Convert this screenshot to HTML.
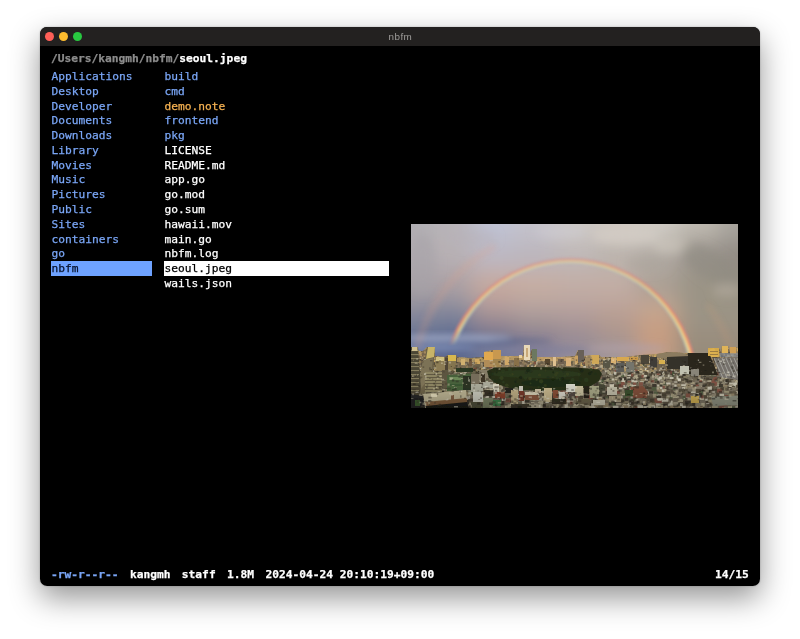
<!DOCTYPE html>
<html>
<head>
<meta charset="utf-8">
<title>nbfm</title>
<style>
html,body{margin:0;padding:0;background:#fff;}
body{width:800px;height:639px;position:relative;overflow:hidden;font-family:"DejaVu Sans Mono","Liberation Mono",monospace;font-size:11.23px;line-height:14.79px;color:#fff;}
.win{position:absolute;left:40px;top:27px;width:720px;height:559.4px;background:#000;border-radius:7px;overflow:hidden;
}
.shadow{position:absolute;left:40px;top:27px;width:720px;height:559px;border-radius:7px;box-shadow:0 12px 30px rgba(0,0,0,.42),0 0 2px rgba(0,0,0,.28);}
.tb{position:absolute;left:0;top:0;width:720px;height:19px;background:#232120;}
.tl{position:absolute;top:5.2px;width:9.2px;height:9.2px;border-radius:50%;}
.title{position:absolute;left:0;width:720px;top:3.6px;text-align:center;font-family:"Liberation Sans","DejaVu Sans",sans-serif;font-size:9.9px;letter-spacing:0.42px;padding-left:0.4px;line-height:12px;color:#a09e9c;}
.path{position:absolute;left:10.5px;top:24.5px;font-weight:bold;white-space:pre;color:#8c8c8c;}
.path b{color:#fff;}
.col{position:absolute;top:42.2px;}
.col div{height:14.79px;line-height:16.6px;white-space:pre;padding-left:0.5px;box-sizing:border-box;}
.d{color:#7aa6f6;}
.n{color:#f6b252;}
.c1{left:11.1px;width:100.9px;}
.c2{left:123.9px;width:225.1px;}
.sel1{background:#6ea2ff;color:#06102a;}
.sel2{background:#fff;color:#000;}
.st{position:absolute;left:11px;top:541.4px;font-weight:bold;white-space:pre;}
.st span{margin-right:11.4px;}
.cnt{position:absolute;right:11px;top:541.4px;font-weight:bold;}
.img{position:absolute;left:371px;top:197px;width:327px;height:184px;background:#b0a8a6;overflow:hidden;}
.path,.col,.st,.cnt,.title{will-change:transform;}
.col,.path,.st,.cnt{-webkit-text-stroke:0.25px;}
</style>
</head>
<body>
<div class="shadow"></div>
<div class="win">
<div class="tb">
<div class="tl" style="left:4.5px;background:#fe5f57;"></div>
<div class="tl" style="left:18.5px;background:#febc2e;"></div>
<div class="tl" style="left:32.7px;background:#28c840;"></div>
<div class="title">nbfm</div>
</div>
<div class="path">/Users/kangmh/nbfm/<b>seoul.jpeg</b></div>
<div class="col c1 d">
<div>Applications</div>
<div>Desktop</div>
<div>Developer</div>
<div>Documents</div>
<div>Downloads</div>
<div>Library</div>
<div>Movies</div>
<div>Music</div>
<div>Pictures</div>
<div>Public</div>
<div>Sites</div>
<div>containers</div>
<div>go</div>
<div class="sel1">nbfm</div>
</div>
<div class="col c2">
<div class="d">build</div>
<div class="d">cmd</div>
<div class="n">demo.note</div>
<div class="d">frontend</div>
<div class="d">pkg</div>
<div>LICENSE</div>
<div>README.md</div>
<div>app.go</div>
<div>go.mod</div>
<div>go.sum</div>
<div>hawaii.mov</div>
<div>main.go</div>
<div>nbfm.log</div>
<div class="sel2">seoul.jpeg</div>
<div>wails.json</div>
</div>
<div class="img" id="photo">
<svg width="327" height="184" viewBox="0 0 327 184" style="position:absolute;left:0;top:0;display:block">
<defs>
<filter id="b12" x="-20%" y="-20%" width="140%" height="140%"><feGaussianBlur stdDeviation="11"/></filter>
<filter id="b6" x="-30%" y="-30%" width="160%" height="160%"><feGaussianBlur stdDeviation="5"/></filter>
<filter id="b3" x="-20%" y="-20%" width="140%" height="140%"><feGaussianBlur stdDeviation="3"/></filter>
<filter id="b1" x="-5%" y="-5%" width="110%" height="110%"><feGaussianBlur stdDeviation="0.85"/></filter>
<filter id="b05" x="-5%" y="-5%" width="110%" height="110%"><feGaussianBlur stdDeviation="0.7"/></filter>
<linearGradient id="rbm" x1="0" y1="30" x2="0" y2="125" gradientUnits="userSpaceOnUse"><stop offset="0" stop-color="#fff" stop-opacity="0.42"/><stop offset="0.5" stop-color="#fff" stop-opacity="0.7"/><stop offset="1" stop-color="#fff" stop-opacity="1"/></linearGradient>
<linearGradient id="lf" x1="0" y1="106" x2="0" y2="122" gradientUnits="userSpaceOnUse"><stop offset="0" stop-color="#000" stop-opacity="0"/><stop offset="1" stop-color="#000" stop-opacity="1"/></linearGradient>
<mask id="rbmask"><rect x="0" y="0" width="327" height="184" fill="url(#rbm)"/><rect x="0" y="106" width="100" height="16" fill="url(#lf)"/><rect x="0" y="122" width="100" height="30" fill="#000"/></mask>
<clipPath id="skyclip"><rect x="0" y="0" width="327" height="130"/></clipPath>
</defs>
<rect x="0" y="0" width="327" height="184" fill="#b0a8a8"/>
<g filter="url(#b12)">
<rect x="-60.0" y="-60.0" width="81.0" height="76.0" fill="#b0aeb2"/>
<rect x="20.5" y="-60.0" width="41.5" height="76.0" fill="#b8b4b8"/>
<rect x="61.5" y="-60.0" width="41.5" height="76.0" fill="#bfc2d4"/>
<rect x="102.5" y="-60.0" width="41.5" height="76.0" fill="#c4c2cb"/>
<rect x="143.5" y="-60.0" width="41.5" height="76.0" fill="#ccc8c4"/>
<rect x="184.5" y="-60.0" width="41.5" height="76.0" fill="#cfc8c1"/>
<rect x="225.5" y="-60.0" width="41.5" height="76.0" fill="#d0ccc5"/>
<rect x="266.5" y="-60.0" width="41.0" height="76.0" fill="#bfbab1"/>
<rect x="307.0" y="-60.0" width="80.5" height="76.0" fill="#a8a49d"/>
<rect x="-60.0" y="15.5" width="81.0" height="31.5" fill="#b3acb0"/>
<rect x="20.5" y="15.5" width="41.5" height="31.5" fill="#b7b0b4"/>
<rect x="61.5" y="15.5" width="41.5" height="31.5" fill="#bcb8c3"/>
<rect x="102.5" y="15.5" width="41.5" height="31.5" fill="#bcb6bd"/>
<rect x="143.5" y="15.5" width="41.5" height="31.5" fill="#bfb8b8"/>
<rect x="184.5" y="15.5" width="41.5" height="31.5" fill="#bbb4ad"/>
<rect x="225.5" y="15.5" width="41.5" height="31.5" fill="#b3aca5"/>
<rect x="266.5" y="15.5" width="41.0" height="31.5" fill="#9b948d"/>
<rect x="307.0" y="15.5" width="80.5" height="31.5" fill="#938c85"/>
<rect x="-60.0" y="46.5" width="81.0" height="29.0" fill="#a7a0a4"/>
<rect x="20.5" y="46.5" width="41.5" height="29.0" fill="#aba0a4"/>
<rect x="61.5" y="46.5" width="41.5" height="29.0" fill="#c6a99e"/>
<rect x="102.5" y="46.5" width="41.5" height="29.0" fill="#c6ada2"/>
<rect x="143.5" y="46.5" width="41.5" height="29.0" fill="#c2ada5"/>
<rect x="184.5" y="46.5" width="41.5" height="29.0" fill="#c2ada5"/>
<rect x="225.5" y="46.5" width="41.5" height="29.0" fill="#aba095"/>
<rect x="266.5" y="46.5" width="41.0" height="29.0" fill="#9b9486"/>
<rect x="307.0" y="46.5" width="80.5" height="29.0" fill="#979082"/>
<rect x="-60.0" y="75.0" width="81.0" height="22.5" fill="#8c8c9b"/>
<rect x="20.5" y="75.0" width="41.5" height="22.5" fill="#85889a"/>
<rect x="61.5" y="75.0" width="41.5" height="22.5" fill="#ae9999"/>
<rect x="102.5" y="75.0" width="41.5" height="22.5" fill="#b3a19d"/>
<rect x="143.5" y="75.0" width="41.5" height="22.5" fill="#b6a19d"/>
<rect x="184.5" y="75.0" width="41.5" height="22.5" fill="#baa196"/>
<rect x="225.5" y="75.0" width="41.5" height="22.5" fill="#c5a58f"/>
<rect x="266.5" y="75.0" width="41.0" height="22.5" fill="#9b9486"/>
<rect x="307.0" y="75.0" width="80.5" height="22.5" fill="#9b9486"/>
<rect x="-60.0" y="97.0" width="81.0" height="17.5" fill="#6d7895"/>
<rect x="20.5" y="97.0" width="41.5" height="17.5" fill="#657294"/>
<rect x="61.5" y="97.0" width="41.5" height="17.5" fill="#80788a"/>
<rect x="102.5" y="97.0" width="41.5" height="17.5" fill="#93878e"/>
<rect x="143.5" y="97.0" width="41.5" height="17.5" fill="#9f8d92"/>
<rect x="184.5" y="97.0" width="41.5" height="17.5" fill="#ae958a"/>
<rect x="225.5" y="97.0" width="41.5" height="17.5" fill="#c89d80"/>
<rect x="266.5" y="97.0" width="41.0" height="17.5" fill="#9b9082"/>
<rect x="307.0" y="97.0" width="80.5" height="17.5" fill="#9b9082"/>
<rect x="-60.0" y="114.0" width="81.0" height="36.5" fill="#5e6c94"/>
<rect x="20.5" y="114.0" width="41.5" height="36.5" fill="#56648c"/>
<rect x="61.5" y="114.0" width="41.5" height="36.5" fill="#697498"/>
<rect x="102.5" y="114.0" width="41.5" height="36.5" fill="#807c96"/>
<rect x="143.5" y="114.0" width="41.5" height="36.5" fill="#948c99"/>
<rect x="184.5" y="114.0" width="41.5" height="36.5" fill="#a39596"/>
<rect x="225.5" y="114.0" width="41.5" height="36.5" fill="#c59d84"/>
<rect x="266.5" y="114.0" width="41.0" height="36.5" fill="#978c7a"/>
<rect x="307.0" y="114.0" width="80.5" height="36.5" fill="#978c7a"/>
</g>
<g filter="url(#b6)">
<ellipse cx="215" cy="12" rx="34" ry="9" fill="#d8d2ca" opacity="0.55"/>
<ellipse cx="150" cy="8" rx="26" ry="7" fill="#cfcdd6" opacity="0.5"/>
<ellipse cx="262" cy="22" rx="20" ry="8" fill="#d2ccc2" opacity="0.5"/>
<ellipse cx="300" cy="42" rx="34" ry="14" fill="#8e8a82" opacity="0.55" transform="rotate(35 300 42)"/>
<ellipse cx="316" cy="66" rx="14" ry="7" fill="#b4ac9e" opacity="0.6"/>
<ellipse cx="236" cy="40" rx="22" ry="8" fill="#a8a29a" opacity="0.4"/>
<ellipse cx="12" cy="40" rx="14" ry="30" fill="#a6a2a8" opacity="0.5"/>
<ellipse cx="60" cy="14" rx="26" ry="9" fill="#b6b2b8" opacity="0.4"/>
</g>
<g filter="url(#b3)">
<ellipse cx="40" cy="114" rx="60" ry="3.5" fill="#a4acc8" opacity="0.8"/>
<ellipse cx="60" cy="119" rx="50" ry="2.5" fill="#5c6c94" opacity="0.8"/>
<ellipse cx="25" cy="124" rx="40" ry="3" fill="#8494bc" opacity="0.8"/>
<ellipse cx="120" cy="126" rx="60" ry="4" fill="#80809c" opacity="0.6"/>
<ellipse cx="110" cy="117" rx="32" ry="2.2" fill="#5c6488" opacity="0.7"/>
<ellipse cx="215" cy="124" rx="40" ry="4" fill="#b0a0a8" opacity="0.6"/>
</g>
<g clip-path="url(#skyclip)">
<g filter="url(#b3)" opacity="0.3" fill="none"><path d="M 6 125 A 158 158 0 0 1 84 22" stroke="#e0a088" stroke-width="5"/><path d="M 296 80 A 160 160 0 0 1 320 125" stroke="#d8a078" stroke-width="5" opacity="0.7"/></g>
<g mask="url(#rbmask)"><g filter="url(#b1)" fill="none">
<circle cx="159.1" cy="161.5" r="127.3" stroke="#d08088" stroke-width="1.3" opacity="0.6"/>
<circle cx="159.1" cy="161.5" r="126.2" stroke="#ec8870" stroke-width="1.4" opacity="0.95"/>
<circle cx="159.1" cy="161.5" r="125.0" stroke="#f8b070" stroke-width="1.4" opacity="1"/>
<circle cx="159.1" cy="161.5" r="123.8" stroke="#f8d890" stroke-width="1.4" opacity="1"/>
<circle cx="159.1" cy="161.5" r="122.6" stroke="#d4dca8" stroke-width="1.4" opacity="0.8"/>
<circle cx="159.1" cy="161.5" r="121.4" stroke="#b0bcc8" stroke-width="1.3" opacity="0.4"/>
</g></g></g>
<defs><linearGradient id="cg" x1="0" y1="121" x2="0" y2="184" gradientUnits="userSpaceOnUse"><stop offset="0" stop-color="#a88c5c"/><stop offset="0.3" stop-color="#80705a"/><stop offset="0.65" stop-color="#6c6450"/><stop offset="1" stop-color="#585044"/></linearGradient>
<linearGradient id="dk" x1="0" y1="160" x2="0" y2="184" gradientUnits="userSpaceOnUse"><stop offset="0" stop-color="#000" stop-opacity="0"/><stop offset="1" stop-color="#000" stop-opacity="0.22"/></linearGradient>
<clipPath id="cityclip"><polygon points="0,123 7,123 7,127 12,127 16,123 24,123 24,132 34,133 37,131 45,131 46,133 60,134 73,133 73,128 82,126 90,127 90,132 112,132 113,121 119,121 119,130 121,125 126,125 126,133 150,133 164,132 167,126 173,126 173,132 181,131 188,131 190,133 215,133 230,131 246,130 258,128 272,129 277,129 297,129 297,124 308,124 309,128 311,122 317,122 318,126 319,123 325,123 327,124 327,184 0,184"/></clipPath></defs>
<g filter="url(#b05)">
<polygon points="0,123 7,123 7,127 12,127 16,123 24,123 24,132 34,133 37,131 45,131 46,133 60,134 73,133 73,128 82,126 90,127 90,132 112,132 113,121 119,121 119,130 121,125 126,125 126,133 150,133 164,132 167,126 173,126 173,132 181,131 188,131 190,133 215,133 230,131 246,130 258,128 272,129 277,129 297,129 297,124 308,124 309,128 311,122 317,122 318,126 319,123 325,123 327,124 327,184 0,184" fill="url(#cg)"/>
<g clip-path="url(#cityclip)">
<g filter="url(#b3)">
<rect x="-5" y="136" width="85" height="36" fill="#504c38"/>
<rect x="185" y="140" width="150" height="24" fill="#746c5c"/>
<rect x="60" y="163" width="270" height="24" fill="#706858"/>
<rect x="250" y="130" width="60" height="22" fill="#3c3830"/>
</g>
<g opacity="0.75">
<path fill="#c0a070" d="M-1.8 122.4h1.9v2h-1.9zM47.9 122.1h1.7v1.4h-1.7zM63.6 121.4h1.7v1.6h-1.7zM75.9 122h2.4v1.9h-2.4zM89.2 122.3h1.4v1.8h-1.4zM90.6 122h1.4v1.4h-1.4zM109.6 122.4h2.3v1.6h-2.3zM126.3 122.1h1.8v1.5h-1.8zM175.2 121.9h1.4v2h-1.4zM201.6 122.1h1.4v1.1h-1.4zM238.2 121.5h2.4v1.3h-2.4zM247.6 122.4h2.5v1.7h-2.5zM251.9 122.2h1.6v1.1h-1.6zM264.6 122h2.4v2h-2.4zM267.1 122.3h2.4v2h-2.4zM276.5 122h1.2v1.8h-1.2zM305.7 121.6h2.2v1.4h-2.2zM38.3 123.3h2v1.8h-2zM76.5 123.3h1.1v2h-1.1zM86.7 122.8h2.2v1h-2.2zM155.3 123.8h2.1v1.2h-2.1zM168.8 123.5h2.4v1.3h-2.4zM192.1 123.7h2.3v1.5h-2.3zM201 123.3h2.3v1.4h-2.3zM207.8 123h2.1v1.3h-2.1zM220.7 123h2.2v1.2h-2.2zM224.3 123.6h1.8v1.4h-1.8zM247.4 122.9h2.5v1.9h-2.5zM249.9 123.6h1.3v1h-1.3zM40.7 124.8h1.3v1.7h-1.3zM54.9 124.8h1.3v1.4h-1.3zM62.5 123.9h1.9v1.4h-1.9zM74.5 123.9h1.3v1.8h-1.3zM99.7 124.1h1.4v1.1h-1.4zM137.6 124.5h2.4v1.6h-2.4zM146.2 123.9h1.2v1.7h-1.2zM152 124.3h1.1v1.1h-1.1zM164.3 124.6h2.1v1h-2.1zM184.6 124.1h2.1v1h-2.1zM189.1 124.3h1.5v1.9h-1.5zM192.2 124.9h1.7v1.7h-1.7zM216 124.3h2.2v1.5h-2.2zM241.5 124.6h1.7v1h-1.7zM9.8 125.1h1.6v1.1h-1.6zM61.1 125.5h2.2v1.3h-2.2zM80.7 125.3h1.7v2h-1.7zM86.1 125.1h2.5v1.2h-2.5zM147.3 125.4h2.5v1.8h-2.5zM171.9 125.3h1.4v1.3h-1.4zM201 125.5h1.8v1.2h-1.8zM203 125.2h1.9v2h-1.9zM212.5 125.7h1.6v2h-1.6zM265.9 126.2h1.7v1.9h-1.7zM273.9 125h1.1v1.8h-1.1zM290.2 125h1.2v1h-1.2zM298.9 125.3h2v1.7h-2zM302.1 125.3h2.2v1h-2.2zM27.7 127.2h1.7v1.9h-1.7zM57.5 127.3h1.5v1.7h-1.5zM74.8 126.7h1.6v1.6h-1.6zM88 126.6h1.2v1.3h-1.2zM98.8 126.4h2.2v1.1h-2.2zM108.8 126.7h2.4v1h-2.4zM144.6 127.2h1.8v1.7h-1.8zM152.9 126.9h2.5v1.5h-2.5zM178.7 126.5h1.9v1.8h-1.9zM193 126.8h1.3v2.1h-1.3zM300.4 126.5h1.3v1.7h-1.3zM9.1 128.2h1.2v1.7h-1.2zM20.5 127.4h1.1v1.2h-1.1zM37.4 127.6h2.3v1.4h-2.3zM72.4 127.8h2.5v1.7h-2.5zM75.4 127.4h1.7v2h-1.7zM103 127.8h2v1.1h-2zM128.6 127.9h2.3v1.3h-2.3zM131.5 127.4h1.9v1.2h-1.9zM175.6 127.9h1.4v1.5h-1.4zM221.5 127.7h2.1v1.4h-2.1zM226.8 127.6h2.4v2h-2.4zM278.8 128.4h2.1v1.3h-2.1zM296.3 128.4h2.3v1.3h-2.3zM312.3 128h2.4v1.4h-2.4zM14.8 129.4h2.2v1.7h-2.2zM17.5 129.5h1.4v1.8h-1.4zM61.2 129.4h2.5v1.8h-2.5zM85.1 129.5h1.9v1.3h-1.9zM149.5 128.9h1.7v1.8h-1.7zM202 128.7h1.1v1.8h-1.1zM229.6 129.1h2v1.7h-2zM242.6 128.7h1.3v1.6h-1.3zM246.3 128.8h1.4v1.2h-1.4zM247.8 128.6h1.7v1h-1.7zM287.8 128.8h1.9v1.4h-1.9zM289.8 129.4h1.5v1.7h-1.5zM291.4 128.9h1v1.1h-1zM306.2 128.6h1.1v1.6h-1.1zM324.6 128.8h2v1.6h-2zM38.2 130.6h2.5v1.9h-2.5zM54.3 130.4h2v1.7h-2zM96.7 130.8h2.3v1.6h-2.3zM121.4 130.5h1.2v1.9h-1.2zM149.9 129.9h2.2v1.8h-2.2zM163.7 130.7h1.2v1.1h-1.2zM176.1 129.8h2.4v1.3h-2.4zM216.6 130.1h1.9v1.9h-1.9zM218.7 130.6h2.5v1.3h-2.5zM234.4 130.9h1.5v1.4h-1.5zM258.8 129.9h2.3v1.8h-2.3zM283.8 130.8h2.5v1.8h-2.5zM307.7 130.6h2.4v1h-2.4zM322.7 130.5h2.2v1.7h-2.2zM3.5 131.9h2.6v1.8h-2.6zM46.6 131.3h2.6v2.2h-2.6zM136.7 131.5h2.5v1.3h-2.5zM139.4 131.9h1.7v1.2h-1.7zM141.2 131.8h2.3v1.8h-2.3zM145.4 131.5h2.3v1.7h-2.3zM150.2 131.1h1.6v1.2h-1.6zM170.8 131.1h1.4v2.1h-1.4zM188.1 131.6h2.6v1.3h-2.6zM211 131.1h1.6v1.1h-1.6zM25.4 132.2h1.9v2.1h-1.9zM32.1 132.2h1.9v2h-1.9zM47.6 133h1.2v1.8h-1.2zM73.5 133.3h1.5v1.6h-1.5zM80.9 132.7h1.8v2h-1.8zM84.4 132.8h1.4v1.1h-1.4zM92.3 132.7h2.2v2.1h-2.2zM154.9 132.3h1.4v1.1h-1.4zM192.8 133.1h1.3v1.6h-1.3zM200.3 132.9h2.4v2.1h-2.4zM219 132.3h2.2v1.9h-2.2zM225.1 132.6h2.2v1.7h-2.2zM234.6 133h2.4v2h-2.4zM263.2 133.2h1.2v1.9h-1.2zM280.3 133.3h2.4v2.1h-2.4zM293 132.4h1.3v1.9h-1.3zM3.5 133.8h1.9v2.1h-1.9zM75.4 133.5h2.3v1.2h-2.3zM117.6 134h1.5v1.8h-1.5zM119.3 134.2h2.7v1.4h-2.7zM133.3 133.9h1.2v1.4h-1.2zM153.3 133.5h1.2v2.2h-1.2zM206 133.9h1.2v1.8h-1.2zM240.8 133.9h2.5v1.9h-2.5zM276.4 134.1h1.3v1.2h-1.3zM300.6 134h1.6v2h-1.6zM4.7 135.8h2.7v1.1h-2.7zM112 135.6h1.6v1.3h-1.6zM154.6 135.6h2.7v1.7h-2.7zM214.1 134.8h1.6v1.2h-1.6zM225.4 135.7h2.6v1.9h-2.6zM287.4 134.9h2.2v1.9h-2.2zM321.1 135h1.4v2.1h-1.4zM11 136.4h3v2.1h-3zM24.1 136.7h2.7v2.2h-2.7zM40.2 137.3h2.7v2.1h-2.7zM53 136.2h2.6v1.5h-2.6zM71.5 136.5h1.7v1.7h-1.7zM89.1 136.8h1.5v2.2h-1.5zM124.8 136.3h2.8v2.3h-2.8zM139.1 137h2.5v2.1h-2.5zM144.2 136.7h2.8v2h-2.8zM205.5 136.5h1.5v1.5h-1.5zM238.5 136.5h1.8v1.6h-1.8zM242.3 136.8h1.2v2.3h-1.2zM253.1 136.5h2.1v1.9h-2.1zM69.3 138.2h2.1v2.2h-2.1zM91.7 137.6h2.9v2.4h-2.9zM114 138h2.4v1.4h-2.4zM119.3 138.4h3.1v2.3h-3.1zM175.3 138h1.3v2.1h-1.3zM178.4 138.6h2.2v1.3h-2.2zM220.1 138h2.2v2.1h-2.2zM281.9 137.6h1.3v2.5h-1.3zM28.4 139.4h1.9v1.6h-1.9zM33.2 140.1h1.4v2.6h-1.4zM44 138.9h1.7v2.5h-1.7zM74.4 139.8h1.3v1.7h-1.3zM85.5 140.1h1.5v2.4h-1.5zM129.1 139.9h2.2v2h-2.2zM146.6 139.5h1.9v2h-1.9zM223.7 139.4h2.4v1.8h-2.4zM295.5 139h1.9v2.2h-1.9zM299.5 140h2v2.1h-2zM20.5 140.4h2v2.4h-2zM51.9 140.7h3.3v1.7h-3.3zM103.2 140.4h2.7v1.7h-2.7zM156.1 141.6h3.2v2.1h-3.2zM188.6 141.3h1.9v1.4h-1.9zM257.4 140.9h2.8v1.6h-2.8zM0.3 142.7h1.8v1.7h-1.8zM39.1 142h2.7v1.6h-2.7zM316.8 142.9h2v2.6h-2zM11.5 143.5h3.1v2h-3.1zM15.2 144.1h3v1.5h-3zM31.4 143.7h2.5v2h-2.5zM150.3 143.6h2v1.3h-2zM159.9 144.6h2.3v1.5h-2.3zM166.8 144.1h3.1v1.6h-3.1zM190.3 144h2.4v1.8h-2.4zM214.6 144.5h3v2.2h-3zM271.4 143.5h2.8v2.7h-2.8zM293.3 144.2h2.9v2.5h-2.9zM309.4 143.6h2.1v2.3h-2.1zM182.6 146.2h2.4v2.5h-2.4z"/>
<path fill="#d0b070" d="M0.1 121.5h2.2v1.5h-2.2zM27.1 121.7h2.3v1.7h-2.3zM34.2 122.2h1.8v1.6h-1.8zM36 122.3h1.4v1.7h-1.4zM40.2 122.5h2.3v1.6h-2.3zM46.8 121.5h1.1v1.3h-1.1zM67.6 122.2h1.8v2h-1.8zM74.8 121.5h1.1v1.1h-1.1zM154.8 121.5h2.2v1.4h-2.2zM160.4 122.5h2.2v1.2h-2.2zM179.3 121.9h2.2v1h-2.2zM199.7 122.5h1.7v1.9h-1.7zM214.3 121.8h1.7v1.8h-1.7zM236.3 121.6h1.6v1.2h-1.6zM262.4 122.5h2.1v1.6h-2.1zM269.4 122.4h2.3v1.4h-2.3zM277.7 122.4h2.2v1h-2.2zM303.6 122.6h1.9v1.1h-1.9zM-0.9 122.8h2v1.7h-2zM1.2 123h1.2v1.4h-1.2zM26.5 122.7h1.2v1.1h-1.2zM30.3 123h1.7v1.5h-1.7zM54.5 122.9h1.8v1.5h-1.8zM56.7 123.5h1.4v1.3h-1.4zM64.8 122.7h2.5v1.2h-2.5zM71.4 123h2.5v1h-2.5zM85.4 122.8h1.2v1.8h-1.2zM96.9 123.1h2.4v2h-2.4zM120 123.1h2.3v1.6h-2.3zM151.7 123.4h1.7v2.1h-1.7zM161.5 123.7h2.3v1.2h-2.3zM178.6 123.8h1.6v1.7h-1.6zM182.6 122.6h2v1.4h-2zM222.9 123.1h1.6v1.2h-1.6zM244.9 123.6h2.2v2h-2.2zM315.3 123.5h2.5v1.4h-2.5zM2 124.4h1.3v1.8h-1.3zM67.4 123.9h1.3v1.4h-1.3zM76.1 125h1.4v1.2h-1.4zM85.1 124.6h2.5v1.4h-2.5zM115.7 124.9h1.6v1.8h-1.6zM130 124.3h1.6v1h-1.6zM161.9 123.9h2.2v1.8h-2.2zM231.8 125h1.4v1.7h-1.4zM270.2 124.6h2v1.6h-2zM3.1 126h2v1.1h-2zM42.9 125.7h2.4v1.7h-2.4zM82.7 125.6h1.8v1.6h-1.8zM96.3 126h1.9v1.3h-1.9zM122.8 125.9h2.3v1.8h-2.3zM125.6 125.5h2.5v1.9h-2.5zM137.9 125.8h1.3v1.9h-1.3zM141.2 126.1h2.4v2h-2.4zM150.9 125h1.5v1.4h-1.5zM313.9 125.4h2.3v1.1h-2.3zM321.2 125.3h1.7v1.5h-1.7zM-2.5 126.3h2.3v1.7h-2.3zM43.3 126.6h1.7v1.8h-1.7zM45 126.6h1.8v1.6h-1.8zM55.1 126.8h2.4v1.2h-2.4zM59.3 127.2h1.7v1.7h-1.7zM67.9 126.4h1.7v1.7h-1.7zM77.7 127.3h2.3v1.3h-2.3zM107 126.7h1.6v1.9h-1.6zM115.6 127.1h2v1.1h-2zM164.6 126.5h2.1v1.2h-2.1zM166.7 126.6h1.4v1.3h-1.4zM187.7 127h1.2v1h-1.2zM189.2 126.5h1.8v1.6h-1.8zM219.8 126.7h2v1.9h-2zM246.5 126.5h2v1.9h-2zM1.5 128.2h1.9v1.9h-1.9zM6.4 128.3h2.2v1.3h-2.2zM18.3 128h1.8v1.9h-1.8zM28.5 128.5h2.2v1.9h-2.2zM54 128.2h1.7v1.2h-1.7zM57.7 128.5h1.6v1.1h-1.6zM94.3 127.8h1.1v1.8h-1.1zM117.5 127.8h2v1.1h-2zM157.5 128.5h2.3v1.8h-2.3zM246.1 127.8h1.6v1.2h-1.6zM262 127.8h1.1v1.8h-1.1zM276.2 127.5h2.2v1.4h-2.2zM327.9 128h1.8v1.2h-1.8zM29.9 129.6h1.2v1.6h-1.2zM35.9 128.7h2.1v2h-2.1zM65.7 129.4h1.9v1.6h-1.9zM72.7 129.5h1.7v1.4h-1.7zM74.4 129.2h1.4v1.6h-1.4zM80.7 128.7h1.4v2.1h-1.4zM101.6 128.6h1.4v1.1h-1.4zM104.5 129.4h1.9v1.6h-1.9zM134.2 128.6h1.3v1.5h-1.3zM176.6 129.4h1.8v1.8h-1.8zM192.3 128.9h1.9v1.7h-1.9zM197.8 128.7h1.9v1.5h-1.9zM203.1 129.1h2.4v1.5h-2.4zM249.3 129.3h1.8v1.2h-1.8zM304.5 129.3h1.5v1.2h-1.5zM307.6 128.9h2v1.9h-2zM41.1 130.9h2.2v1.1h-2.2zM102.9 129.7h2.4v1.9h-2.4zM138 130.8h1.5v1.8h-1.5zM170.1 130.2h1.6v1.3h-1.6zM179.5 130h2v2h-2zM191.2 130h2v1.3h-2zM193.7 130.5h1.7v1.5h-1.7zM200.7 130.7h2.5v1.4h-2.5zM203.5 129.8h1.3v2.1h-1.3zM240.1 130.9h2.1v2h-2.1zM252.6 130.6h2.2v1.4h-2.2zM56.7 131.1h1.6v2h-1.6zM64.7 131.8h2.3v2.1h-2.3zM74 131.4h2.4v1.2h-2.4zM80 131.4h2.1v1.7h-2.1zM97.9 131.8h2.1v1.8h-2.1zM257.1 132h2.6v1.8h-2.6zM267.8 131.6h1.6v1h-1.6zM271.3 130.9h1.2v1.7h-1.2zM303.1 131.9h1.4v1.3h-1.4zM306.7 131.7h1.1v2.1h-1.1zM308 131.3h1.8v1.5h-1.8zM314.3 132h2.7v1.5h-2.7zM316.8 131.9h2.6v1.9h-2.6zM328.1 131.5h2v1.4h-2zM1.6 132.7h2.4v1.9h-2.4zM5.9 132.8h1.8v1.5h-1.8zM22.2 133.3h1.6v2h-1.6zM39.2 132.9h1.9v1.4h-1.9zM75.1 132.8h1.4v1.1h-1.4zM87.3 132.5h1.4v1.5h-1.4zM110.6 132.9h1.4v1.5h-1.4zM190.8 132.5h1.8v1.2h-1.8zM210.1 132.8h2.4v1.6h-2.4zM284.1 133.1h1.5v1.5h-1.5zM313.4 132.4h1.1v1.2h-1.1zM326.2 132.2h2.2v1.2h-2.2zM23.3 133.9h1.4v1.6h-1.4zM30.8 134.3h2.7v1.7h-2.7zM39.2 134.2h1.8v1.8h-1.8zM130.8 133.5h2.5v1.2h-2.5zM150.3 134.5h2.4v1.8h-2.4zM181.1 133.6h2.4v1.5h-2.4zM248.9 133.6h1.2v1.8h-1.2zM254.9 134.2h2.7v1.8h-2.7zM306.5 134.2h2.6v2.1h-2.6zM326.2 134.1h1.8v1.8h-1.8zM14.8 135.9h2.3v1.8h-2.3zM53.7 135.5h2.5v1.6h-2.5zM83.1 135h2.9v1.4h-2.9zM87.5 135.4h2.7v1.8h-2.7zM219.7 134.8h2.4v1.2h-2.4zM275.9 135.4h2.2v1.2h-2.2zM280.2 135.3h1.6v1.9h-1.6zM315.7 135.4h2.1v1.8h-2.1zM0.9 136.3h2.9v1.5h-2.9zM20.6 137.2h2.9v1.6h-2.9zM27.5 136.2h1.9v2.1h-1.9zM121.3 136.8h1.9v1.4h-1.9zM181.4 136.9h2.7v1.5h-2.7zM269 136.1h1.6v2.3h-1.6zM286.3 136.3h1.3v2.3h-1.3zM293.3 136.1h1.9v2h-1.9zM305.1 136.5h1.9v1.8h-1.9zM12.6 138.4h2.9v1.5h-2.9zM16.2 138.2h1.3v2.4h-1.3zM17.8 138.2h2.3v1.2h-2.3zM110.8 137.5h2.6v2h-2.6zM137.9 138.3h2.6v1.7h-2.6zM161.7 137.8h2.6v2.3h-2.6zM202.4 138.2h3v1.9h-3zM312.4 137.5h2v2.5h-2zM322 138.4h1.9v1.4h-1.9zM13 139.9h1.7v1.3h-1.7zM94.8 139.2h2.5v1.4h-2.5zM97.9 139.4h1.4v2.2h-1.4zM117.3 139h2.9v1.6h-2.9zM131.7 139.1h2v1.5h-2zM159.7 139.2h1.5v1.9h-1.5zM256 139.4h2.5v1.4h-2.5zM297.5 139h1.9v1.5h-1.9zM320.7 139.9h3.2v1.7h-3.2zM325.9 139.6h2.8v2.5h-2.8zM-1 141.1h2v2.2h-2zM145.8 141.1h1.9v1.7h-1.9zM152.3 141.2h2.1v1.4h-2.1zM175.3 140.6h2.3v1.6h-2.3zM190.6 141.2h3v2.5h-3zM226.4 141.5h1.4v1.7h-1.4zM289.3 140.7h2.5v1.5h-2.5zM326.9 140.8h1.7v1.5h-1.7zM91 142.9h3.1v2h-3.1zM106.1 142h1.8v2.5h-1.8zM114 142.5h2.2v1.6h-2.2zM179.3 142.6h2.1v2h-2.1zM202.2 143h1.5v2.2h-1.5zM212.9 142.5h1.7v2.1h-1.7zM214.6 142.1h2v2.4h-2zM232.7 142.6h2.1v2.7h-2.1zM257.8 142.6h2.2v2.4h-2.2zM266 142.8h2.3v2.6h-2.3zM310.5 143.1h2v1.3h-2zM69.8 143.6h2.9v2.3h-2.9zM90.1 143.9h2.4v1.5h-2.4zM106.3 144.5h1.8v2.1h-1.8zM111.9 143.5h2.3v1.8h-2.3zM264.4 143.6h2.7v2.7h-2.7zM302.3 143.6h3.1v1.6h-3.1zM314.2 143.6h2.3v2.7h-2.3zM226.8 145.8h1.5v2h-1.5zM231.2 145.8h3.1v2.2h-3.1zM234.8 145.7h2.8v2.9h-2.8z"/>
<path fill="#c8a868" d="M2.4 122.1h1.2v1.9h-1.2zM5.6 122.3h1.1v1.2h-1.1zM12.4 121.7h1.6v2.1h-1.6zM18 121.5h2.4v1.1h-2.4zM24.4 121.7h2.5v1.6h-2.5zM83.2 122.3h1v1.1h-1zM102.5 121.7h1.5v1.5h-1.5zM116.4 122h1v1.4h-1zM144.2 122.3h1.3v1.1h-1.3zM148.6 121.6h2.5v2h-2.5zM186.4 121.4h2.4v1.7h-2.4zM195.9 121.8h2v1.5h-2zM271.9 122.2h1.8v1.6h-1.8zM281.2 122.3h2.2v1.6h-2.2zM2.4 123.5h1.4v2h-1.4zM11.1 123h1.8v1.6h-1.8zM52.6 122.6h1.7v1.6h-1.7zM89 123.4h1.5v1.5h-1.5zM95.4 123.5h1.4v1.2h-1.4zM110.5 123.8h2.2v1.8h-2.2zM115 122.8h1.1v1.4h-1.1zM171.4 123h1.3v2h-1.3zM194.5 122.9h1.8v1.1h-1.8zM205.2 123.7h2.3v1.8h-2.3zM210 123.5h1v1.2h-1zM257.2 123.6h1.5v1.4h-1.5zM304.5 122.7h2.3v2h-2.3zM319.9 123.1h1.5v2.1h-1.5zM11.5 124.5h1.9v2h-1.9zM77.9 124.5h2.4v1.9h-2.4zM87.9 124.2h1.9v1.8h-1.9zM107.3 124.2h2.5v2h-2.5zM134.3 124.2h1.1v1.4h-1.1zM153.1 124.1h2.2v1.2h-2.2zM198.6 124.3h1.4v1.9h-1.4zM200.2 124.4h1.2v1.5h-1.2zM214.6 124.3h1.3v1.5h-1.3zM233.2 124.1h2.2v1.3h-2.2zM254.4 124.3h2.4v1.9h-2.4zM265.9 124.5h1.9v1.6h-1.9zM296.6 124.5h2.4v1.6h-2.4zM329.2 123.9h1.3v1.8h-1.3zM0.7 126h2.3v1.1h-2.3zM30.7 125.3h1.3v1.5h-1.3zM46.6 125.1h1.6v1.7h-1.6zM110.6 125.6h1.7v1.7h-1.7zM156.5 125.5h1.7v1.1h-1.7zM164.4 125.3h2.4v1.9h-2.4zM187.2 126.1h2.4v1.7h-2.4zM262.9 126.1h1.6v1.3h-1.6zM286.9 125.2h1.4v1.2h-1.4zM296.3 125.2h2.4v2h-2.4zM329.6 126.1h1.2v1.4h-1.2zM7.6 126.7h2.4v1.2h-2.4zM89.1 126.6h1v2h-1zM92.6 126.4h2.3v1.1h-2.3zM119.4 127.1h1.9v1.5h-1.9zM139.4 127.1h1.9v1.6h-1.9zM173.7 126.7h2.5v1.5h-2.5zM191.3 127h1.8v1.6h-1.8zM237.8 127h1.8v1.9h-1.8zM244 126.7h2.3v1.5h-2.3zM310.6 126.7h1.2v2.1h-1.2zM325.9 126.5h1.5v1.8h-1.5zM3.7 127.7h2.4v2h-2.4zM23.5 128.1h2.4v1.6h-2.4zM47 127.5h2.2v1.2h-2.2zM59.6 128.4h1.4v2.1h-1.4zM68.4 128.2h1.5v1h-1.5zM84.5 127.5h1.9v1.8h-1.9zM122.1 127.4h1.4v1.4h-1.4zM133.8 127.8h2.3v1.9h-2.3zM137.9 128.2h1.2v1.2h-1.2zM146.9 127.9h1.4v1.8h-1.4zM169.6 127.9h1.4v1.9h-1.4zM199.2 128.4h2.1v1.4h-2.1zM204 127.8h2.4v1.5h-2.4zM244.6 128.4h1.4v1.9h-1.4zM253.3 128.1h2v1.6h-2zM263.2 128.4h1.8v1.1h-1.8zM274.7 127.6h1.2v1.4h-1.2zM285.7 128.2h2.1v2h-2.1zM8.3 129.3h2.3v1.5h-2.3zM27.6 129.5h2.1v1.5h-2.1zM33.5 129.4h2v1.8h-2zM69.4 129h1.5v1.3h-1.5zM109.9 128.8h1.3v1.9h-1.3zM111.5 129.6h1.9v1.1h-1.9zM143.8 129.1h1.9v2.1h-1.9zM160.2 129.5h1.2v1.7h-1.2zM173.3 129.5h1.2v1h-1.2zM254.3 128.8h2.2v1.6h-2.2zM268.8 129h1.4v2.1h-1.4zM326.6 128.6h2.5v1.6h-2.5zM28.9 130.6h1.3v1.1h-1.3zM63.2 130.2h1.7v2.1h-1.7zM85.6 130h1.7v1.9h-1.7zM92.3 129.9h1.8v1.8h-1.8zM139.6 130.9h2.4v2h-2.4zM172 130.1h1.6v2h-1.6zM178.5 130.3h1.1v1.6h-1.1zM205.1 129.8h1.8v1.5h-1.8zM213.6 129.9h1.6v1.6h-1.6zM230.7 130.1h1.9v1.8h-1.9zM242.8 130.3h2.6v1.9h-2.6zM267 129.7h1.3v1.4h-1.3zM277 130.8h1.7v1.9h-1.7zM312.8 129.7h1.2v1.7h-1.2zM318.1 130.6h1.8v1.6h-1.8zM26.1 131.8h1.6v1.2h-1.6zM41.9 131.1h2.2v1.4h-2.2zM52.8 131.5h1.2v1.6h-1.2zM118.8 131.7h1.8v1.8h-1.8zM155.5 131.8h2.6v1.4h-2.6zM158 131.9h1.3v2.2h-1.3zM185 131.6h2.6v2h-2.6zM190.7 131.3h2.2v1.6h-2.2zM204.6 131.9h1.2v1.1h-1.2zM208.5 131h2.6v1.3h-2.6zM259.6 131.2h2.6v1.7h-2.6zM295 131.1h2.6v1.2h-2.6zM20.7 132.2h1.3v1.3h-1.3zM27.5 132.7h1.8v1.9h-1.8zM37.2 133.2h2.1v1.9h-2.1zM50.3 132.3h1.8v1.8h-1.8zM68.6 132.9h2.2v2h-2.2zM168.7 132.7h1.6v1.5h-1.6zM179.3 132.6h1.9v1.2h-1.9zM183.6 133.2h2.3v1.3h-2.3zM202.7 133.2h2.6v2.1h-2.6zM217.1 132.3h1.9v1.4h-1.9zM237.1 132.6h2.7v1.5h-2.7zM271.7 133.1h2.7v2.1h-2.7zM296.6 132.8h1.2v1.6h-1.2zM309 132.7h1.5v2h-1.5zM321.3 132.3h2.6v1.8h-2.6zM27.7 133.5h1.1v1.6h-1.1zM41.3 133.8h1.7v1.1h-1.7zM71.6 134.2h1.3v1.9h-1.3zM128.9 133.5h1.8v1.3h-1.8zM159.5 134h2.8v1.4h-2.8zM194.3 134.6h2.4v2.1h-2.4zM218.4 134.5h2.3v2.1h-2.3zM227.5 134.2h1.9v1.2h-1.9zM237.5 134.3h1.2v1.6h-1.2zM245.7 134.3h2.8v1.8h-2.8zM320.3 134h2.6v1.8h-2.6zM71.5 135h1.7v2.2h-1.7zM90.4 135.5h2.8v1.7h-2.8zM124.8 135.4h1.9v2.3h-1.9zM177.1 135.2h2.3v2.1h-2.3zM206.2 135.9h2.6v1.6h-2.6zM210.7 135.8h2.9v1.9h-2.9zM217.4 135.3h1.9v1.9h-1.9zM228 135.7h1.5v1.9h-1.5zM243.8 135.5h1.6v1.6h-1.6zM278.2 135.7h1.7v2.1h-1.7zM290 135.1h2.7v1.5h-2.7zM48.7 137.1h1.7v1.4h-1.7zM60.6 137h1.9v2.2h-1.9zM131.6 137h1.5v1.3h-1.5zM162.5 136.9h2.2v2.1h-2.2zM164.7 137.3h2.3v1.4h-2.3zM172.3 136.9h1.5v1.7h-1.5zM280.2 136.8h2.8v2.1h-2.8zM0.7 138h1.4v2h-1.4zM48.5 138.6h1.4v1.4h-1.4zM88.5 138.7h2.9v2.5h-2.9zM106.1 137.8h1.9v1.9h-1.9zM190.1 138.5h1.9v2.3h-1.9zM207.4 137.7h1.5v2.2h-1.5zM215.9 138.6h1.6v2.2h-1.6zM232.5 138.2h1.9v1.4h-1.9zM262.5 138.5h3.1v1.5h-3.1zM306.6 138h2.8v1.2h-2.8zM3.2 139.1h2.2v1.7h-2.2zM69.4 139.2h1.5v1.4h-1.5zM93.2 139.4h1.4v2.1h-1.4zM154.7 139.7h1.7v1.6h-1.7zM197.8 140h2.5v1.9h-2.5zM240.1 139.3h2.8v2.2h-2.8zM328.6 138.9h2.7v1.9h-2.7zM1.3 140.6h3.3v2h-3.3zM35.2 141h2.3v2h-2.3zM170 140.8h2v2.1h-2zM217 140.5h2.6v1.4h-2.6zM304.6 140.7h3v2.1h-3zM11.8 142.3h2.3v2h-2.3zM26.3 142.4h1.4v1.8h-1.4zM35.6 142.4h3.3v1.5h-3.3zM54.7 142.5h2v1.9h-2zM69.2 142.6h1.8v2h-1.8zM87.5 143h3v1.8h-3zM116.2 143h2.7v2.6h-2.7zM210.3 142.4h2.3v2.7h-2.3zM243.4 142.6h1.9v2.3h-1.9zM278.8 142h1.9v2.1h-1.9zM286.9 142.4h3.3v2.1h-3.3zM3 143.8h2v1.6h-2zM173.2 144.4h1.9v2.5h-1.9zM181.1 144.3h3.4v1.9h-3.4zM198.7 143.8h1.8v2.6h-1.8zM212.7 144.1h1.5v1.4h-1.5zM239.3 144.3h1.6v1.5h-1.6zM262.4 143.9h1.8v2.6h-1.8zM319.2 143.9h3.3v2.6h-3.3zM11.1 145.7h1.5v1.5h-1.5zM41.3 146.3h1.7v2.4h-1.7zM73.4 145.7h1.8v2.6h-1.8zM85.2 145.4h1.8v1.5h-1.8zM213.4 145.3h3v2h-3z"/>
<path fill="#e0b868" d="M3.7 121.4h1.7v1.8h-1.7zM31.7 121.9h2v1h-2zM37.7 121.5h1.3v2h-1.3zM43 122.1h1.2v1.5h-1.2zM57.1 121.4h1.7v1.9h-1.7zM112.2 121.6h1.5v1.4h-1.5zM171.3 121.5h2.2v2.1h-2.2zM197.9 121.7h1.6v1.1h-1.6zM203.1 121.6h1.4v1.7h-1.4zM211.6 122.4h2.3v1.1h-2.3zM226.5 122.5h2.4v1.3h-2.4zM291.3 121.5h1.6v1.8h-1.6zM293.2 121.6h2.3v1.9h-2.3zM322.9 122.1h1.7v1.8h-1.7zM12.9 123h2.1v2h-2.1zM58.1 123.1h2.4v1.7h-2.4zM139.9 122.9h2.4v1.3h-2.4zM153.5 122.8h1.8v1.5h-1.8zM164.2 122.9h1.3v1.7h-1.3zM175.2 123.6h1.5v1.4h-1.5zM215.3 122.8h1.4v2h-1.4zM219.1 122.7h1.5v1.1h-1.5zM226.4 122.7h1.1v1.2h-1.1zM272 123.1h1.1v1.3h-1.1zM276.5 122.9h2.4v1.4h-2.4zM313.8 123.3h1.2v1.6h-1.2zM317.8 122.6h2.1v1.4h-2.1zM322.9 123.8h2v2h-2zM325.4 122.9h1.2v1.7h-1.2zM-2.1 124.9h1.8v1.8h-1.8zM-0.3 124.6h1.9v2.1h-1.9zM34.6 123.8h1.4v1.3h-1.4zM91.7 124.2h1v1.8h-1zM96.4 124.8h2v1.6h-2zM105.1 124.9h2.2v1.4h-2.2zM140 124.8h2.5v1.5h-2.5zM170.4 124.6h2.1v1.8h-2.1zM203.3 124.3h1.4v1.9h-1.4zM220.6 124.6h1.4v1.2h-1.4zM239.7 123.8h1.7v1.6h-1.7zM250 123.8h1.3v1h-1.3zM288.2 125h1.2v1.5h-1.2zM301 123.8h2.3v2.1h-2.3zM326.1 124.6h1.6v1.3h-1.6zM20.4 125.8h2.2v1.9h-2.2zM25.5 125.1h2.5v1.1h-2.5zM49.7 125.2h2v1.5h-2zM58.3 126.1h1v1.5h-1zM79.6 125.2h1.1v2h-1.1zM107.8 125.9h1.5v1.5h-1.5zM163.2 125.8h1.2v1.3h-1.2zM182.1 126h2.1v1.5h-2.1zM184.3 125.6h2.5v2h-2.5zM220.1 126.2h1.1v1.8h-1.1zM242.2 125.2h2.3v1.7h-2.3zM256 125.1h2.5v1.8h-2.5zM260.5 125.5h2.2v1.2h-2.2zM281.6 125.6h2.5v1.8h-2.5zM325.7 125.1h2.5v2h-2.5zM-0.3 126.2h1.7v1.1h-1.7zM1.5 126.9h2.1v1.9h-2.1zM21.3 127.3h2v1.8h-2zM23.6 126.5h1.9v1.3h-1.9zM29.7 126.4h1.1v1.2h-1.1zM32.6 126.3h2.4v1.5h-2.4zM46.7 126.4h1v1.6h-1zM53 126.6h2.1v1.8h-2.1zM62.5 127h1.9v1.5h-1.9zM121.6 126.4h1.4v1.5h-1.4zM123.1 126.8h1.4v1.8h-1.4zM148.1 126.9h1.4v1h-1.4zM149.7 127.2h1.8v1.4h-1.8zM159.8 126.6h2.1v1.4h-2.1zM217.5 127.1h1.1v1.7h-1.1zM249 126.7h2.4v1.4h-2.4zM264.1 126.7h1.2v1.1h-1.2zM265.3 126.7h1.9v1.7h-1.9zM277.1 126.2h1.4v1.4h-1.4zM291.7 126.7h1.7v1.4h-1.7zM301.9 126.2h1.9v1h-1.9zM321.3 127.1h2.2v1.8h-2.2zM330 127.2h2.5v1.1h-2.5zM10.3 128.1h1.2v1.2h-1.2zM26.5 128.2h2v2h-2zM52.1 128.4h1.9v1.4h-1.9zM89.6 128.5h1.6v1.3h-1.6zM96.7 128.3h1.3v1h-1.3zM107.5 128.2h2.5v2.1h-2.5zM141.1 128.3h1.5v1h-1.5zM142.8 127.4h1.7v1.6h-1.7zM164.4 127.4h1.4v1.9h-1.4zM183.8 128.3h2.3v1.2h-2.3zM192.8 127.4h1.8v1.4h-1.8zM229.2 128.3h2v1.4h-2zM272.6 127.5h2v1h-2zM281.2 127.7h2.1v1.6h-2.1zM24.3 129.4h1.3v1.5h-1.3zM63.6 128.9h1.9v1.4h-1.9zM102.9 128.9h1.5v2h-1.5zM122.8 129.1h2.5v1.8h-2.5zM211.9 129h1.1v1.7h-1.1zM244 129.1h1.8v1.4h-1.8zM274 128.7h2.3v1h-2.3zM329 129.6h1.8v1.5h-1.8zM24.2 130.7h1.1v1.8h-1.1zM25.3 130h1.4v1.7h-1.4zM45.7 130.9h1.8v1.7h-1.8zM74.5 130.8h1.3v1.5h-1.3zM105.6 130.3h2.6v1.9h-2.6zM108.1 130.8h2.1v1.8h-2.1zM207 130h1.3v1.9h-1.3zM237.8 130.8h2.2v1.4h-2.2zM270.8 130h2.1v2h-2.1zM290.2 130.4h2.4v1.8h-2.4zM329.7 130.4h1.6v1.1h-1.6zM17.4 131.6h2v2.1h-2zM30.6 131.1h2.2v1.3h-2.2zM49.7 132h2.5v1.7h-2.5zM71.4 131.5h2.4v1.2h-2.4zM108.4 131.4h1.2v1.3h-1.2zM116.1 131.7h2.3v2h-2.3zM179.6 131.2h2.4v1.5h-2.4zM200.6 131.8h2.2v2.2h-2.2zM212.7 131.9h2.3v1.6h-2.3zM221.1 130.9h2.5v2.2h-2.5zM235 132h2.6v1.1h-2.6zM242.8 131.9h2.3v1.9h-2.3zM245.1 131.1h1.7v1.7h-1.7zM280.8 132h2v1.4h-2zM300.7 131.4h2.2v2h-2.2zM102.5 132.8h1.3v1.9h-1.3zM214.6 133.2h2.2v2h-2.2zM265.7 132.2h1.6v1.4h-1.6zM275 132.4h1.2v1.2h-1.2zM298.9 133h2.2v1.2h-2.2zM34.1 133.6h1.9v1.8h-1.9zM64.1 134.1h2.7v1.2h-2.7zM69 133.8h1.2v1.5h-1.2zM84 133.6h1.7v2h-1.7zM86 134.1h1.9v1.3h-1.9zM154.7 134.5h2.8v1.7h-2.8zM178.5 134h2.6v2.1h-2.6zM186.5 134h2.2v1.8h-2.2zM204 133.5h2.1v1.3h-2.1zM222.1 134.2h2.6v2.1h-2.6zM261.5 133.6h2.7v1.3h-2.7zM287.2 134.2h2.2v1.9h-2.2zM309.1 133.9h2.5v1.8h-2.5zM17.6 135.1h2.7v2.3h-2.7zM21.8 135.9h2.5v2h-2.5zM30.5 135.7h1.6v1.2h-1.6zM56.3 135h1.6v1.2h-1.6zM57.9 134.9h2.8v1.2h-2.8zM65.3 135h2.7v1.9h-2.7zM148.4 135.5h2.8v2.3h-2.8zM159.5 135.2h2.4v2.3h-2.4zM204.6 134.9h1.4v1.2h-1.4zM274.7 134.8h1.2v1.3h-1.2zM282 135.5h2.6v1.7h-2.6zM299.3 135.4h1.3v1.3h-1.3zM309.1 135.2h2.6v1.3h-2.6zM-1.5 136.5h2v2h-2zM4.5 136.2h2.7v1.6h-2.7zM80.4 136.5h2.6v1.5h-2.6zM141.7 136.3h2v1.2h-2zM158.6 136.1h1.5v2.1h-1.5zM177.9 136.3h3v1.3h-3zM233.9 136.2h2.3v1.7h-2.3zM250.1 136.6h2.5v1.5h-2.5zM260 137h2.9v1.6h-2.9zM265.5 136.2h1.7v1.8h-1.7zM267.5 136.3h1.4v2.1h-1.4zM277.3 137.2h2.3v2h-2.3zM295.2 137.1h2.7v1.3h-2.7zM300.5 136.9h2.4v1.4h-2.4zM50.1 138.4h1.6v1.7h-1.6zM51.8 137.7h2.6v2h-2.6zM74.2 138.2h1.9v2h-1.9zM83.6 137.6h2.2v2.1h-2.2zM169.7 138.5h2.7v1.7h-2.7zM182.7 137.5h2.9v2.1h-2.9zM213.9 137.8h2.1v2h-2.1zM234.6 138.5h3.1v2.4h-3.1zM17.8 139.9h1.4v1.5h-1.4zM40.3 139.5h3.1v1.8h-3.1zM138 139.5h2.6v1.5h-2.6zM168.9 139.7h2.1v2.3h-2.1zM209.3 139.2h1.5v1.7h-1.5zM236.5 139.4h3v2.1h-3zM287.8 139.7h3.2v1.9h-3.2zM291.4 139.5h2.1v1.6h-2.1zM5.3 141h1.8v2.4h-1.8zM55.5 141.6h1.6v2.2h-1.6zM95.5 141.4h3.2v1.9h-3.2zM115.8 141h2.2v1.4h-2.2zM135.2 141.4h2.3v2.6h-2.3zM208.8 140.7h2.1v2.1h-2.1zM251.5 141h1.6v1.8h-1.6zM6.4 142.1h2.6v2.5h-2.6zM9.6 143.1h1.7v1.8h-1.7zM94.8 143.1h2v2.1h-2zM100.7 142.3h1.7v1.5h-1.7zM234.8 142h3v1.5h-3zM22.9 143.5h2.9v2.4h-2.9zM118.2 144h2.5v1.9h-2.5zM184.5 144h1.8v2.8h-1.8zM243.1 143.8h2.3v2.8h-2.3zM33.5 146.1h1.8v2h-1.8zM45.9 145.8h2.5v1.4h-2.5zM75.4 145.1h2.5v1.9h-2.5zM97.2 146.1h2.3v1.6h-2.3zM277.4 145.4h2.5v1.9h-2.5zM314.9 145.3h3.5v2.1h-3.5zM329.6 146.2h1.6v2.1h-1.6z"/>
<path fill="#786850" d="M6.7 122h1.9v1.2h-1.9zM44.3 121.9h2.4v1.2h-2.4zM50.6 121.8h1.9v1.1h-1.9zM99.4 122h1.4v1.4h-1.4zM159.1 121.7h1.3v1.6h-1.3zM167.8 121.8h1.1v1.3h-1.1zM184.5 122h1.8v1.6h-1.8zM220.8 122.4h1.9v1.5h-1.9zM229.5 121.9h2.4v1.5h-2.4zM257.2 122.3h1.5v2.1h-1.5zM275 122.5h1.3v1.2h-1.3zM298.3 122.5h1.3v1.4h-1.3zM27.9 122.6h2.5v1h-2.5zM32.3 123h1.1v1h-1.1zM45 122.7h1.7v1.1h-1.7zM47 123.5h1.4v1.8h-1.4zM106 123h1.8v1.4h-1.8zM113.1 123.5h1.7v1.9h-1.7zM149.6 122.7h2v1.4h-2zM176.9 123.6h1.7v1.8h-1.7zM180.3 123.4h2.1v1.9h-2.1zM198 123.4h1.4v1h-1.4zM211.1 123.6h1.4v2h-1.4zM251.4 123.7h1.8v1.9h-1.8zM268.1 122.8h1.4v1.4h-1.4zM269.9 123.5h2.1v1.8h-2.1zM3.5 124.5h2.2v1h-2.2zM53.4 124.7h1.2v1.5h-1.2zM117.3 124.2h1.3v1.4h-1.3zM143 124.7h1.3v1.5h-1.3zM181.9 124.9h1.1v1.6h-1.1zM226 125h1.2v1.4h-1.2zM246 124.5h1.8v1.4h-1.8zM280.3 124.3h1.4v1.9h-1.4zM303.3 124.2h2v1.2h-2zM305.8 124h1.9v1.1h-1.9zM5.3 125.2h2.4v1h-2.4zM13 126.1h2.2v1.9h-2.2zM18.8 125.1h1.3v1.4h-1.3zM56.1 125.7h2.1v2.1h-2.1zM106 126.1h1.6v1.5h-1.6zM116.2 126h2v1.3h-2zM278 126h1.9v1.4h-1.9zM288.4 126h1.7v1.6h-1.7zM294.8 125.8h1.6v2h-1.6zM312.7 125.7h1v1.3h-1zM323 125.3h2.3v2.1h-2.3zM12.3 127h2v2h-2zM30.8 126.2h1.7v2h-1.7zM38.6 127h1.8v1.6h-1.8zM131.5 127.2h1.9v1.5h-1.9zM143.4 126.6h1v2h-1zM202.3 126.8h2.1v1.4h-2.1zM229.9 126.4h2.1v1h-2.1zM294.8 126.6h1.8v1.2h-1.8zM317 127h2.3v1.9h-2.3zM-2.5 128.3h1.4v1.8h-1.4zM41.9 128.3h2v1.2h-2zM70 128.4h2.2v1.1h-2.2zM99.6 128h1.5v1.4h-1.5zM105.3 128.3h2v1.4h-2zM126.4 128.4h1.8v1.7h-1.8zM187.8 127.5h2.4v1.2h-2.4zM236 128h2.1v1.2h-2.1zM240.3 128h1.7v1.9h-1.7zM257.4 127.8h2.3v2h-2.3zM265.1 128.5h2.2v1h-2.2zM288.3 128h1.4v1.3h-1.4zM300.5 127.8h2.4v2h-2.4zM307.2 128.3h1.1v2h-1.1zM1 129.7h1.2v1.6h-1.2zM19.3 129.6h2.1v1.9h-2.1zM52.6 129.7h1.1v1.3h-1.1zM56.6 129h2.5v1.8h-2.5zM125.8 129.1h1.3v1.4h-1.3zM130.2 129.5h2.3v1h-2.3zM216.1 129.2h1.4v1.1h-1.4zM220.5 129.5h2.4v2h-2.4zM236.2 129.7h1.5v1.3h-1.5zM261.7 129h1.5v1.6h-1.5zM276.7 128.8h2.5v1.9h-2.5zM296 128.8h2.5v1.1h-2.5zM309.5 129.3h1.8v1.9h-1.8zM316.2 128.8h1.1v1.7h-1.1zM317.5 129.2h1v1.6h-1zM318.6 128.6h2.4v1.2h-2.4zM70.8 130.8h1.3v1.1h-1.3zM79.9 130.8h2v1.3h-2zM94.2 130.5h2v2.1h-2zM101.1 129.9h1.5v1.7h-1.5zM135.4 130h2.4v2.1h-2.4zM146.6 130.5h1.9v1.5h-1.9zM154.5 129.9h2.2v1.9h-2.2zM164.9 130.7h1.7v1.8h-1.7zM245.4 130.5h1.3v2h-1.3zM314.1 130.6h2v2h-2zM1.9 131.6h1.4v1.4h-1.4zM44.1 131.6h2.1v1.8h-2.1zM127.1 131.1h1.5v1.7h-1.5zM168.6 131.5h2v1.1h-2zM182.2 132.1h2.5v1.3h-2.5zM246.9 131.3h2.1v1.2h-2.1zM265 131.2h2.4v1.2h-2.4zM325 131h2.5v1.4h-2.5zM7.7 132.8h1.9v2.2h-1.9zM42.9 133.1h1.1v1.9h-1.1zM44.2 132.4h1.8v2.2h-1.8zM90.6 132.9h1.8v1.3h-1.8zM107.6 132.8h2.7v1.3h-2.7zM116.7 132.3h1.6v2h-1.6zM161.3 133h1.5v1.3h-1.5zM175.4 132.7h1.4v1.5h-1.4zM205.7 132.7h1.6v1.3h-1.6zM222.8 132.6h1.9v1.6h-1.9zM229.3 132.7h1.8v2.2h-1.8zM255 132.7h2.6v1.9h-2.6zM270.5 132.6h1.2v1.6h-1.2zM297.8 132.9h1.2v1.1h-1.2zM306 133.1h2.5v1.8h-2.5zM316.9 133h2.2v1.2h-2.2zM319.6 133.3h1.4v1.6h-1.4zM12.6 133.7h1.6v1.5h-1.6zM14.4 134.5h2.6v2.1h-2.6zM55.5 134.6h1.9v1.7h-1.9zM59.2 134.6h1.5v1.3h-1.5zM112.9 134.3h2v1.8h-2zM173.4 134.3h1.4v2.1h-1.4zM277.7 133.9h2.7v1.2h-2.7zM289.4 134.1h1.7v1.3h-1.7zM292.6 133.7h1.3v1.6h-1.3zM318 133.9h2.1v1.1h-2.1zM323.3 133.6h1.2v2.3h-1.2zM68.7 135.3h2.4v1.3h-2.4zM151.8 135.2h1.2v1.8h-1.2zM229.6 135.7h2.1v2h-2.1zM236 134.9h1.6v2.3h-1.6zM240.1 134.8h1.4v1.3h-1.4zM245.6 135.3h1.4v1.9h-1.4zM300.6 135.9h2v2h-2zM17.5 136.3h2.5v1.4h-2.5zM69.5 136.4h1.7v1.3h-1.7zM107.8 136.5h2.8v1.8h-2.8zM148.8 136.7h2.9v1.3h-2.9zM246.3 136.5h2v2.3h-2zM315.8 136.2h2.6v2.2h-2.6zM-3.2 137.6h1.4v2.5h-1.4zM32.2 137.6h2.7v2.1h-2.7zM98.7 138.5h2.7v2.2h-2.7zM164.2 138.1h2.7v2.3h-2.7zM192.4 138.4h1.8v2.4h-1.8zM230.4 138.2h2v2h-2zM294.9 138.1h1.3v1.2h-1.3zM51.5 139.1h2.2v2.2h-2.2zM64.1 139.3h1.6v2.3h-1.6zM71 139h3.2v2.2h-3.2zM107.8 140.1h2.7v1.3h-2.7zM124.1 139.8h2.8v2.2h-2.8zM141.2 139.4h3.2v1.5h-3.2zM156.8 139.5h2.3v2h-2.3zM184.7 139.1h2.4v1.4h-2.4zM219.3 139h1.9v2.5h-1.9zM254.6 139.4h1.4v2.4h-1.4zM259.1 139.4h2.9v1.7h-2.9zM310 139.9h3.1v2.4h-3.1zM318.3 139h2.1v2.3h-2.1zM7.1 140.9h3.2v2.2h-3.2zM29.1 141.4h1.8v1.9h-1.8zM31.3 140.8h3.2v1.8h-3.2zM47.8 141.5h2v1.9h-2zM198.4 141.6h1.3v1.7h-1.3zM317.3 140.8h2.3v1.5h-2.3zM319.8 141.2h1.5v1.7h-1.5zM-3.1 143h1.5v2.7h-1.5zM74.5 142.3h1.6v2.1h-1.6zM156.7 142.2h2v2.3h-2zM217.1 142.4h2.2v2h-2.2zM268.9 142.7h2.3v2.7h-2.3zM294.8 142.5h2.1v1.8h-2.1zM306.7 142.3h3.1v1.4h-3.1zM319.1 142.3h3.2v1.5h-3.2zM324.6 142.4h2.8v1.7h-2.8zM56.4 143.7h1.7v1.9h-1.7zM73.4 144.5h2.7v2.4h-2.7zM103.7 143.9h2.8v1.3h-2.8zM210.9 144.4h1.8v1.8h-1.8zM236.2 143.6h2.6v2.1h-2.6zM274.7 143.7h2.6v2.5h-2.6zM296.9 144.5h3v1.9h-3zM2.3 145.3h2.1v2.2h-2.1zM83.2 145.4h1.9v1.7h-1.9zM116.5 145.3h3.5v2.8h-3.5zM129.3 145.9h3.1v1.8h-3.1zM136.4 146h3.1v2.4h-3.1zM305.6 146.1h2.3v2.4h-2.3z"/>
<path fill="#b89860" d="M8.9 122.2h1.7v1.3h-1.7zM10.7 121.9h1.4v1.3h-1.4zM29.5 121.5h2.2v1.3h-2.2zM59 122.2h1.6v1h-1.6zM78.5 122.4h2.3v2.1h-2.3zM84.3 121.9h2.2v1.9h-2.2zM145.7 121.6h2.4v1.5h-2.4zM231.9 121.8h2.5v1.8h-2.5zM289.4 122.2h2v1.7h-2zM299.7 121.5h2.1v1.4h-2.1zM312.8 122.1h1.3v1.4h-1.3zM318.8 121.6h1.9v1h-1.9zM8.2 123.3h2.4v1.8h-2.4zM80.1 123.4h1.8v1.3h-1.8zM90.7 123.3h2.5v1.7h-2.5zM157.3 123.3h1.9v1.9h-1.9zM167.2 123.8h1.3v1.6h-1.3zM196.5 123.2h1.4v1.4h-1.4zM254.5 123.5h1.1v2h-1.1zM275.2 123.4h1.2v1.1h-1.2zM283.3 123.6h2.3v1.4h-2.3zM290.1 123h2.4v1.7h-2.4zM298.9 123.5h1.8v1.9h-1.8zM307 123h1.9v2.1h-1.9zM309.1 123.2h1.2v1.6h-1.2zM312 123.6h1.7v1.6h-1.7zM6 124.1h2.5v1.7h-2.5zM15.2 124.3h2.5v2h-2.5zM18.1 124.3h1.6v1.5h-1.6zM23.9 124h1.3v1.4h-1.3zM46.8 124h1.3v1.6h-1.3zM64.9 124.9h2v1.1h-2zM83.3 124.1h1.8v2.1h-1.8zM120.3 124.9h2.5v1.1h-2.5zM149.8 124.2h1.9v1.7h-1.9zM155.8 124.4h1.8v1.5h-1.8zM186.8 124.2h1.9v1.3h-1.9zM190.7 124.3h1.4v1.5h-1.4zM208.3 124.2h1.9v1.3h-1.9zM222.2 124.4h1.7v1.7h-1.7zM248.2 124.5h2v1.2h-2zM268 124.3h1.8v1.6h-1.8zM292.2 124.4h1.5v1.9h-1.5zM293.7 124.3h2.3v1.9h-2.3zM318 124.1h1.4v2h-1.4zM319.7 125h1.6v2h-1.6zM323.7 123.8h1.9v1.1h-1.9zM8 125.2h1.7v1.1h-1.7zM17 125.8h1.4v1.3h-1.4zM66.1 126.1h2.5v1h-2.5zM72.5 126h1.3v1.1h-1.3zM90.8 125.8h1.4v1.7h-1.4zM98.3 126.1h2v1.3h-2zM113.9 125.6h2.3v1.1h-2.3zM129.7 125.4h1.9v1.1h-1.9zM133.9 125.6h1.7v1.3h-1.7zM155 125.2h1.4v1.8h-1.4zM158.3 126.1h1.7v1.9h-1.7zM169.7 125.9h2.1v1.4h-2.1zM209.2 126h2v1.1h-2zM226 125.2h1.7v1.7h-1.7zM232.3 125.4h2v1.4h-2zM253.7 125.5h1.8v1.3h-1.8zM258.5 126h1.6v1.4h-1.6zM267.9 125.7h2.4v1.3h-2.4zM300.8 125.3h1.2v1.8h-1.2zM304.5 125.5h1.2v1.5h-1.2zM17.6 126.3h2.2v1.6h-2.2zM35.1 126.4h1.4v1.2h-1.4zM76.5 126.2h1.3v1.2h-1.3zM90.4 127.1h1.7v1.6h-1.7zM102.9 126.6h2.2v1.5h-2.2zM111.5 126.8h1.7v1.9h-1.7zM113.4 127h2.2v1.5h-2.2zM133.4 126.7h1.2v1.5h-1.2zM141.5 127.1h1.8v1.9h-1.8zM215.9 126.8h1.4v1.6h-1.4zM225.5 126.9h2v2h-2zM227.8 126.5h2.2v1.8h-2.2zM262 126.7h1.9v1.7h-1.9zM278.8 126.5h1.6v1.8h-1.6zM280.4 127h1.5v2h-1.5zM285.8 126.3h2v1.4h-2zM319.3 127h1.8v1.9h-1.8zM12.8 127.4h2.5v1.4h-2.5zM21.6 127.4h1.9v1.8h-1.9zM32.7 127.7h2v1.4h-2zM34.9 128.5h1.1v1.8h-1.1zM44 127.7h1.4v1.8h-1.4zM49.2 127.4h1.5v1.5h-1.5zM86.5 127.5h1.4v1.8h-1.4zM88 128.4h1.6v1.8h-1.6zM95.5 128.1h1.1v1.6h-1.1zM151.5 128.4h1.6v1.9h-1.6zM163.1 127.9h1.2v1.8h-1.2zM196.9 128.1h2.2v1.7h-2.2zM225.3 127.6h1.3v1.4h-1.3zM242.1 127.4h2.5v1.1h-2.5zM249.6 127.9h1.2v2h-1.2zM293.5 128.4h2.5v1h-2.5zM310.6 127.9h1.4v1.6h-1.4zM319.7 127.8h2.1v1.8h-2.1zM96.7 129h2.1v1.5h-2.1zM115.8 128.6h1.4v2h-1.4zM135.6 129.5h1v1.8h-1zM146.1 129.1h1.7v1.2h-1.7zM151.2 129.3h2.3v2.1h-2.3zM174.5 129.6h2.2v1.8h-2.2zM207.7 129.7h2.1v1.6h-2.1zM224.3 129.1h1.6v1.2h-1.6zM228.2 129h1.3v1.8h-1.3zM240.8 129.4h1.8v1.7h-1.8zM267.4 129.3h1.2v1.4h-1.2zM270.5 129.7h1.5v2.1h-1.5zM294.5 129.7h1.4v1.1h-1.4zM311.7 128.7h1.8v1.5h-1.8zM5.9 129.9h2.5v2.1h-2.5zM9 130.8h2.3v1.2h-2.3zM35.2 130.5h2.4v1.9h-2.4zM47.7 130.2h2.4v2.1h-2.4zM66.5 130.9h1.5v1.3h-1.5zM72.2 130h1.9v1.1h-1.9zM75.8 130.7h2v1.5h-2zM112.9 130.4h1.3v2h-1.3zM130.3 130.5h2.2v1.9h-2.2zM157.2 129.8h1.8v1.5h-1.8zM173.9 129.7h2.3v1.9h-2.3zM236.1 130.8h1.6v1.4h-1.6zM246.7 129.7h1.1v1.1h-1.1zM250 129.9h2.2v1.5h-2.2zM286.3 129.8h1.6v1.5h-1.6zM-0.2 131.6h1.9v1.8h-1.9zM11.8 131.3h1.3v1h-1.3zM13.2 131.4h1.6v1.5h-1.6zM38.3 131.2h1.4v1.1h-1.4zM58.3 131.5h1.6v1.3h-1.6zM100.3 131.4h2.1v1.7h-2.1zM109.6 131.3h2.3v1.3h-2.3zM197.8 131h2.3v1.4h-2.3zM252.5 131.7h2.1v1.1h-2.1zM289 131.9h1.1v1.8h-1.1zM290.4 131.9h1.4v2h-1.4zM293.3 131.6h1.8v1.4h-1.8zM321 131.2h1.2v1.9h-1.2zM17.4 133.2h1.3v2.1h-1.3zM54.1 132.3h1.7v1.3h-1.7zM89.1 132.9h1.4v1.4h-1.4zM111.9 133.2h1.3v1.9h-1.3zM129.7 133.3h2v1.2h-2zM133.2 132.4h1.9v1.3h-1.9zM152.2 132.3h2.3v1.6h-2.3zM162.8 132.7h2.6v1.3h-2.6zM186.4 132.5h1.2v1.6h-1.2zM267.4 133.1h2.6v1.7h-2.6zM-3.7 133.6h2.7v1.3h-2.7zM29 134.6h1.5v1.2h-1.5zM52.7 133.8h2.5v2.1h-2.5zM60.6 134.3h1.2v1.5h-1.2zM74.2 134.3h1.2v1.8h-1.2zM80.8 134h2.8v2h-2.8zM110 133.5h2.5v1.1h-2.5zM124.8 134.4h2v2h-2zM136.2 133.9h1.5v1.5h-1.5zM183.8 133.6h2.5v1.9h-2.5zM191.5 134h2.6v1.1h-2.6zM235 134h2.4v2h-2.4zM280.8 133.5h1.5v1.7h-1.5zM116.5 135.6h1.9v1.3h-1.9zM256.8 134.9h2.3v1.2h-2.3zM259 135.3h2.1v2h-2.1zM265.6 135.9h2.1v2.1h-2.1zM271.9 135.8h2.4v1.8h-2.4zM306.3 135.6h2.9v1.2h-2.9zM318.1 135.3h2.6v1.4h-2.6zM32.5 136.9h2.1v2.3h-2.1zM73.4 136.3h2.3v1.2h-2.3zM110.5 137h2.8v2.4h-2.8zM176.5 136.9h1.3v1.5h-1.3zM191 136.8h1.7v1.6h-1.7zM201.5 136.5h2.4v1.9h-2.4zM240.3 136.9h2v1.5h-2zM287.7 136.6h2.9v1.6h-2.9zM318.8 137h2.4v1.2h-2.4zM329.1 136.7h1.7v1.3h-1.7zM26.7 137.6h1.8v1.6h-1.8zM187.6 137.9h2.1v1.5h-2.1zM289.6 137.6h2.2v1.4h-2.2zM23.8 139.9h1.9v2.6h-1.9zM82.4 139h3.1v1.4h-3.1zM87 139.4h1.7v2.1h-1.7zM112.7 140.1h1.7v1.9h-1.7zM148.8 139.5h2.1v1.3h-2.1zM228.9 139.3h2.6v1.2h-2.6zM251.7 139h2.6v2.4h-2.6zM264.9 139.3h3.2v1.5h-3.2zM273.7 139.4h2.8v1.4h-2.8zM316.4 139.1h1.6v1.5h-1.6zM22.9 141.5h2.8v1.3h-2.8zM75.2 140.9h2.3v2h-2.3zM93.1 140.8h2.1v2.4h-2.1zM227.9 140.6h3v1.8h-3zM280.2 140.5h2.3v2.2h-2.3zM85.9 142.3h1.6v1.7h-1.6zM254.4 142.3h3.4v2.5h-3.4zM314.6 142.6h2.1v2.2h-2.1zM322.8 142h1.4v2.2h-1.4zM34.4 144h2.8v2.6h-2.8zM60.7 143.7h1.9v2.5h-1.9zM99.5 143.8h1.6v2h-1.6zM101 144.4h2.8v2.3h-2.8zM124.5 144.1h3.4v1.4h-3.4zM245.7 144.3h3.2v2.6h-3.2zM311.6 144.6h2.3v2.4h-2.3zM43 145.7h2.5v2.4h-2.5zM120.3 145.2h2.1v2.2h-2.1zM205.7 145.2h1.6v1.9h-1.6zM268.4 145.8h1.8v2.6h-1.8zM300.8 145.5h2.9v2.2h-2.9zM321.3 145.6h2.7v1.7h-2.7z"/>
<path fill="#d8c090" d="M14.4 121.5h1.1v1.4h-1.1zM120.3 121.7h1.7v2h-1.7zM151.5 122h1.1v1.1h-1.1zM163 121.6h2.1v1.8h-2.1zM182 122.5h2.3v1.6h-2.3zM188.9 121.5h1.1v1.2h-1.1zM206.2 121.4h1.1v1h-1.1zM240.5 121.5h1.5v1h-1.5zM253.7 122.5h2.1v1.9h-2.1zM295.9 122.1h2.5v1.8h-2.5zM307.9 122.1h1.2v1.8h-1.2zM101.9 122.8h2.2v1.9h-2.2zM107.9 123.3h1v1.2h-1zM129.8 122.7h1.6v1.9h-1.6zM137.6 122.7h1.9v1.8h-1.9zM199.3 123.2h1.5v1.1h-1.5zM227.8 123.5h1.7v2.1h-1.7zM238.1 123.3h1.7v1.9h-1.7zM243.1 122.7h1.5v1.8h-1.5zM261.4 123h2.5v2.1h-2.5zM280.9 123h2.1v1.7h-2.1zM302.1 123.2h2.5v1.5h-2.5zM321.4 123h1.3v1.6h-1.3zM326.6 123h1.7v1.5h-1.7zM328.3 123.2h1.5v1.6h-1.5zM32.8 124.2h1.6v1.6h-1.6zM92.9 124h1.8v1.4h-1.8zM169.1 124.2h1.3v1.3h-1.3zM172.8 124.7h2v1.5h-2zM201.3 124.4h1.7v1.7h-1.7zM204.7 123.8h1.9v1.3h-1.9zM218.3 124.8h2.4v2.1h-2.4zM224.3 124.2h1.5v1.8h-1.5zM313.6 124.8h2.5v1h-2.5zM75.4 125.9h1.5v1h-1.5zM78.1 125.2h1.3v1.5h-1.3zM92.3 125.5h2v1.8h-2zM167.4 125.1h2.3v1.4h-2.3zM173.3 125.1h2.1v1.4h-2.1zM216.8 126h1.2v1h-1.2zM223.8 125.5h2.2v1.4h-2.2zM228.2 126h2.4v1.9h-2.4zM246.3 125.3h1.5v1.4h-1.5zM275 125.4h2.5v1.3h-2.5zM284.4 126.1h2.4v1.8h-2.4zM305.8 126h1.9v1.1h-1.9zM328.5 125.5h1.1v1.5h-1.1zM3.9 126.3h2v1h-2zM66.4 126.6h1.3v1.2h-1.3zM72.1 127.2h2.5v1.7h-2.5zM97.4 127.1h1.4v1.8h-1.4zM157.9 126.2h1.7v1.8h-1.7zM168.1 127.3h2.2v1.4h-2.2zM170.4 127.3h1.2v1.5h-1.2zM194.3 126.8h1.1v2h-1.1zM198.1 126.7h1.8v1h-1.8zM200 126.7h2.2v1.6h-2.2zM204.9 127.1h1.8v1.7h-1.8zM259.8 126.2h2.3v1.7h-2.3zM267.4 127.1h2.5v2h-2.5zM284.3 126.6h1.3v1.1h-1.3zM288.2 126.3h1.4v1.6h-1.4zM297.1 126.5h1.8v1.6h-1.8zM299.1 127.3h1.2v2h-1.2zM40.1 127.9h1.6v1.2h-1.6zM208.9 128.1h2.1v1h-2.1zM213 127.8h2.2v1.6h-2.2zM250.8 128.4h2.5v1.1h-2.5zM260.2 128.4h1.8v2h-1.8zM269.5 127.7h1.3v1.2h-1.3zM270.8 128h1.8v1.8h-1.8zM329.7 128.4h1.4v1.8h-1.4zM4.8 129.4h1.3v1.1h-1.3zM41.9 128.8h1.1v1.5h-1.1zM77.9 129.2h1.3v1.1h-1.3zM113.8 129.5h1.7v1.9h-1.7zM132.6 129.4h1.6v2.1h-1.6zM140.8 129.1h1.4v1h-1.4zM205.9 129.1h1.6v1.3h-1.6zM213.2 128.9h1.8v1.3h-1.8zM239.1 128.6h1.7v1.6h-1.7zM259.4 129.7h2.3v1.3h-2.3zM272.2 129.1h1.5v1.6h-1.5zM279.6 129.2h1.7v1.4h-1.7zM292.7 129h1.7v1.2h-1.7zM17.3 129.7h2.6v2.1h-2.6zM59.6 130.9h1.8v1.6h-1.8zM99.5 130.3h1.4v2h-1.4zM122.6 130.8h1.6v1.3h-1.6zM152.2 130.5h2.1v1.1h-2.1zM168 130.4h1.8v1.4h-1.8zM278.7 130.8h2.2v1.9h-2.2zM300.8 130.3h1.7v1.1h-1.7zM316.1 130.6h1.8v1.9h-1.8zM82.1 132.1h2.4v1.6h-2.4zM93.5 132h2.6v1.5h-2.6zM129.9 131.9h2.3v1.7h-2.3zM132.7 131.9h2.6v1.2h-2.6zM148.2 131.6h1.6v1.7h-1.6zM151.9 131.6h2.4v1.1h-2.4zM175.1 131.6h1.5v2.1h-1.5zM192.9 131.3h2.2v1.5h-2.2zM226.3 131.4h1.4v2.1h-1.4zM249.3 131.5h1.5v2.1h-1.5zM250.9 132h1.4v2.1h-1.4zM272.5 131.1h1.4v2h-1.4zM273.9 131.4h2.3v1.5h-2.3zM284.2 132.1h2.4v1.7h-2.4zM291.8 131.2h1.4v1.7h-1.4zM9.8 133.1h2.5v1.9h-2.5zM52.3 132.8h1.7v1.6h-1.7zM83.1 132.5h1.2v1.3h-1.2zM95 132.8h2.7v1.9h-2.7zM146 132.3h2v1.1h-2zM149.9 132.4h1.9v1.7h-1.9zM166 132.8h2.3v2.1h-2.3zM208.7 132.2h1.4v1.4h-1.4zM248 132.4h1.9v1.8h-1.9zM257.9 132.4h1.5v1.8h-1.5zM259.5 132.7h1.7v1.4h-1.7zM8.4 133.6h1.3v2h-1.3zM50.2 134.4h2.6v2.3h-2.6zM67.2 134.1h1.4v2.3h-1.4zM77.8 133.7h2.6v2.2h-2.6zM92.4 134.2h1.7v2.2h-1.7zM94.2 134.3h1.5v1.3h-1.5zM106.4 133.9h2v1.4h-2zM134.4 133.7h1.6v1.2h-1.6zM137.7 133.5h2.4v1.9h-2.4zM207.5 134h2.2v1.2h-2.2zM215.2 133.5h1.5v1.2h-1.5zM238.8 133.7h2v1.8h-2zM252.7 134.2h2.2v1.6h-2.2zM270.3 133.8h2.8v1.8h-2.8zM273.3 133.9h2.5v1.5h-2.5zM294.1 133.9h2.3v1.1h-2.3zM299.5 134.1h1.2v1.8h-1.2zM-1.5 135.8h2.7v1.7h-2.7zM2.9 135.2h1.7v2.1h-1.7zM20.2 135.5h1.3v1.1h-1.3zM43.2 135.9h1.6v1.6h-1.6zM75.5 135.6h2.1v1.3h-2.1zM108.4 135.7h2v1.8h-2zM130.5 135.9h1.8v1.5h-1.8zM132.4 134.8h2.4v2.2h-2.4zM139.7 135.1h1.8v2h-1.8zM157.8 135.1h1.4v1.9h-1.4zM179.5 135.3h2.5v2.3h-2.5zM185.6 135.1h2.7v1.9h-2.7zM191.8 134.9h2.9v1.8h-2.9zM249.7 135h2.2v2h-2.2zM285.2 135.4h1.7v2.3h-1.7zM50.7 136.8h2.3v2h-2.3zM57.4 136.3h2.7v1.4h-2.7zM86.9 136.1h1.9v1.9h-1.9zM90.7 136.7h2.5v2.1h-2.5zM93.4 136.6h2.6v2.2h-2.6zM127.5 136.3h1.9v2.2h-1.9zM169.1 136.4h1.3v1.2h-1.3zM219.1 137h1.6v2.2h-1.6zM226 136.5h2.2v2.1h-2.2zM230.1 136.3h1.7v1.8h-1.7zM274.6 136.5h2.9v2.1h-2.9zM307 136.4h1.9v1.8h-1.9zM313.8 136.8h1.6v2.1h-1.6zM7.9 138.2h1.7v1.3h-1.7zM42.6 138.4h3v2.4h-3zM57.1 137.8h3.1v2h-3.1zM81.3 138.5h1.9v1.6h-1.9zM209.1 137.7h1.3v1.7h-1.3zM251.4 137.6h2.3v2.5h-2.3zM273.3 138.3h1.9v1.4h-1.9zM292.1 138.1h2.8v2.4h-2.8zM296.4 138.7h1.8v1.4h-1.8zM299.8 137.8h1.4v1.5h-1.4zM14.9 139.1h3v2.5h-3zM61.6 139.5h2.6v1.5h-2.6zM163.9 140.1h1.8v2.6h-1.8zM181.8 139.7h2.4v2.3h-2.4zM203.4 139.1h2.5v1.7h-2.5zM69.7 140.7h2.3v2h-2.3zM87.6 140.9h1.5v2.3h-1.5zM123.1 140.5h2.4v1.9h-2.4zM230.8 141.1h2.4v1.9h-2.4zM311.1 141.1h3.1v2.2h-3.1zM14.1 142.3h2.4v1.6h-2.4zM29.3 142.1h2.5v2.3h-2.5zM82 142.7h3.4v2.1h-3.4zM104.7 143.1h1.4v2h-1.4zM123.3 142.4h1.6v2.3h-1.6zM149 142.5h3.2v1.6h-3.2zM185.2 143h2.8v1.6h-2.8zM303.2 142.8h3.3v2.4h-3.3zM47.4 144h2.9v1.8h-2.9zM156 143.7h3.4v2.8h-3.4zM204.7 144.1h3v1.4h-3zM228.6 144.3h3.1v2.8h-3.1zM326.9 144.6h2.7v2.2h-2.7zM8.7 146.2h2v1.5h-2zM93.5 146.1h3.3v1.5h-3.3zM161.1 145.8h3.4v2.6h-3.4zM193.9 145.4h1.8v1.8h-1.8zM207.7 146.2h1.7v2.2h-1.7zM275.5 145.5h2v2.1h-2z"/>
<path fill="#5c5040" d="M15.6 121.4h2.2v1.3h-2.2zM80.9 121.8h1.9v1.7h-1.9zM96 122h1.9v1.7h-1.9zM101.1 122h1.5v2h-1.5zM124.9 122.3h1.3v1.2h-1.3zM142.4 122h1.6v1.8h-1.6zM165.1 122.6h2.2v1.3h-2.2zM190.1 121.5h1.6v1.6h-1.6zM208.7 121.8h2.5v1.5h-2.5zM218.8 121.5h2v1.6h-2zM224.3 122.2h2.1v1.3h-2.1zM255.8 121.6h1.3v1.7h-1.3zM260.1 121.7h2.2v1.3h-2.2zM286.2 121.8h1.8v2h-1.8zM287.9 121.5h1.5v1.5h-1.5zM314.1 122.1h2.2v2h-2.2zM320.9 121.7h1.7v1.4h-1.7zM324.8 122.1h1.9v1.3h-1.9zM4.1 123.1h1.6v1.5h-1.6zM36 123.7h2.4v1.2h-2.4zM43.3 123.4h1.4v1.5h-1.4zM93.3 123.7h1.7v2h-1.7zM142.7 123.7h2.4v1.1h-2.4zM159.3 122.7h2.3v2.1h-2.3zM216.8 123.3h2.1v1.5h-2.1zM229.8 123.6h2.3v1.1h-2.3zM241.8 123.8h1.1v1.3h-1.1zM255.6 123.7h1.6v1.1h-1.6zM288.2 123.8h1.6v1.8h-1.6zM329.9 123h1.4v1.1h-1.4zM8.9 123.8h1.2v2.1h-1.2zM20.1 124.6h2.1v1.9h-2.1zM29.4 124.8h1.3v1.6h-1.3zM42 124.4h2.1v1.6h-2.1zM48.1 124.2h1.3v2.1h-1.3zM58.4 124.6h2v1.3h-2zM80.8 124.9h2.5v1.6h-2.5zM90.3 124.2h1.4v1.4h-1.4zM94.7 124h1.4v1.5h-1.4zM101.1 123.9h1.7v2.1h-1.7zM123.4 124.5h2.4v1.7h-2.4zM125.8 124.5h1.8v2h-1.8zM157.8 124.9h1.5v1.9h-1.5zM179.9 124.2h2v1.7h-2zM243.4 124.5h2.3v1.4h-2.3zM272.3 124.1h1.7v1.3h-1.7zM273.9 124.2h2.4v1.3h-2.4zM289.7 124.4h2.3v1.1h-2.3zM311 124.5h2.3v2h-2.3zM-0.9 125.8h1.7v1.4h-1.7zM11.4 126.1h1.5v2.1h-1.5zM48.4 126.1h1.4v1.3h-1.4zM51.7 126.1h1.8v1.1h-1.8zM59.4 125.8h1.4v1.6h-1.4zM84.6 125.8h1.3v1.8h-1.3zM88.6 125.2h2.3v1.5h-2.3zM118.6 125.8h2.2v1.7h-2.2zM128.4 125.9h1.4v1.9h-1.4zM131.9 125.6h2v1.8h-2zM139.4 125.2h1.8v1.6h-1.8zM143.6 125.5h1.5v1.9h-1.5zM152.7 125h2v1.4h-2zM160.3 125.2h2.5v2h-2.5zM205 125.8h1.7v1.7h-1.7zM221.3 125h2.1v1.7h-2.1zM240.4 125.4h1.9v1.2h-1.9zM9.9 126.9h2.3v1.4h-2.3zM20.2 127.2h1.2v1.8h-1.2zM105.5 127.2h1.5v1.4h-1.5zM151.5 127h1.5v1.6h-1.5zM171.6 126.6h1.9v1.1h-1.9zM210.2 127h2.5v2.1h-2.5zM232.3 127h2v1.7h-2zM254.2 127.3h1.7v1.2h-1.7zM270.2 126.2h2.4v2.1h-2.4zM274 126.6h2.4v1.9h-2.4zM293.4 126.3h1.2v1.8h-1.2zM315.4 126.3h1.6v1.8h-1.6zM327.4 126.3h2.2v1.5h-2.2zM50.6 128.1h1.5v1.5h-1.5zM120 127.5h1.7v1.9h-1.7zM139.3 127.4h1.6v1.9h-1.6zM166 127.8h1v1.8h-1zM167.2 127.4h2.4v1.6h-2.4zM178.7 127.5h2.4v2.1h-2.4zM201.5 128h2.5v1h-2.5zM211.2 128h1.5v1.2h-1.5zM289.9 128.3h1.9v1.8h-1.9zM298.7 127.9h1.9v1h-1.9zM302.7 128.4h2v1.1h-2zM308.5 128.1h1.8v1.1h-1.8zM31.1 129.2h2.1v1.3h-2.1zM42.9 129.6h2.5v2h-2.5zM47.5 129.3h2.5v1.2h-2.5zM82.1 128.8h1.5v1.1h-1.5zM93.2 129h1.3v1.9h-1.3zM106.4 128.6h1.4v2h-1.4zM147.8 129.1h1.5v1.3h-1.5zM153.8 129.1h1v1.2h-1zM165.7 129.4h2.5v1.9h-2.5zM168.4 129.7h1.2v1.8h-1.2zM169.7 128.8h1.3v1h-1.3zM194.5 129h1.1v1.8h-1.1zM217.8 129.2h2.2v1.1h-2.2zM226.1 128.7h1.7v2h-1.7zM232 129.5h1.6v1.8h-1.6zM285.5 129.1h2.1v1.5h-2.1zM302.5 128.6h1.6v1.7h-1.6zM3.9 129.9h1.9v1.3h-1.9zM11.2 130.3h1.3v1.9h-1.3zM50.7 129.9h1.4v1.4h-1.4zM56.4 130.5h1.1v2h-1.1zM83.4 130.6h2.2v1.3h-2.2zM126.4 130.8h1.1v1.4h-1.1zM127.7 129.8h2.2v1.1h-2.2zM141.8 130.1h1.9v2.1h-1.9zM185.3 130.2h1.2v1.6h-1.2zM215.3 130.3h1.2v1.4h-1.2zM233.1 130.3h1.3v1.3h-1.3zM261.6 130.4h1.6v1.3h-1.6zM268.5 130.7h2.1v1.8h-2.1zM272.9 130.1h1.4v1.1h-1.4zM297.8 130.1h2.5v1.6h-2.5zM21.9 131.6h2.5v1.1h-2.5zM84.6 131.9h1.7v2h-1.7zM86.2 131.5h1.9v1.8h-1.9zM91.1 131.4h2.6v1.1h-2.6zM106.6 132h1.8v1.9h-1.8zM112.3 131.7h2v1h-2zM122.4 131.1h1.8v1.4h-1.8zM143.7 131.9h1.7v2.2h-1.7zM154.3 131.6h1.3v1.2h-1.3zM237.7 132.1h1.5v1.3h-1.5zM262.2 131.5h2.2v1.4h-2.2zM312.4 131.9h1.6v2h-1.6zM12.5 132.9h2.4v2.2h-2.4zM18.8 132.3h1.5v1.7h-1.5zM34.1 132.4h2.7v2.2h-2.7zM46.3 132.7h1.2v1.8h-1.2zM62.5 132.7h1.6v2.2h-1.6zM79.6 132.3h1.2v2h-1.2zM125.4 133h2.4v1.9h-2.4zM144.7 133h1.2v1.2h-1.2zM181.4 133.3h2.2v1.8h-2.2zM197.4 132.6h2.7v1.6h-2.7zM240.3 132.9h2.6v2h-2.6zM282.5 132.8h1.3v1.7h-1.3zM294.6 133.2h2v2.1h-2zM301.2 132.6h2.2v1.7h-2.2zM303.4 133.2h2.2v1.6h-2.2zM328.8 133.1h2.3v1.1h-2.3zM-0.7 134.3h2.1v2h-2.1zM5.6 133.7h2.8v1.4h-2.8zM46 134h2.2v2h-2.2zM87.8 133.9h2.8v1.6h-2.8zM144.2 134.4h1.3v1.3h-1.3zM157.9 133.9h1.4v1.9h-1.4zM209.9 133.7h2.7v1.2h-2.7zM216.7 134.4h1.8v2h-1.8zM224.7 134.5h2.4v1.7h-2.4zM229.4 134.6h1.3v1.4h-1.3zM257.6 134.5h1.7v1.8h-1.7zM285.5 134.2h1.4v1.3h-1.4zM314.6 133.9h2v1.1h-2zM8 135h2.2v2.3h-2.2zM28.4 135.1h1.8v1.6h-1.8zM50.5 135.1h2.7v1.2h-2.7zM77.8 135.4h2.5v1.9h-2.5zM80.6 135.3h2.1v1.4h-2.1zM128.6 134.8h2v2.1h-2zM135 135.4h1.7v1.6h-1.7zM137 135.5h2.3v2h-2.3zM145.7 135.2h2.6v1.6h-2.6zM208.7 135.9h2v1.9h-2zM215.7 135.5h1.4v2.1h-1.4zM231.8 135.8h2.4v1.4h-2.4zM270.2 135.2h1.6v2h-1.6zM292.9 135.3h2.9v1.2h-2.9zM325.7 135.1h2.5v1.9h-2.5zM14.7 136.9h2.8v2h-2.8zM45.6 136.9h2.6v1.7h-2.6zM64.6 136.7h3v1.5h-3zM67.6 136.1h1.9v1.3h-1.9zM75.9 136.7h2.3v2.4h-2.3zM101.9 136.9h3v1.6h-3zM114.7 137h2.3v2.3h-2.3zM147.1 136.4h1.4v1.3h-1.4zM154.6 137.2h2.2v2h-2.2zM167.5 137.2h1.3v1.6h-1.3zM184.7 136.4h1.5v1.8h-1.5zM207.2 136.5h1.3v1.3h-1.3zM208.7 136.3h1.4v2.1h-1.4zM248.5 136.4h1.3v1.7h-1.3zM302.9 136.6h2.1v1.6h-2.1zM10 138.2h2.2v1.9h-2.2zM45.5 138h2.7v2.3h-2.7zM66.3 138.2h2.8v1.9h-2.8zM71.4 138.6h2.2v1.6h-2.2zM79.6 138.5h1.4v2.4h-1.4zM97.3 138.1h1.3v1.6h-1.3zM132.1 138.6h2.9v1.5h-2.9zM146.5 137.6h1.7v2.5h-1.7zM150.7 137.5h2.9v2.5h-2.9zM210.7 137.6h2.6v1.7h-2.6zM227 138.3h2.9v1.7h-2.9zM320.3 138.6h1.8v1.2h-1.8zM10.4 139.3h2.3v1.6h-2.3zM19.4 140h2.3v2.3h-2.3zM34.8 139.1h2.4v2.2h-2.4zM65.8 139h1.7v1.7h-1.7zM80.6 139.9h1.9v2.4h-1.9zM91.5 139.2h1.6v1.8h-1.6zM110.8 139.6h1.7v1.9h-1.7zM120.5 139.7h3.1v2.2h-3.1zM127.3 139h1.4v2h-1.4zM191.4 139.1h3v1.9h-3zM276.8 139.3h2.2v2.5h-2.2zM282.1 139h2.3v1.7h-2.3zM118 141.4h1.7v1.9h-1.7zM137.6 141.2h2.7v1.3h-2.7zM180.3 141.1h2.6v1.5h-2.6zM185 141.2h3.2v1.6h-3.2zM211.2 141.3h2.1v2.1h-2.1zM222.6 141.2h1.9v2.5h-1.9zM254.9 141.3h2v2.3h-2zM323.8 141.1h3v1.5h-3zM-1.6 142.3h1.5v1.4h-1.5zM31.9 142.8h3.1v2.5h-3.1zM102.8 142.8h1.6v2.7h-1.6zM164.2 142.6h1.9v2.7h-1.9zM205.9 142.3h2.3v2.5h-2.3zM219.6 142.8h2.2v2.4h-2.2zM252.4 143h1.7v2.3h-1.7zM300.4 142.2h2.5v2.7h-2.5zM58.1 143.5h2.5v2.4h-2.5zM114.6 143.6h3.3v2.7h-3.3zM132.5 143.5h3.4v1.9h-3.4zM152.6 143.8h3.4v1.5h-3.4zM200.4 144h1.7v2.8h-1.7zM291.3 143.6h1.8v1.7h-1.8zM317 144h2v1.7h-2zM35.3 146.2h3.3v1.6h-3.3zM78.2 145.9h2.5v2.2h-2.5zM90 146.2h3.2v2.5h-3.2zM258.8 145.5h3.6v1.7h-3.6z"/>
<path fill="#a08858" d="M20.9 122.6h1.3v1.6h-1.3zM22.4 121.4h1.7v1.4h-1.7zM70.7 122.5h1.6v1.3h-1.6zM92.4 121.5h1.3v1.9h-1.3zM107.6 121.9h1.8v2h-1.8zM114 121.9h2.5v1.6h-2.5zM133.9 121.7h1.3v1.7h-1.3zM152.7 121.6h1.9v1h-1.9zM192 121.5h1.7v1.5h-1.7zM193.7 122.1h2.3v2h-2.3zM234.6 122.3h1.6v1.4h-1.6zM273.8 122.3h1v1.5h-1zM283.6 121.4h2.4v1.1h-2.4zM302.1 121.9h1.2v1.7h-1.2zM309.4 122.2h2v1.3h-2zM326.7 122.3h2.3v1.3h-2.3zM18.3 123.2h2.5v1.5h-2.5zM24 123.4h2.3v1.5h-2.3zM33.3 122.9h2.2v1.8h-2.2zM48.5 123.8h2v2h-2zM84 123.4h1.1v1.4h-1.1zM99.5 123.1h2.3v1.4h-2.3zM122.8 122.8h1.4v1.3h-1.4zM146.9 123.5h2.4v1h-2.4zM187.9 123.1h1.7v2h-1.7zM203.7 123.8h1.4v1.2h-1.4zM253.2 122.7h1.2v1.5h-1.2zM258.9 123.2h2.4v1.1h-2.4zM286.1 122.7h1.9v1.6h-1.9zM292.6 123.8h1.5v1.7h-1.5zM296.1 123.2h2.5v1.7h-2.5zM25.3 124.6h1.6v2h-1.6zM36.3 124.3h2.2v1.3h-2.2zM44.2 124.7h2.5v1.4h-2.5zM60.6 124.9h1.8v1.7h-1.8zM177.5 124.1h1.1v2h-1.1zM193.9 124h1.8v2.1h-1.8zM206.5 124.8h1.6v1.5h-1.6zM227.1 124.8h2.4v1h-2.4zM257.3 124.4h1.9v1.7h-1.9zM262.4 124.4h1.4v2h-1.4zM281.8 124.1h1.8v1.9h-1.8zM299 124.9h1.7v2h-1.7zM22.8 126h2.4v2h-2.4zM28.5 125.4h2v1.5h-2zM32.1 125.4h2.1v1.2h-2.1zM69.2 125.9h1.7v1.6h-1.7zM71.1 125.8h1.5v1.4h-1.5zM76.8 126h1.1v1.7h-1.1zM135.9 126h1.9v1.6h-1.9zM149.9 126h1.1v1.1h-1.1zM175.6 125h1v1.8h-1zM214.3 125.2h2.2v1.1h-2.2zM264.7 125.2h1.1v1.7h-1.1zM270.8 125.8h1.8v1.6h-1.8zM280.2 125.2h1.5v1.1h-1.5zM293 125.6h1.8v1.5h-1.8zM309.2 126.2h1.3v1.8h-1.3zM318.9 125.4h2.3v1.9h-2.3zM6.2 126.8h1.2v1.1h-1.2zM40.7 126.5h2.5v1.7h-2.5zM64.5 126.7h1.8v1.6h-1.8zM81.7 126.9h1.8v2.1h-1.8zM137.1 127.2h2.1v1.6h-2.1zM176.7 127h2v1.1h-2zM185.7 126.4h2v1.7h-2zM208.3 127h1.7v1.6h-1.7zM251.9 126.4h2v2h-2zM283 126.9h1.2v1.9h-1.2zM304.1 127.1h2.3v1.9h-2.3zM306.8 126.6h1.9v1.5h-1.9zM313.3 126.8h1.8v1.2h-1.8zM324 126.4h1.7v1.4h-1.7zM-0.9 127.4h2.3v2.1h-2.3zM11.5 127.5h1.1v1.4h-1.1zM30.7 127.4h1.7v1.1h-1.7zM45.5 128.4h1.3v1.6h-1.3zM66.1 127.6h2.1v1h-2.1zM77.4 127.5h1.9v1.2h-1.9zM82.5 128.5h2.1v1.4h-2.1zM136.3 128.5h1.4v1.1h-1.4zM177 128.5h1.6v1.5h-1.6zM206.9 127.8h1.9v1.3h-1.9zM267.8 128.1h1.7v1.1h-1.7zM-3.5 129h1.9v1.7h-1.9zM13.6 128.7h1.2v1.9h-1.2zM53.7 129.6h1.3v1.4h-1.3zM88.9 129h2.1v1.9h-2.1zM91 128.9h1.8v2h-1.8zM128.4 128.7h1.7v1.6h-1.7zM137 129.3h2.3v1.9h-2.3zM142.1 128.7h1.3v1.9h-1.3zM171 129.4h2.3v2.1h-2.3zM183.2 129.2h1.1v1.9h-1.1zM184.5 129.6h1.9v1.8h-1.9zM186.5 128.8h2.4v1.4h-2.4zM200.2 129.2h1.7v1.5h-1.7zM233.7 128.8h2.4v2.1h-2.4zM265.7 128.8h1.6v1.7h-1.6zM15.2 130.4h1.7v1.3h-1.7zM30.5 130.7h1.7v2.1h-1.7zM61.3 130.4h1.8v1.4h-1.8zM65 130.2h1.6v2h-1.6zM78 130h1.8v1.7h-1.8zM110.6 129.8h2v2h-2zM119 130.4h2.4v1.7h-2.4zM132.7 130.2h2.4v1.5h-2.4zM161.4 130.9h2.2v2h-2.2zM166.7 130.8h1.3v2h-1.3zM188.6 130.6h2.2v1.5h-2.2zM208.3 129.9h2.3v2.1h-2.3zM221.4 130.9h2.2v1.3h-2.2zM225.7 130.3h1.3v1.2h-1.3zM227.1 130.7h1.9v1.8h-1.9zM288.2 130.9h2.1v1.7h-2.1zM294.7 130.7h2.5v2h-2.5zM303 130.3h1.6v1.8h-1.6zM310.5 130.9h2v1.2h-2zM325.5 129.8h2.3v1.3h-2.3zM15.1 131h2.3v1.5h-2.3zM28 131.2h2.4v1h-2.4zM39.8 131.3h1.8v1.3h-1.8zM54.1 131.3h2.1v1.6h-2.1zM128.6 131.5h1.2v1.1h-1.2zM164.5 131.1h2v1.7h-2zM172.3 131.2h2.5v1.6h-2.5zM176.6 131.4h2.5v2h-2.5zM195.3 131.5h2.5v1.9h-2.5zM219.1 131.3h1.7v2.1h-1.7zM229.8 131.2h2.4v1.7h-2.4zM241.6 131.7h1.1v1.1h-1.1zM276.2 132h1.9v1.2h-1.9zM278.4 131.6h2.1v1.7h-2.1zM322.4 131.1h2.6v1.5h-2.6zM-0.2 132.3h1.7v1.6h-1.7zM76.7 132.8h2.5v1.2h-2.5zM98.1 133.1h2.5v1.6h-2.5zM100.5 132.2h1.9v1.6h-1.9zM103.9 132.7h1.5v1.6h-1.5zM118.5 133.2h1.1v1.8h-1.1zM128 132.8h1.7v2.2h-1.7zM131.8 133.3h1.2v1.5h-1.2zM148.1 132.7h1.7v1.7h-1.7zM158.6 132.5h2.2v1.9h-2.2zM170.5 132.8h2v1.7h-2zM189.1 132.3h1.4v2.1h-1.4zM212.5 132.5h2v1.3h-2zM231.2 133.2h1.6v1.2h-1.6zM243 133.1h2.3v2.1h-2.3zM251.4 132.4h1.6v1.6h-1.6zM276.1 133.1h2.2v1.9h-2.2zM278.6 132.8h1.5v2h-1.5zM285.9 132.2h2.4v2h-2.4zM288.9 133.2h2v1.8h-2zM18.9 133.7h1.5v1.6h-1.5zM101.9 133.5h2.7v1.6h-2.7zM104.5 134.3h1.7v1.7h-1.7zM108.4 134h1.4v1.6h-1.4zM140.7 133.8h1.3v1.5h-1.3zM141.9 134.6h2.4v1.6h-2.4zM162.6 134.1h2.6v2.3h-2.6zM170.8 133.6h2.2v1.4h-2.2zM188.7 133.8h2.6v1.3h-2.6zM199.5 134.3h2.3v2h-2.3zM250.3 133.6h1.9v1.9h-1.9zM264.5 133.8h2.8v2.3h-2.8zM267.7 134.5h2.6v1.1h-2.6zM282.5 134h2.5v1.3h-2.5zM41.1 135.4h2v1.9h-2zM48.2 135.2h1.9v1.8h-1.9zM86 135.9h1.4v2.1h-1.4zM100.2 134.8h2.8v1.8h-2.8zM121.5 135.8h2.8v2.1h-2.8zM144.3 135.4h1.4v2.4h-1.4zM168 135.4h1.7v1.6h-1.7zM247.3 135.5h2.3v1.6h-2.3zM7.7 136.5h2.9v2.1h-2.9zM193.1 137.2h1.3v1.9h-1.3zM215.8 137.2h3v2h-3zM262.9 136.1h2.7v2.3h-2.7zM309 136.3h1.7v1.6h-1.7zM23.7 138.3h2.6v1.9h-2.6zM86 138.5h2.5v1.3h-2.5zM135.7 137.6h1.9v1.4h-1.9zM144.3 137.9h1.7v1.3h-1.7zM176.6 137.6h1.6v1.7h-1.6zM180.7 138.1h1.9v2.1h-1.9zM238.1 138.5h1.6v1.2h-1.6zM246.6 138h1.3v1.8h-1.3zM255.2 137.9h2.8v1.8h-2.8zM279.3 138.7h2.1v1.6h-2.1zM301.3 138.6h1.9v1.5h-1.9zM324.3 137.9h2.6v1.9h-2.6zM-0 138.9h3v2.1h-3zM99.4 139.1h2.9v1.4h-2.9zM161.4 139.7h2.5v1.9h-2.5zM166 139.1h2.4v1.8h-2.4zM244.8 139.1h2.8v1.7h-2.8zM268.3 139.7h2.1v1.4h-2.1zM270.5 139.8h2.7v2.5h-2.7zM49.8 140.6h2v2.7h-2zM195.5 141.3h3v1.4h-3zM206.9 140.5h1.7v1.9h-1.7zM219.5 141.2h2.6v2.4h-2.6zM245.7 140.5h2.9v2.4h-2.9zM267.8 141.5h1.8v1.4h-1.8zM301.3 140.9h2.8v2.4h-2.8zM290 141.9h2.3v2.7h-2.3zM170.5 143.7h2.3v1.7h-2.3zM208.4 144.3h2.1v2.4h-2.1zM217.6 144.6h2.5v2.7h-2.5zM252.8 144h2.7v2.8h-2.7zM256.1 143.7h2.4v1.7h-2.4zM23.4 146h2v2.3h-2zM39.4 145.3h1.8v1.5h-1.8zM64.7 145.3h3.1v1.9h-3.1zM86.9 145.8h2.8v2.1h-2.8zM99.6 145.7h2.4v1.7h-2.4zM106.4 145.5h1.9v1.6h-1.9zM149 145.1h2.3v2.6h-2.3zM188.8 146.2h2.4v1.9h-2.4zM240 145.9h3.1v2.5h-3.1zM252.4 145.2h1.5v2.1h-1.5zM253.9 145.4h2v1.9h-2zM318.8 146.2h2v2.7h-2z"/>
<path fill="#4c4438" d="M39 122.2h1.2v1.6h-1.2zM49.6 121.8h1.1v1h-1.1zM53 122.3h1.1v1.6h-1.1zM61 122.2h2.4v1.8h-2.4zM117.5 121.6h2.2v1.6h-2.2zM123.4 122.3h1.7v1h-1.7zM132 122.2h1.9v1.6h-1.9zM135.5 121.5h2.4v1.1h-2.4zM138.1 121.6h1.7v2h-1.7zM216.3 122.4h2.5v1.3h-2.5zM222.6 121.8h1.5v2h-1.5zM242.2 121.5h2.2v1.1h-2.2zM316.5 122.2h1.9v1.2h-1.9zM21.2 123.7h2.5v2h-2.5zM40.3 123.6h2.4v1h-2.4zM67.5 123.5h2v1.6h-2zM74.2 122.9h2v1.9h-2zM77.9 123h2v1h-2zM109.1 123.7h1.4v1.1h-1.4zM124.4 122.9h2.2v1.5h-2.2zM131.5 122.9h1.8v2h-1.8zM184.9 123.2h1.2v1h-1.2zM189.8 122.8h2.2v2.1h-2.2zM234.6 123.3h1.3v1.7h-1.3zM236 123.5h1.9v1.1h-1.9zM273.2 123.1h1.8v2h-1.8zM294.5 122.7h1.6v1.9h-1.6zM300.7 123.7h1.3v1.7h-1.3zM49.7 125h2.1v1.3h-2.1zM73 123.9h1.6v1.5h-1.6zM98.3 124h1.4v1.3h-1.4zM112.7 124.2h1.5v2h-1.5zM114.2 124.8h1.4v1.8h-1.4zM135.6 124.2h1.9v1.8h-1.9zM144.6 124.9h1.5v1.6h-1.5zM196.2 124.5h2v1.2h-2zM210.1 124.3h2.3v1.8h-2.3zM229.7 124.2h1.9v1.8h-1.9zM251.6 124.2h2.3v1.2h-2.3zM263.7 123.9h1.8v1.7h-1.8zM285.3 124.2h2.3v1.9h-2.3zM308 124.7h1.4v1.2h-1.4zM15.2 125.1h1.6v1.8h-1.6zM36.7 126.1h2.5v1.7h-2.5zM45.3 125.2h1.1v1.4h-1.1zM100.3 125.1h2.4v1.6h-2.4zM109.4 125.7h1.3v1.1h-1.3zM120.8 126h1.8v1.4h-1.8zM179.5 126h2.2v1.5h-2.2zM191.7 125.4h2.3v1.5h-2.3zM206.7 126.1h2v1.1h-2zM211.3 125.7h1.2v2.1h-1.2zM218.3 126h1.9v1.1h-1.9zM230.9 125.7h1.2v1.9h-1.2zM247.7 125.1h2.4v1.6h-2.4zM252.2 125.3h1.4v1h-1.4zM272.8 125.6h1v1.9h-1zM291.6 125.2h1.4v1.7h-1.4zM307.8 125.4h1.1v1.7h-1.1zM50.9 126.2h1.9v1.1h-1.9zM70 127.3h1.9v1.4h-1.9zM101.3 127.3h1.4v1h-1.4zM117.5 126.8h1.9v1.3h-1.9zM126.8 127.2h2.4v2.1h-2.4zM134.8 126.9h2.2v1.8h-2.2zM162 126.5h2.1v2.1h-2.1zM182.9 127h2.3v1.7h-2.3zM236.6 127.1h1.1v1.9h-1.1zM241.3 127.1h2.4v1.6h-2.4zM79.7 128.5h2.5v1.4h-2.5zM91.6 128.5h2.3v2.1h-2.3zM98 127.6h1.4v1.3h-1.4zM110.3 127.7h1.5v1.7h-1.5zM123.5 128.1h2.5v1.4h-2.5zM149.4 127.5h2v1.9h-2zM156 128.3h1.5v2.1h-1.5zM171 128.2h2v1.1h-2zM194.6 128.3h1.8v1.9h-1.8zM231.3 127.8h2.5v1.2h-2.5zM255.3 127.9h1.7v1.1h-1.7zM317.2 128.1h2.1v2.1h-2.1zM326.8 127.5h1v2h-1zM21.6 128.8h2.3v1.6h-2.3zM45.3 129.4h2.2v2h-2.2zM55.2 128.9h1.3v1.6h-1.3zM59.1 129.4h2v1.3h-2zM67.6 129.7h1.8v2h-1.8zM79.2 128.8h1.5v1.2h-1.5zM83.5 129.1h1.3v1.7h-1.3zM119.7 129.6h1.1v1.3h-1.1zM139.4 129.7h1.4v2.1h-1.4zM154.8 128.9h2.5v1.2h-2.5zM178.8 129.6h1.2v1.2h-1.2zM223.1 128.7h1.2v1.2h-1.2zM251.5 129.6h2.4v2.1h-2.4zM256.9 128.7h2.2v1.5h-2.2zM283.4 129.5h1.7v1.6h-1.7zM26.7 130h2v2.1h-2zM68 129.8h2.3v1.3h-2.3zM82 130.6h1.3v1h-1.3zM87.5 130.4h2v1.8h-2zM89.8 130.3h2v1h-2zM114.4 130.3h2.1v1.6h-2.1zM144.2 130.8h2.3v1.7h-2.3zM186.5 130.8h2v1.7h-2zM195.4 130.2h1.4v1.3h-1.4zM211.1 130.6h2.5v1.9h-2.5zM223.8 130.7h1.9v1.9h-1.9zM247.9 130.7h1.9v1.7h-1.9zM255 130.5h1.3v1.3h-1.3zM256.4 130h2.1v1.8h-2.1zM327.6 130.4h1.8v1.8h-1.8zM33.2 131.8h2.2v1.7h-2.2zM35.7 131.6h2.6v1.8h-2.6zM102.6 131.6h1.2v1.6h-1.2zM120.7 131.2h1.8v1.6h-1.8zM166.9 131.4h1.6v1.4h-1.6zM207.2 131.7h1.2v1.5h-1.2zM254.6 131.2h2.1v1.3h-2.1zM287.2 131.7h1.6v1.2h-1.6zM310 131.3h1.9v2h-1.9zM56.2 132.4h1.6v1.1h-1.6zM70.8 133h2.6v1.8h-2.6zM115 132.7h1.6v2.2h-1.6zM119.8 132.3h1.7v1.8h-1.7zM194.1 132.4h1.2v2.2h-1.2zM43 134h2.6v2.1h-2.6zM98.5 133.7h1.7v1.3h-1.7zM148.6 134.2h1.4v2h-1.4zM296.7 134h2.2v1.9h-2.2zM302.5 134h2.1v1.1h-2.1zM328.2 134.1h2.4v1.7h-2.4zM10.4 135.5h2.6v1.9h-2.6zM73.2 135.6h2v1.8h-2zM184.4 135.8h1.2v2.1h-1.2zM197.3 135h2.6v2h-2.6zM252 135.5h2.7v1.6h-2.7zM311.9 135.2h1.5v2.2h-1.5zM37 136.1h3v1.4h-3zM62.8 137h1.4v2h-1.4zM113.3 136.3h1.5v2.2h-1.5zM117.3 136.8h1.6v1.6h-1.6zM123.3 136.4h1.6v1.5h-1.6zM129.7 136.6h1.9v2.3h-1.9zM133 136.4h2.4v1.7h-2.4zM151.7 136.1h2.5v2h-2.5zM156.7 136.3h2v1.9h-2zM174.1 136.3h2v1.5h-2zM194.6 136.1h1.6v2.2h-1.6zM203.9 136.7h1.4v1.8h-1.4zM210.1 137.2h2.9v2.1h-2.9zM20.5 137.9h3.1v2.3h-3.1zM40.1 138.6h2.3v2.3h-2.3zM54.3 137.5h2.9v2.2h-2.9zM63.9 138.1h2v1.4h-2zM94.9 138.3h2.1v2.3h-2.1zM154.2 137.6h2.1v2.1h-2.1zM196.3 138.2h2.9v2.3h-2.9zM243.5 138.1h3v1.8h-3zM247.8 138h1.3v2.2h-1.3zM253.9 137.6h1.3v1.2h-1.3zM270.3 137.8h2.6v1.7h-2.6zM314.7 138.2h2.7v1.9h-2.7zM318.9 138.5h1.3v1.5h-1.3zM327 138h2.7v1.3h-2.7zM30.6 139h2.6v1.5h-2.6zM48.5 139.1h2.7v1.8h-2.7zM173.2 139.8h1.5v2h-1.5zM242.9 140.1h1.6v2.2h-1.6zM279.3 139.9h2.3v1.8h-2.3zM286.3 139.9h1.4v1.9h-1.4zM324.5 139.5h1.4v1.5h-1.4zM14.8 141.4h3.3v2.1h-3.3zM18.7 140.9h1.7v1.4h-1.7zM72.3 141.1h2.7v2h-2.7zM113.2 140.4h2.6v2.6h-2.6zM131.2 141.2h3.3v2.1h-3.3zM150.1 140.9h1.8v2.1h-1.8zM202.5 140.5h2.5v1.4h-2.5zM236.9 140.6h2.4v1.6h-2.4zM271.4 140.7h3v2.6h-3zM278 140.5h2v2h-2zM314.6 140.7h2.8v2.1h-2.8zM107.8 142.2h3.2v2.7h-3.2zM166.5 143.1h1.8v2.2h-1.8zM177.5 142.2h1.6v1.7h-1.6zM191.7 142.2h3.2v1.7h-3.2zM281.1 143h2.3v2.2h-2.3zM283.6 142.3h2.8v1.4h-2.8zM298.8 142.1h1.5v2.4h-1.5zM329.6 141.9h3.1v2.1h-3.1zM18.4 144.1h1.7v1.6h-1.7zM175.3 144.5h1.8v1.7h-1.8zM283.7 143.8h1.8v2.6h-1.8zM299.9 143.6h2.1v1.7h-2.1zM-1.2 145.8h3.3v2.5h-3.3zM17.2 146.2h3.4v1.4h-3.4zM102.4 145.6h1.8v2.6h-1.8zM197.8 146.2h2.3v1.9h-2.3zM270.3 145.8h1.7v1.8h-1.7z"/>
<path fill="#8c7c60" d="M54.1 122.5h2.5v1.4h-2.5zM65.6 122.3h1.8v1.2h-1.8zM69.4 122h1.3v2h-1.3zM72.4 121.8h1.9v1.3h-1.9zM122.2 122h1.2v1.5h-1.2zM169.1 122.2h1.9v1.6h-1.9zM245.7 121.9h1.8v2h-1.8zM258.7 121.4h1.3v2h-1.3zM279.8 122.2h1.4v1.8h-1.4zM329.1 121.4h1.3v1.6h-1.3zM5.9 123.7h2.1v1.8h-2.1zM15.4 122.9h2.4v2h-2.4zM69.6 122.9h1.8v1.2h-1.8zM116.2 123.2h1.2v1.2h-1.2zM135.1 123.3h2.2v2h-2.2zM145.4 123.1h1.4v1.7h-1.4zM186.3 122.8h1.6v2h-1.6zM212.8 123.1h2.2v2.1h-2.2zM240 122.9h1.8v1h-1.8zM266.8 122.6h1.3v1.1h-1.3zM310.4 122.7h1.6v1.3h-1.6zM10 123.8h1.3v1.3h-1.3zM13.6 124.3h1.3v1.6h-1.3zM27.3 123.9h1.8v1.8h-1.8zM30.9 124.5h1.6v1.9h-1.6zM38.9 124.2h1.9v2.1h-1.9zM109.7 124.9h2.4v1.1h-2.4zM118.8 124.7h1.4v1.6h-1.4zM131.9 124.5h2.5v1h-2.5zM175.3 124h1.9v2h-1.9zM178.7 124.1h1.2v1.2h-1.2zM183.1 123.9h1.5v1.3h-1.5zM212.9 124h1.4v1.9h-1.4zM259.4 124.8h1.5v1.7h-1.5zM260.9 124.2h1.3v1.6h-1.3zM276.7 124.6h1.4v1.1h-1.4zM283.7 124.1h1.6v1.7h-1.6zM309.4 124.6h1.3v1h-1.3zM321.5 123.8h2v1.4h-2zM41.1 125.6h1.6v1.3h-1.6zM74 125.2h1.1v1.7h-1.1zM103.1 125.2h2.4v1.1h-2.4zM176.7 125.6h1v2h-1zM189.6 125.1h1.9v1.1h-1.9zM194.3 125.8h2.2v2.1h-2.2zM196.5 125.3h2.5v1.6h-2.5zM198.9 125.1h1.9v1.4h-1.9zM234.8 125.7h2.3v1.6h-2.3zM237.6 125.9h2.5v1.9h-2.5zM310.5 125.5h1.7v1.4h-1.7zM36.7 126.7h1.9v1.7h-1.9zM61.1 127.1h1.5v1.9h-1.5zM83.9 127h2.1v1.2h-2.1zM86.1 126.5h1.7v1.2h-1.7zM124.6 127.2h2v1.6h-2zM155.8 126.2h1.9v1.3h-1.9zM213.1 126.2h2.5v1.4h-2.5zM218.7 126.8h1.1v2h-1.1zM221.7 126.5h2.3v1.2h-2.3zM239.6 127.2h1.4v1.5h-1.4zM257.3 126.2h2.2v1.1h-2.2zM289.8 127.1h1.9v2h-1.9zM311.9 126.2h1.3v1.8h-1.3zM15.8 128.4h2.2v1.8h-2.2zM36.1 128h1.1v1.6h-1.1zM64.3 127.5h1.5v1.8h-1.5zM144.5 128.5h2v1.8h-2zM160 128.4h2.5v1.5h-2.5zM173.1 128.1h2.2v1.7h-2.2zM186.2 127.7h1.6v1.3h-1.6zM190.3 127.8h1.1v1.4h-1.1zM215.7 127.8h2.2v1.8h-2.2zM234.1 127.4h1.8v1.3h-1.8zM247.9 127.4h1.6v1.3h-1.6zM305 128.5h2.2v1.3h-2.2zM325.3 127.4h1.3v1.9h-1.3zM-1.2 129.3h2.3v1.2h-2.3zM2.5 129.1h2.1v1.1h-2.1zM40.7 128.8h1.1v1.5h-1.1zM50.4 129.3h2v1.1h-2zM76 129.6h2.1v1.4h-2.1zM99.2 129.1h2.4v1.2h-2.4zM117.6 128.8h2v1.3h-2zM120.9 129.4h1.8v1.8h-1.8zM127.2 129.5h1v2h-1zM163.4 129.3h2v1.1h-2zM180.1 129.4h1.3v1.5h-1.3zM195.6 128.6h2.4v1.4h-2.4zM209.8 128.7h2.3v1.2h-2.3zM215.1 128.7h1.1v1.3h-1.1zM238 129.5h1.1v1h-1.1zM281.5 129.4h1.9v1.9h-1.9zM321.2 128.8h1.8v1.3h-1.8zM-3.1 130h1.7v1.5h-1.7zM-1.4 130h2.3v1.1h-2.3zM57.6 129.8h1.8v2h-1.8zM124.4 130h2v1.5h-2zM148.7 130h1.2v1.7h-1.2zM183.7 130.5h1.5v1.6h-1.5zM197 130h2.3v1.1h-2.3zM229.1 130h1.5v1.3h-1.5zM263.4 130.4h1.9v1.1h-1.9zM265.5 130h1.3v1h-1.3zM281.2 130.9h2.2v2h-2.2zM292.7 130.4h1.7v1.2h-1.7zM9.8 132.1h1.6v2h-1.6zM68.9 131.6h2.1v2h-2.1zM114.3 131.2h1.6v1.4h-1.6zM135.4 131h1.3v1.8h-1.3zM205.8 132.1h1.2v1.7h-1.2zM215.1 131.9h1.6v1.7h-1.6zM217 131.1h2v1.8h-2zM223.5 131.6h2.6v1.1h-2.6zM297.9 132.1h2.6v2.2h-2.6zM304.5 131.4h2.2v1.6h-2.2zM14.8 133.2h2.2v1.4h-2.2zM29.4 133.3h2.2v1.2h-2.2zM105.6 133.1h1.8v2.1h-1.8zM121.6 133.2h1.9v1.5h-1.9zM123.6 132.8h1.8v1.9h-1.8zM138.2 132.3h2v1.6h-2zM156.3 132.6h2.3v2h-2.3zM176.9 132.8h2.3v1.3h-2.3zM195.5 132.5h2v1.1h-2zM233.1 132.5h1.3v2h-1.3zM261.3 132.9h1.5v2.2h-1.5zM291.2 132.9h1.6v1.4h-1.6zM323.7 132.4h2.4v1.8h-2.4zM10 133.7h2.3v2.2h-2.3zM90.9 133.6h1.2v1.6h-1.2zM95.7 133.8h2.2v1.9h-2.2zM165.6 134.5h2.8v1.4h-2.8zM176.3 134.2h2.1v2.3h-2.1zM230.7 134h1.6v2.2h-1.6zM259.5 134.4h2v1.1h-2zM312.2 133.8h2.4v1.6h-2.4zM26.7 135.6h1.7v1.2h-1.7zM34 134.9h2.1v1.9h-2.1zM96.6 135.1h2v1.9h-2zM98.6 135.5h1.6v1.2h-1.6zM234.2 134.9h1.6v2.3h-1.6zM237.8 135.8h1.9v1.8h-1.9zM264.2 134.8h1.2v2.2h-1.2zM296.2 135.3h1.7v1.3h-1.7zM303.1 134.8h1.3v2.3h-1.3zM29.7 136.7h2.4v2.1h-2.4zM34.8 136.6h1.8v1.6h-1.8zM56.1 136.9h1.3v1.3h-1.3zM78.4 137h1.8v1.9h-1.8zM119.2 137.1h1.8v1.7h-1.8zM221.1 136.8h1.9v2.4h-1.9zM228.6 137.1h1.4v1.4h-1.4zM231.9 136.6h1.9v2h-1.9zM243.5 136.2h2.6v1.6h-2.6zM270.6 137.1h1.4v1.3h-1.4zM311 136.7h2.6v1.4h-2.6zM327.3 137.1h1.9v2.3h-1.9zM-1.7 138.2h1.9v1.9h-1.9zM34.8 138.1h2.3v1.9h-2.3zM60.4 138.1h3v2.5h-3zM76.3 137.7h3v1.4h-3zM142.5 138.4h1.7v2h-1.7zM309.6 137.7h2.7v2.3h-2.7zM45.7 139.2h2.4v2.1h-2.4zM67.4 139.6h1.8v2.6h-1.8zM114.7 139.9h2.7v1.9h-2.7zM187.2 139.1h2.6v2.3h-2.6zM233.4 139.4h2.5v2.4h-2.5zM303.5 140h2.9v2.5h-2.9zM110.2 140.5h3.1v2.1h-3.1zM264 141.4h3.3v2.4h-3.3zM41.8 142.5h3v1.8h-3zM152.3 142.7h2v1.4h-2zM183.6 142.8h1.4v1.4h-1.4zM230.7 142.3h1.6v2h-1.6zM242 142.8h1.5v2.3h-1.5zM292.4 142.9h2.4v1.9h-2.4zM327.7 142.4h1.9v2.2h-1.9zM78.2 143.5h3.1v2.1h-3.1zM177.3 143.7h3.1v1.9h-3.1zM196.7 143.8h2v1.9h-2zM231.6 143.8h2.2v2.8h-2.2zM323.1 143.7h3.2v1.8h-3.2zM53.9 146.3h3.5v2h-3.5zM71.2 145.2h2.1v2.4h-2.1zM112 146.2h3.6v1.9h-3.6zM133.1 145.9h2.8v2.6h-2.8z"/>
<path fill="#6c5c48" d="M86.8 121.6h2v1.9h-2zM94 122.5h2.1v1.1h-2.1zM98.1 122.5h1.3v1.8h-1.3zM104.4 122.3h1.7v1h-1.7zM106.1 122.2h1.2v1.6h-1.2zM128.4 121.9h2.1v2h-2.1zM130.7 121.7h1.3v1.2h-1.3zM139.9 121.8h2.1v1h-2.1zM157.4 122.5h1.5v1.1h-1.5zM173.5 121.9h1.7v1.5h-1.7zM176.7 121.5h2.3v1.1h-2.3zM204.5 122.5h1.4v2h-1.4zM207.3 121.6h1.4v1.3h-1.4zM244.5 121.9h1.1v1.7h-1.1zM250 121.8h2v1h-2zM311.6 121.9h1v1.4h-1zM-3.9 123.6h2.5v1.7h-2.5zM51 122.7h1.3v1.2h-1.3zM61 123.7h1.8v1.2h-1.8zM62.9 123.4h1.8v1h-1.8zM82.1 123.6h1.6v1.3h-1.6zM104.3 122.8h1.5v1.5h-1.5zM117.4 123h2.1v1.3h-2.1zM126.9 122.7h2.4v1.2h-2.4zM133.3 123.4h1.6v1.5h-1.6zM165.6 122.9h1.6v1.7h-1.6zM172.7 122.9h2.2v1.8h-2.2zM232.5 123h1.8v1h-1.8zM264.4 123.3h2.1v1.9h-2.1zM279.3 123.7h1.6v1.4h-1.6zM22.5 124.5h1.2v1.1h-1.2zM51.8 124.1h1.6v1.2h-1.6zM56.3 124.6h1.9v1.8h-1.9zM68.9 124.9h1.1v1h-1.1zM70.3 124h2.4v1.6h-2.4zM102.7 124.7h2.3v2.1h-2.3zM127.9 123.8h1.7v1.2h-1.7zM147.5 124.4h2.2v1.7h-2.2zM159.5 124.9h2.1v1.5h-2.1zM166.6 124.8h2v1.7h-2zM235.7 124.7h1.8v1.5h-1.8zM237.7 124h1.8v2h-1.8zM278.1 124.3h1.9v2h-1.9zM316.4 124.9h1.6v1.7h-1.6zM327.9 124.5h1.3v1h-1.3zM34.5 125.4h2.1v1.1h-2.1zM39.7 125.5h1.3v1.5h-1.3zM53.6 125.7h2v1.4h-2zM63.4 125.5h2.5v1.7h-2.5zM94.6 125.3h1.6v1.4h-1.6zM112.5 125.7h1.4v1.1h-1.4zM145.2 126.1h1.7v1.4h-1.7zM177.8 125.6h1.7v1.4h-1.7zM244.4 125.4h1.9v1.2h-1.9zM250.4 125.2h1.7v1.9h-1.7zM316.4 125.6h2v1.2h-2zM14.5 126.4h1.4v1.2h-1.4zM16.1 126.2h1.3v1.6h-1.3zM26 126.2h1.6v1.2h-1.6zM48 126.8h2.5v1.5h-2.5zM79.9 126.2h1.7v2.1h-1.7zM95 127.2h2.2v1.5h-2.2zM129.4 126.9h1.9v1.1h-1.9zM146.7 127h1.4v1.4h-1.4zM181 126.9h1.6v1.3h-1.6zM195.6 126.7h1.9v1.5h-1.9zM207 126.4h1.2v2h-1.2zM224 126.4h1.3v1h-1.3zM234.5 126.9h2v1.4h-2zM256 127.1h1.1v2h-1.1zM272.7 126.9h1.2v2.1h-1.2zM281.8 127.3h1.1v1.1h-1.1zM308.8 127.2h1.4v1.3h-1.4zM56 128.3h1.6v2.1h-1.6zM61.2 127.4h2.5v1.7h-2.5zM101.5 128.2h1.4v1h-1.4zM111.9 128.4h2.5v2h-2.5zM114.9 127.8h2.5v1.1h-2.5zM148.2 127.7h1.2v1.1h-1.2zM153.3 127.4h2.2v1.9h-2.2zM181.2 128.4h2.1v1.6h-2.1zM191.5 128h1.2v1.4h-1.2zM218.2 127.8h1.7v1.8h-1.7zM220 127.5h1.4v1.5h-1.4zM223.7 127.4h1.4v1.6h-1.4zM238.6 128h1.8v1.2h-1.8zM283.7 128.1h2v1.3h-2zM292.1 128.2h1.5v1.3h-1.5zM315 127.4h2.2v1.7h-2.2zM322.3 127.9h2.5v1.6h-2.5zM6.3 129.2h1.6v1.6h-1.6zM10.7 128.6h2.3v2.1h-2.3zM25.8 128.7h1.7v1.8h-1.7zM38.4 129.3h2.3v2h-2.3zM71 129.2h1.7v1.1h-1.7zM87.4 129.7h1.3v1.7h-1.3zM94.7 129h2.1v1.8h-2.1zM108.1 129.7h1.8v1h-1.8zM157.6 129.3h2.1v1.3h-2.1zM161.5 129.3h1.9v1.6h-1.9zM181.7 128.8h1.3v1.5h-1.3zM189.2 129.1h2.5v1.4h-2.5zM263.5 129.2h1.8v1.6h-1.8zM299.1 129h1.9v1.9h-1.9zM301.3 129h1.3v2.1h-1.3zM313.7 128.8h2.4v1h-2.4zM323.4 129.4h1.2v1.6h-1.2zM1.4 130.5h1.1v1.2h-1.1zM2.5 130.7h1.2v1.7h-1.2zM12.5 129.8h2.6v1.4h-2.6zM20.1 130.4h2.1v2h-2.1zM22.3 129.8h2v1.7h-2zM32.6 130.3h2.3v1.9h-2.3zM43.4 130.1h2v1.4h-2zM52.2 130.3h1.6v2h-1.6zM159.3 130.1h2v1.6h-2zM182 130.6h1.7v1.9h-1.7zM199.6 129.7h1v1.1h-1zM274.3 129.8h1.1v1.2h-1.1zM275.7 130.2h1.2v1.5h-1.2zM304.9 130.7h2.2v1.6h-2.2zM6.6 131.6h2.5v2.1h-2.5zM24.6 132.1h1.4v1.5h-1.4zM59.9 131.3h2.1v1.9h-2.1zM62.1 132h1.2v1.7h-1.2zM63.4 132h1.1v1.4h-1.1zM67.1 131.9h1.6v1.3h-1.6zM78 132h1.7v1.6h-1.7zM88.6 131.3h2.3v1.9h-2.3zM96.5 131.9h1.4v1.6h-1.4zM104 131.8h2.4v2h-2.4zM124.2 131.3h2.5v1.4h-2.5zM159.7 131.5h2.5v1.5h-2.5zM162.1 131.2h1.9v1.1h-1.9zM232.2 131.8h1.3v2h-1.3zM233.6 130.9h1.2v1.8h-1.2zM239.4 131.4h2v1.9h-2zM269.6 131.3h1.4v1.5h-1.4zM282.9 131.3h1.2v2.1h-1.2zM319.7 131.2h1.3v1.9h-1.3zM58.1 132.5h2.5v2.1h-2.5zM67.2 133.4h1.4v1.9h-1.4zM85.9 132.2h1.3v2.2h-1.3zM140.3 133h1.9v1.2h-1.9zM142.6 133.2h1.9v1.8h-1.9zM172.6 133.2h2.3v2.2h-2.3zM207.3 132.2h1.4v1.3h-1.4zM245.2 132.3h2.4v1.7h-2.4zM253.2 132.3h1.7v1.9h-1.7zM1.7 133.7h1.5v1.4h-1.5zM20.7 133.8h2.3v2.1h-2.3zM48.7 134h1.5v1.9h-1.5zM57.8 133.5h1.3v1.1h-1.3zM213 134.5h1.7v1.3h-1.7zM220.8 134.3h1.2v2h-1.2zM243.3 134.2h2.1v1.3h-2.1zM24.7 135.7h1.7v1.4h-1.7zM44.9 135.4h2.9v1.7h-2.9zM62.6 135.5h2.6v2.2h-2.6zM103.2 135.4h2.7v2.1h-2.7zM110.4 135.4h1.6v2.3h-1.6zM153.2 135.7h1.5v1.6h-1.5zM161.9 134.8h2.6v1.9h-2.6zM175.3 135.2h1.4v1.6h-1.4zM188.5 135.5h1.3v2.3h-1.3zM201.8 135.3h2.5v1.9h-2.5zM223.9 135.7h1.3v1.8h-1.3zM241.5 135.7h2v1.8h-2zM297.8 134.8h1.3v1.3h-1.3zM43.1 137.3h2.3v2h-2.3zM136 136.9h3v2.2h-3zM170.4 136.6h1.5v2.1h-1.5zM196.5 136.4h2.9v2.4h-2.9zM212.9 136.1h2.4v1.2h-2.4zM224.7 137.2h1.3v1.3h-1.3zM255.2 136.6h2.7v1.6h-2.7zM298.4 136.5h1.9v1.4h-1.9zM324.7 137.2h2.3v1.8h-2.3zM2.4 137.9h2.1v2.1h-2.1zM29 138.2h1.3v2.5h-1.3zM140.7 137.7h1.8v1.8h-1.8zM148.5 137.5h1.9v2.5h-1.9zM222.2 138.3h2.4v2.3h-2.4zM258 137.9h2.8v2.2h-2.8zM8.6 140h1.8v2h-1.8zM78.7 139.4h1.6v2.1h-1.6zM133.8 139.3h1.7v1.5h-1.7zM189.9 139.1h1.5v1.4h-1.5zM200.6 140.1h2.9v2.1h-2.9zM221.5 139.5h2.1v2.6h-2.1zM262.5 139.7h2.3v1.8h-2.3zM301.6 139h1.5v1.6h-1.5zM313 139h2.9v2.2h-2.9zM98.7 141.4h2.2v2.2h-2.2zM148 140.5h1.7v1.7h-1.7zM154.4 141.3h1.4v2.4h-1.4zM183.2 140.8h1.5v1.3h-1.5zM224.6 140.6h1.9v1.8h-1.9zM260.5 141.4h3.1v1.6h-3.1zM269.6 140.5h1.5v1.4h-1.5zM276.1 141.4h1.9v2.1h-1.9zM321.7 141.3h1.9v2.4h-1.9zM24.4 142.5h1.8v2.4h-1.8zM48.6 142.2h3.2v2.4h-3.2zM52.5 142.5h2.3v2.6h-2.3zM76.2 142.6h3v1.8h-3zM208.7 142.5h1.6v1.9h-1.6zM237.7 142.1h2.3v2.6h-2.3zM240 142.9h1.6v1.8h-1.6zM262.2 142.3h3.4v1.7h-3.4zM39.7 144.5h2.5v1.3h-2.5zM67.5 143.8h1.9v2.2h-1.9zM87.3 143.7h2.4v2.1h-2.4zM142.1 144.6h1.7v2.4h-1.7zM202.3 143.7h2.1v1.4h-2.1zM151.3 145.6h2.7v2h-2.7zM176.1 145.1h2.8v1.7h-2.8zM200.7 146.1h2.3v1.5h-2.3zM219.4 145.8h2.2v2.8h-2.2zM246.5 146h2.7v1.6h-2.7zM266.3 146.1h1.9v2.5h-1.9zM298.4 145.2h2.5v1.8h-2.5zM308.4 145.8h3.2v2.1h-3.2z"/>
<path fill="#5c5440" d="M116.7 130.2h1.9v1.1h-1.9zM19.6 131.6h2.3v1.7h-2.3zM175 133.7h1.2v2h-1.2zM201.9 133.7h2v2.1h-2zM304.7 134.9h1.7v2.3h-1.7zM186.3 137h2v2.4h-2zM223 136.4h1.4v1.6h-1.4zM6.2 137.9h1.4v1.7h-1.4zM116.5 138.2h2.5v1.7h-2.5zM278 138.4h1.3v1.5h-1.3zM317.3 137.6h1.3v2.5h-1.3zM105.5 139h2.4v2.1h-2.4zM151 139.8h3.2v2.4h-3.2zM211 139.8h2.1v2.1h-2.1zM226.1 139.6h2.7v2.3h-2.7zM62.8 140.9h3.1v1.8h-3.1zM163.8 140.8h2.9v1.5h-2.9zM167.1 140.8h2.4v1.9h-2.4zM233.2 141.3h3.1v1.9h-3.1zM143.5 142h2.9v1.5h-2.9zM195.6 143.1h1.5v2.5h-1.5zM-0.3 144.2h3.1v2.5h-3.1zM26.4 144.6h2.6v2.2h-2.6zM44.7 144.5h2.7v2.3h-2.7zM95.7 143.9h3.1v2.3h-3.1zM147.5 143.7h2.4v2.2h-2.4zM162.7 144.1h2.3v2.4h-2.3zM25.3 145.9h3v1.8h-3zM67.8 145.7h2.7v1.4h-2.7zM179.6 145.7h2.9v2.4h-2.9zM228.6 146.2h2.2v1.4h-2.2zM249.1 145.6h2.7v1.7h-2.7zM280.5 145.8h2.1v1.5h-2.1zM311.4 145.9h3.2v2.4h-3.2zM24.1 147h3.2v3h-3.2zM32.3 147.1h2.3v2.3h-2.3zM59 147.5h1.7v2.5h-1.7zM120 147.2h1.6v2.4h-1.6zM143.1 147.6h3v1.9h-3zM146.8 147.8h2.6v2.7h-2.6zM232.3 146.9h1.6v1.6h-1.6zM271.3 147.5h2.5v1.5h-2.5zM290.7 146.8h1.7v2.2h-1.7zM320.8 147.2h2.3v1.8h-2.3zM-0.1 149.3h2.5v1.7h-2.5zM4.7 149.6h2.2v2.2h-2.2zM7.4 149.6h3.6v1.6h-3.6zM35.6 148.7h3.8v3h-3.8zM61.2 148.5h2.8v3h-2.8zM71.9 149h3.6v3h-3.6zM98.8 149.6h3v3.1h-3zM152 148.6h3.7v1.6h-3.7zM167.7 149.1h3.8v2.7h-3.8zM185.7 149.2h3.1v2.7h-3.1zM194.4 148.7h3.6v2.9h-3.6zM260.8 149.2h2.3v1.9h-2.3zM263.7 149.6h3.3v1.5h-3.3zM310.6 148.9h2.9v1.5h-2.9zM41.9 150.8h1.9v2h-1.9zM53.2 151.3h3.1v2.7h-3.1zM84.2 150.5h1.7v2.5h-1.7zM151.9 150.8h3.4v2.8h-3.4zM160.3 151.2h2v2.5h-2zM202.6 151.1h2.3v2.2h-2.3zM279.2 151.1h2.2v2.2h-2.2zM302.6 150.7h3v1.8h-3zM-2.5 152.2h3.9v1.9h-3.9zM18.3 152.6h4v2.2h-4zM36.4 152.9h3.1v1.9h-3.1zM40.1 152.3h1.9v2.2h-1.9zM42.3 153h2.7v3h-2.7zM118.9 152.9h1.8v1.9h-1.8zM139.1 152.2h1.9v2.3h-1.9zM154.9 153h3.3v1.8h-3.3zM174.9 152.6h2.2v2.2h-2.2zM232.2 152.7h2.9v2.5h-2.9zM262.8 152.8h2.6v2.2h-2.6zM283.5 153h3.2v2.6h-3.2zM298.7 152.3h3.4v2.3h-3.4zM54.9 154.7h2.1v3.1h-2.1zM71.4 155.1h2v2.3h-2zM88 154.5h3.1v3.2h-3.1zM110.7 154.8h4v2.6h-4zM149.4 154.3h3.1v2.5h-3.1zM163 154.4h2.3v2.1h-2.3zM292.8 154.6h3.9v2.2h-3.9zM312.1 154.5h2.2v2.5h-2.2zM325.3 154.4h3.6v2.3h-3.6zM47.2 156.5h3.5v2.7h-3.5zM53.1 156.1h1.9v2.7h-1.9zM60.6 156.7h3.2v2.4h-3.2zM102.1 156.7h2.5v2.2h-2.5zM111.8 156.2h2.2v1.9h-2.2zM121.7 156h2.4v2.9h-2.4zM136.8 156.8h3.8v1.7h-3.8zM193.1 156.9h4.3v3.4h-4.3zM243.5 156.3h2.1v3h-2.1zM254.4 156.5h2.2v2.6h-2.2zM273.6 156.3h2.1v2.5h-2.1zM309.7 156.1h3.8v2.4h-3.8zM321.3 156.6h2.6v1.8h-2.6zM31.5 158.3h3.8v2.4h-3.8zM47.3 158.9h3.4v2.6h-3.4zM88.5 158.3h4v1.7h-4zM143.6 158.6h2.7v2.1h-2.7zM161.7 158.6h3.8v1.7h-3.8zM213.5 157.9h3v1.8h-3zM225.3 158.4h2.3v3.5h-2.3zM246.5 158.2h2.5v3.6h-2.5zM265.3 158.8h3.9v3h-3.9zM292.4 158.7h3.6v3.1h-3.6zM8.6 160.7h2.5v3.4h-2.5zM27.9 160.3h1.9v2.6h-1.9zM30.2 160h4.2v3.1h-4.2zM46 160.8h2.7v2.9h-2.7zM70.6 160.9h3.9v3.6h-3.9zM148.3 160h3.4v3.2h-3.4zM186.7 160.3h3.4v3.5h-3.4zM237 160.3h4.1v2.2h-4.1zM256.1 160.1h2.9v2.3h-2.9zM17.8 162.8h4.5v3.3h-4.5zM32.7 162.4h3.4v3.3h-3.4zM96.9 163.1h3.9v2.3h-3.9zM115 162.9h2.1v1.9h-2.1zM117.5 162.1h2.3v3.2h-2.3zM192.6 162h4.7v2.8h-4.7zM211.9 163h2.9v1.8h-2.9zM300.8 162.8h4.6v3.2h-4.6zM103.7 164.9h3.8v3.3h-3.8zM107.5 164.4h2.1v2.3h-2.1zM191 164.5h4.3v2.6h-4.3zM226.1 164.9h2.5v2.6h-2.5zM237.4 164.2h4.4v3.2h-4.4zM315 165.2h2.4v2.9h-2.4zM7.8 167.4h2.1v3.7h-2.1zM15.1 167h4.5v3.6h-4.5zM46.6 166.4h2.1v3.1h-2.1zM134.8 166.5h2.8v3.3h-2.8zM181.9 166.4h2.4v3.6h-2.4zM184.5 166.4h4.4v3h-4.4zM189.3 167.2h4v2.9h-4zM250.8 167.2h3.3v2.6h-3.3zM259.7 167.5h2.7v4h-2.7zM270.4 167.3h3.2v3.8h-3.2zM321.9 167.1h2.8v3.4h-2.8zM15.9 168.8h3.3v3.1h-3.3zM24.8 169.7h2.3v3.9h-2.3zM29.9 169.8h4v2.9h-4zM272.1 169.6h2.3v4h-2.3zM291.3 168.9h3.9v3.6h-3.9zM323.8 169.8h5v3.5h-5zM35.2 171.8h5.2v3.3h-5.2zM119.2 171.6h3.8v2.7h-3.8zM172.6 171.3h4.5v3.2h-4.5zM215.3 172.1h5.4v4.1h-5.4zM239.9 171.6h4.8v3.5h-4.8zM317.5 172h4.9v4h-4.9zM323.1 171.9h4.7v2.7h-4.7zM114.7 173.8h4.8v2.4h-4.8zM178.9 173.8h4.9v2.3h-4.9zM-2 176.1h4.4v2.1h-4.4zM3 176.7h4.9v4h-4.9zM22 177h3.6v3.2h-3.6zM58.8 176.4h2.9v4.5h-2.9zM68.9 176.1h5.4v3.6h-5.4zM173.1 176.9h2.4v2.3h-2.4zM175.8 177.1h4.1v3.4h-4.1zM268.5 176.7h5.3v2.9h-5.3zM307 176.5h3.4v3.4h-3.4zM310.2 176.8h3.3v2.6h-3.3zM313.5 177h2.7v3.5h-2.7zM44.6 179.6h4.3v4.2h-4.3zM71.6 178.9h3.4v2.9h-3.4zM77.9 179.6h6v4.2h-6zM147.8 179.7h4.9v4.4h-4.9zM220.6 179.5h5.1v3.7h-5.1zM132.1 181.8h5.7v2.8h-5.7zM169.6 181.3h5.1v3.2h-5.1zM185.3 181.8h3.9v4.1h-3.9zM189.6 181.7h3.3v4h-3.3zM249.3 181.6h2.7v2.5h-2.7zM292 181.6h4.1v4.4h-4.1zM-2.2 184.7h6v3.6h-6zM54.7 184.9h4.1v4.1h-4.1zM115.8 184h4.3v4.6h-4.3zM140.9 184h3.5v3.2h-3.5zM250.8 184.5h6.2v2.9h-6.2zM257.3 184.5h5.9v3h-5.9z"/>
<path fill="#c0b898" d="M320 130.3h2.6v1.9h-2.6zM314.7 132.5h1.9v1.6h-1.9zM61.9 133.6h1.8v2.2h-1.8zM122 134.6h2.6v2.3h-2.6zM196.8 133.9h2.3v1.8h-2.3zM114 135h2.2v1.7h-2.2zM225 137.8h1.8v2.5h-1.8zM207.2 140h1.9v1.3h-1.9zM188.4 142.6h3.4v1.5h-3.4zM143.8 143.8h3.2v1.5h-3.2zM196 145.4h1.8v2.3h-1.8zM295.9 145.2h2.4v2.5h-2.4zM324.2 145.4h2.4v2.2h-2.4zM92.7 147.3h3.5v2.6h-3.5zM117.1 147.7h2.5v2.6h-2.5zM228.2 147h3.6v1.7h-3.6zM266.1 147.9h1.8v2.3h-1.8zM294.2 147h3.3v2h-3.3zM139 149.3h2.4v2.4h-2.4zM231.2 149.1h2.2v2.9h-2.2zM251.5 149.3h2.5v2h-2.5zM325.8 149.3h3.4v2.2h-3.4zM10.4 150.6h2.3v2.5h-2.3zM37.7 150.4h2v1.8h-2zM182.7 151.3h3.4v3h-3.4zM222.7 151.1h3.8v2.9h-3.8zM11.4 152.7h3.8v1.8h-3.8zM121 152.5h3.5v1.6h-3.5zM224.6 152.9h2.8v2.5h-2.8zM251.5 152.6h2.8v3.3h-2.8zM313.7 152.7h2.6v3.1h-2.6zM174.7 154.4h1.9v2.6h-1.9zM203.4 154.9h3v2.6h-3zM288.4 155h3.8v2.3h-3.8zM207.9 156.7h2v2.6h-2zM270.8 156.6h2.7v2.6h-2.7zM323.8 156h2.6v2.8h-2.6zM8.1 158h2.5v3.5h-2.5zM35.3 158.3h3.4v2.7h-3.4zM249.2 158.9h2.6v2.9h-2.6zM3.8 160h4.5v3.6h-4.5zM124.2 160.2h2.3v2.9h-2.3zM131.2 160.8h1.9v3.4h-1.9zM141.2 160.6h3.8v3.2h-3.8zM216.4 159.9h4v2.5h-4zM279.8 161h2.3v2.2h-2.3zM288 160.1h3.3v3.3h-3.3zM46.3 162.5h4.9v3.1h-4.9zM51.5 162.9h4.6v2h-4.6zM181 162.4h2.8v2.9h-2.8zM30.5 165h4v3.6h-4zM75.7 165.1h2.3v2.7h-2.3zM121 165.2h3.3v2.9h-3.3zM251.1 165.1h4.2v2.9h-4.2zM310.8 164.2h3.5v2h-3.5zM20.4 166.4h4.5v2.2h-4.5zM67.1 166.4h3v3.1h-3zM130.7 166.5h3.9v2.5h-3.9zM172.5 167h2.3v2.9h-2.3zM292.4 167.4h2.5v3.9h-2.5zM19.6 169.3h4.6v2.3h-4.6zM210.8 168.9h4v2h-4zM130.6 171.8h2.9v2.8h-2.9zM185.4 171.4h5.4v3.6h-5.4zM261.8 172h4.6v3.3h-4.6zM296.2 171.1h4.7v2.2h-4.7zM52.1 173.6h4.7v3.4h-4.7zM100.8 173.7h5.4v4h-5.4zM119.5 173.8h5v3.1h-5zM266.8 174.2h5.2v3.8h-5.2zM65.4 176.9h3v2.6h-3zM82.2 176.3h3.8v2.8h-3.8zM96.5 179.3h5.9v3h-5.9zM161.6 179.6h5.6v3.7h-5.6zM211 178.7h4.1v4.4h-4.1zM238.3 179.1h5.5v4.5h-5.5zM290.2 178.7h3.5v4h-3.5zM303.7 178.7h3.5v2.6h-3.5zM155.2 181.7h3.9v4.7h-3.9zM175.7 181.6h4.5v2.6h-4.5zM237 181.7h3.4v3.1h-3.4zM244.9 182.1h4.1v2.8h-4.1zM317 181.6h4v2.9h-4zM48.9 183.9h6.1v4.1h-6.1zM112.1 184.1h3.6v3.9h-3.6zM171 184.4h5.9v4.2h-5.9zM277.8 184.5h5.1v2.7h-5.1z"/>
<path fill="#3c3428" d="M76.4 131.4h1.7v1.7h-1.7zM24.1 132.7h1.3v1.6h-1.3zM72.9 133.8h1.3v1.2h-1.3zM145.7 134.1h2.8v1.1h-2.8zM13.6 135.2h1.2v1.4h-1.2zM105 136.3h2.7v2.2h-2.7zM199.7 136.2h1.4v1.8h-1.4zM199.7 138.6h2.6v2.5h-2.6zM283.4 138.2h2.6v1.5h-2.6zM-1.8 139.1h1.8v1.6h-1.8zM56.4 139.7h3.1v1.5h-3.1zM145.1 139.9h1.3v2h-1.3zM216.5 139h2.5v2.6h-2.5zM293.6 139.6h2v2.6h-2zM43 140.5h2.2v2.3h-2.2zM129.1 141.2h1.8v1.5h-1.8zM294.5 140.9h1.9v1.4h-1.9zM328.8 141.2h3.2v2.5h-3.2zM2.5 142.6h1.7v1.7h-1.7zM20.4 142.6h1.8v2h-1.8zM131.9 142.1h1.7v1.7h-1.7zM245.5 142.7h3.3v1.9h-3.3zM250.7 142.5h1.7v1.5h-1.7zM297.2 142.3h1.5v2.5h-1.5zM20 144.5h2.5v1.4h-2.5zM81.7 144.1h2.2v2.2h-2.2zM241.1 143.7h2v1.9h-2zM305.8 144.3h1.6v2.5h-1.6zM58 145.7h3.6v1.8h-3.6zM108.3 146h3.4v1.8h-3.4zM185.2 145.2h3.2v2.7h-3.2zM272.2 145.3h3.2v2.9h-3.2zM2.8 147h2.7v2h-2.7zM41.4 147.2h2.4v1.9h-2.4zM65.1 147.7h1.7v2.6h-1.7zM77.7 147.5h1.8v1.8h-1.8zM79.9 147.3h1.9v1.7h-1.9zM105 147.1h3.5v2.8h-3.5zM129.2 147.2h2.1v2.3h-2.1zM136.8 147.7h2.8v2.5h-2.8zM149.8 147h2v2.5h-2zM179.8 146.8h2.7v2.4h-2.7zM219.1 147.4h3.1v2.4h-3.1zM233.8 147.5h2.8v3h-2.8zM247.3 147.8h3.5v2.7h-3.5zM328.3 146.9h3.4v2.2h-3.4zM-3.7 149.4h3.2v3.1h-3.2zM11.2 148.5h2.6v2.9h-2.6zM68.1 149.6h3.6v2.3h-3.6zM88.8 149.1h3.7v1.8h-3.7zM95.3 148.6h3.2v2.4h-3.2zM174.6 149.3h2.9v2.8h-2.9zM180 148.7h2v2.8h-2zM188.7 148.5h1.6v2.7h-1.6zM205.8 148.5h2.2v2.5h-2.2zM254.2 149.1h2.6v2.2h-2.6zM257.1 148.9h3.4v2.1h-3.4zM34.8 150.7h2.4v2.1h-2.4zM47 150.5h3.2v2.5h-3.2zM71 150.6h3.1v2.1h-3.1zM89.4 151.4h1.6v2.6h-1.6zM91 150.9h4v2h-4zM101.6 150.8h3v2.7h-3zM111.2 151.4h3.4v2.9h-3.4zM134.7 150.6h1.8v1.5h-1.8zM172.5 150.7h3.7v2.6h-3.7zM220.5 151.4h1.9v2.1h-1.9zM227.2 150.7h2.8v2.5h-2.8zM284.7 151.2h2.3v1.8h-2.3zM4.9 152.3h2.9v2.7h-2.9zM8.3 152.3h3v2.9h-3zM54.4 153.1h3.7v2.8h-3.7zM165.8 153h2.3v2.8h-2.3zM194.8 152.5h4.1v2h-4.1zM207.5 152.9h2.2v2.5h-2.2zM219.4 152.7h2.2v2.1h-2.2zM324.1 152.2h2.2v2.4h-2.2zM326.4 153.1h1.9v2.9h-1.9zM6.3 154.4h3.4v2.9h-3.4zM10 154.6h1.8v2.6h-1.8zM16.8 154.4h4v1.6h-4zM48 155.1h3.2v2.5h-3.2zM97.6 154.6h2.1v2.2h-2.1zM115.4 154.2h2.1v2h-2.1zM155.7 154.9h3.7v2.4h-3.7zM176.7 154.7h4.2v2.1h-4.2zM221.1 154.3h4v2.5h-4zM55.2 156.2h4.3v2h-4.3zM114.2 156h2.2v3.3h-2.2zM119.4 156.9h2v3.1h-2zM124.2 156.6h4.4v3.4h-4.4zM157.8 156.4h4v2.3h-4zM173 156.2h3.8v2h-3.8zM232.8 156.9h4v3.4h-4zM275.8 156.4h2.3v2.9h-2.3zM316.6 156.8h4.3v3.3h-4.3zM4.6 158.1h3.5v3.6h-3.5zM15.3 158.5h2.2v2.1h-2.2zM65.9 159h4.5v1.8h-4.5zM97.5 158.4h2.8v3.1h-2.8zM116.5 158h2.8v2.3h-2.8zM119.8 157.9h2.4v3.2h-2.4zM122.4 158.3h4.5v3.2h-4.5zM140.9 159h2.2v2.3h-2.2zM176.7 158.1h3.6v1.8h-3.6zM180.9 158.7h3.7v3.4h-3.7zM219.8 158.6h2.2v2.5h-2.2zM232.5 157.8h2v2.4h-2zM308.3 158.9h2.1v3.5h-2.1zM314.2 158.4h3.5v2.6h-3.5zM326.3 158.8h2.5v3.1h-2.5zM75.3 160.7h2.8v2h-2.8zM91.4 160.5h3.5v3.3h-3.5zM136.8 161h2v3.3h-2zM139.3 160.8h1.9v2.1h-1.9zM152.3 160.7h2.9v2.9h-2.9zM164.9 161h4.3v2.5h-4.3zM182.4 160.5h4v3h-4zM282.5 160.9h2.3v3.1h-2.3zM-2.7 162.9h3.6v2.7h-3.6zM123.1 162.4h4v3.6h-4zM146.4 162.1h3.3v2.9h-3.3zM177 162.7h3.4v2.6h-3.4zM197.9 162.3h4.6v3.7h-4.6zM203 162.8h2.1v2.3h-2.1zM215.2 163.1h2.9v2.9h-2.9zM233.7 162.1h3.7v3.5h-3.7zM237.5 162.9h3.2v2.1h-3.2zM253.9 162.2h3.9v2.7h-3.9zM316.6 162.1h4.4v2.1h-4.4zM8.8 164.6h3.6v3.5h-3.6zM20.6 164.3h3.8v2h-3.8zM39.6 164.9h4.7v2.5h-4.7zM48.6 164.9h2.5v2.7h-2.5zM188 165h2.8v3.1h-2.8zM229 165.2h4.1v2.3h-4.1zM255.8 164.2h3.8v2h-3.8zM289.3 164.4h4.8v2.5h-4.8zM298.2 164.5h4.6v3.6h-4.6zM303.6 165h2.3v2.5h-2.3zM109.5 166.8h3.6v1.9h-3.6zM169.9 167.1h2.4v3.6h-2.4zM174.8 167.2h2.3v3.4h-2.3zM224.1 166.9h3.5v2.6h-3.5zM254.5 167.2h4.7v3.6h-4.7zM11 169.6h4.7v2.5h-4.7zM131.2 169.3h2.8v2.5h-2.8zM137.7 169h4.4v3.8h-4.4zM142.6 169.5h3.1v2.1h-3.1zM150.5 169.4h2.2v3.4h-2.2zM196.1 169.5h4.5v3.4h-4.5zM230 169.7h2.2v3.2h-2.2zM232.3 169.4h3.2v3.9h-3.2zM251 169.3h4.5v3.4h-4.5zM269.3 169h2.7v2.2h-2.7zM3.7 171.6h4.8v3.6h-4.8zM11.6 172.1h3.3v2.9h-3.3zM18.5 171.2h2.9v2.1h-2.9zM86.4 171.8h2.5v3h-2.5zM98.1 171.2h2.8v2.5h-2.8zM111.2 171.6h4.7v2.1h-4.7zM196.9 171.5h3.5v3.5h-3.5zM26.1 174.1h4.9v3.4h-4.9zM57.4 173.7h5.3v3.8h-5.3zM78.9 173.8h2.3v2.9h-2.3zM107.5 173.7h2.8v3.5h-2.8zM134.6 173.8h4.5v4.3h-4.5zM156.6 173.5h5.3v3.4h-5.3zM202.3 174h3.1v3.2h-3.1zM7.7 176h2.9v2.1h-2.9zM31.1 176h5.2v3.9h-5.2zM49 176.3h4.9v2.7h-4.9zM103.6 176.5h2.9v3.1h-2.9zM180.5 176.1h3v3.8h-3zM206.2 177.1h5.3v4.2h-5.3zM294.6 176.6h5.1v3.5h-5.1zM40 179.1h4.7v3h-4.7zM88.4 179.5h4.3v3.3h-4.3zM93.7 179.2h2.8v4.7h-2.8zM121.3 178.7h5.7v2.5h-5.7zM298.7 179.6h4.5v4.4h-4.5zM16 181.7h2.9v2.5h-2.9zM26.5 181.3h2.5v4.4h-2.5zM35.6 182h5.3v4.1h-5.3zM46.2 181.5h5.9v4.5h-5.9zM61.4 181.5h4.9v4h-4.9zM146.9 181.9h3.4v3.8h-3.4zM283.2 182.1h2.8v4.5h-2.8zM25.6 184.3h3.8v4.4h-3.8zM29.9 184.1h3.3v3.5h-3.3zM89.7 184.9h4.6v3.3h-4.6zM144.3 184.4h3.4v4.5h-3.4zM160.4 184.9h5.1v3h-5.1zM245.4 184.8h5.6v3.3h-5.6zM267.6 184.3h2.7v4.2h-2.7zM270.6 185h4.1v3.7h-4.1z"/>
<path fill="#d0ccb8" d="M202.7 131.8h1.9v1.8h-1.9zM118.9 135h2.3v2.1h-2.3zM125.2 138h1.5v2.4h-1.5zM156.6 137.6h3v2.4h-3zM185.9 138.1h1.5v2.1h-1.5zM54 139.4h2v1.5h-2zM120 140.7h2.5v2.6h-2.5zM159.7 141.4h3.3v1.3h-3.3zM71.2 142.7h3.3v2.3h-3.3zM249.2 142.2h1.4v2.2h-1.4zM8.1 143.8h3.2v1.6h-3.2zM127.8 143.7h2.4v2.5h-2.4zM267.7 143.8h1.5v2h-1.5zM285.5 143.5h3.2v1.5h-3.2zM307.7 144.1h1.7v2h-1.7zM70.3 147.4h3.4v1.6h-3.4zM96.6 147h3.3v2.3h-3.3zM251.6 147.4h1.8v1.6h-1.8zM263.4 147h2.7v1.7h-2.7zM75.8 149.6h2.6v2.2h-2.6zM92.8 149.6h2.1v2.7h-2.1zM198.3 148.6h3.3v2.4h-3.3zM211.4 149.5h3.1v2.1h-3.1zM313.8 148.9h3.4v1.9h-3.4zM7.5 150.3h2.3v2.1h-2.3zM43.9 150.6h3v1.9h-3zM298.3 150.2h4v1.6h-4zM311.8 150.5h4v2.2h-4zM15.9 152.2h2.1v2.6h-2.1zM215.6 153h3.6v2.7h-3.6zM243.9 153.1h3.6v2.2h-3.6zM233.8 154.4h4.2v1.9h-4.2zM277.6 153.9h4.2v1.9h-4.2zM303.5 154.2h2.9v2.3h-2.9zM15.2 156.7h4.4v3.5h-4.4zM43.5 156.2h3v2.1h-3zM64 156.8h4.4v1.9h-4.4zM68.9 156.3h4.4v2.3h-4.4zM73.8 156.6h3.7v2.8h-3.7zM188 156.1h4.4v1.7h-4.4zM220.4 155.8h2.6v2.5h-2.6zM229.2 156h3.6v2.2h-3.6zM313.6 156.5h2.8v2.8h-2.8zM326.7 156.5h2.5v1.7h-2.5zM10.8 158.2h3.9v3h-3.9zM54.3 158h2.2v3.1h-2.2zM60.6 157.8h1.9v3.1h-1.9zM318.1 158.4h4.1v2.3h-4.1zM11.1 160.6h3.9v2.6h-3.9zM212.3 161h3.4v2.9h-3.4zM220.5 160.7h4.7v2.7h-4.7zM246.1 160.4h2.5v3h-2.5zM322.5 160.6h2.4v3.1h-2.4zM6.1 162.6h3.9v1.8h-3.9zM36.3 162.3h3.1v2.9h-3.1zM60.5 162.3h4.7v2.4h-4.7zM140.9 162.5h3.1v3.1h-3.1zM208 162.7h3.6v2.3h-3.6zM271.1 162.9h3v2.2h-3zM-0.9 165.3h3.7v3.7h-3.7zM18.3 164.9h2.4v2.8h-2.4zM59.8 164.7h3.6v3.2h-3.6zM78.1 164.6h3.8v2.8h-3.8zM129.7 164.9h2.7v3.1h-2.7zM161.2 165.1h4.5v2.2h-4.5zM86.6 166.7h4v3.9h-4zM217.3 167.4h4v3.7h-4zM280 167.2h4.5v3.8h-4.5zM84.1 169.8h5.3v4.1h-5.3zM89.2 169.6h3.1v2.2h-3.1zM105.4 169.7h3.2v3.4h-3.2zM134.6 168.7h3.1v2.4h-3.1zM245.7 169.5h4.7v2.3h-4.7zM32.1 172.2h3.2v3.1h-3.2zM47.9 171.1h2.5v2.4h-2.5zM64.3 171.4h4.4v4.1h-4.4zM74.2 171.1h3.6v2.8h-3.6zM81.4 172h4.4v2.1h-4.4zM134 171.7h3.9v3.9h-3.9zM203.3 171.5h4v4.1h-4zM208 171.8h3.5v4.2h-3.5zM32.1 174.5h4.8v3.9h-4.8zM90.7 173.8h4.1v3.4h-4.1zM125.4 173.7h5.3v2.8h-5.3zM146.2 173.9h4.3v3.1h-4.3zM288.4 173.7h4.7v2.1h-4.7zM180.2 179.2h2.8v2.2h-2.8zM215.5 179h4.1v4.4h-4.1zM41.8 181.7h4.2v3.9h-4.2zM192.7 181.6h4.5v4h-4.5zM324.4 181.3h3.9v2.3h-3.9zM3.6 184h3.7v3.3h-3.7zM19.5 184.2h5v3.9h-5zM177.7 184.5h5.9v2.8h-5.9zM264.6 185.1h2.7v3.7h-2.7zM306.6 184.4h5.7v3.9h-5.7zM312.8 184.1h3.1v3.5h-3.1z"/>
<path fill="#504838" d="M227.8 131h1.9v1.1h-1.9zM64.1 133h2.7v1.9h-2.7zM113.2 133.3h1.8v1.9h-1.8zM114.9 133.8h2.5v1.3h-2.5zM100.5 136.3h1.2v1.6h-1.2zM4.5 138.5h1.6v1.6h-1.6zM298.3 138.1h1.4v1.6h-1.4zM22.1 139.3h1.7v1.6h-1.7zM194.7 139.8h3v2.3h-3zM65.9 140.6h3.1v1.8h-3.1zM83.6 140.5h2v1.3h-2zM141 141.2h2.6v1.3h-2.6zM172.4 140.7h2.4v2.1h-2.4zM248.7 141.4h2.3v1.5h-2.3zM16.6 142.5h3.4v1.9h-3.4zM30.1 145.4h1.7v2.6h-1.7zM31.8 146.2h1.8v2.7h-1.8zM144.1 145.6h2.8v2.6h-2.8zM157.3 145.8h3.4v2h-3.4zM191.3 145.6h2.2v1.7h-2.2zM209.6 145.8h1.8v2.7h-1.8zM221.9 146.1h1.7v1.9h-1.7zM256.1 146.1h2.3v1.6h-2.3zM290.1 145.9h1.8v1.9h-1.8zM326.8 145.5h2.4v1.8h-2.4zM131.8 146.9h2.8v3h-2.8zM282.9 146.8h3.5v1.5h-3.5zM39.4 148.5h2v1.8h-2zM64.5 148.9h3.6v1.5h-3.6zM113.5 148.8h1.9v2.6h-1.9zM117.9 149.3h1.7v2.7h-1.7zM277.9 148.5h3v2.4h-3zM287.1 148.7h1.9v2.7h-1.9zM22.4 151.1h2.8v1.6h-2.8zM115.3 150.7h2.3v3h-2.3zM176.8 151.1h1.7v2.1h-1.7zM194.2 151.3h2.1v2.5h-2.1zM205.3 151.1h2.2v2.2h-2.2zM247.8 150.3h2.2v2.9h-2.2zM324.9 151.3h3.9v3.1h-3.9zM26.5 152.4h3.8v2.7h-3.8zM94.2 152.2h3.2v1.9h-3.2zM97.9 153h2v2.1h-2zM209.6 152.6h2.1v3.2h-2.1zM101.8 154.8h2.7v1.9h-2.7zM140.3 154.8h3.5v1.7h-3.5zM213.3 154.4h2.5v3.1h-2.5zM241.1 154.6h2.7v2.3h-2.7zM270.2 155h3v2.4h-3zM11.1 156.3h3.8v2.2h-3.8zM171 156h1.9v3.3h-1.9zM76.3 157.9h4.3v2.4h-4.3zM146.3 158.8h2v3h-2zM300.4 158.8h2.8v3.3h-2.8zM78.1 161h2.7v1.8h-2.7zM232 160.6h4.1v1.8h-4.1zM299.3 160.4h2.9v2.6h-2.9zM302.5 160.4h2v1.9h-2zM135.6 162.9h2.3v1.8h-2.3zM137.8 162.9h2.5v3.7h-2.5zM184.4 162.6h3.4v1.8h-3.4zM3.3 164.7h4.8v2.4h-4.8zM146.6 164.5h2.5v2.3h-2.5zM157.4 164.8h3.4v2.5h-3.4zM259.5 165.3h2.4v3.3h-2.4zM272.4 164.9h4.3v3.7h-4.3zM326.3 165.1h4.8v3.1h-4.8zM4.4 167.4h3v4h-3zM197 167h3.2v2.7h-3.2zM247.2 167.1h3.2v3.1h-3.2zM303.6 166.6h3.4v2.6h-3.4zM318 166.8h3.7v3.8h-3.7zM-2.9 169.4h3.5v2.3h-3.5zM295.4 168.7h5.1v2.9h-5.1zM234.9 171.6h4.6v3.6h-4.6zM87.9 174.1h2.6v3.9h-2.6zM235.6 173.9h2.7v4.3h-2.7zM257.5 174h4.1v2.1h-4.1zM273.2 173.7h2.9v3h-2.9zM323.3 174.4h5.5v2.8h-5.5zM329.9 173.8h3.5v2.9h-3.5zM16.5 176.4h5.1v3.9h-5.1zM252.1 176.7h5.8v3.3h-5.8zM284.2 176.7h4.7v4.4h-4.7zM272.1 178.9h5.7v4.5h-5.7zM67.3 181.8h3.3v3.3h-3.3zM208.6 182.3h3.2v4.1h-3.2zM218.5 181.8h5.1v3.6h-5.1zM63.9 184.8h5.6v5h-5.6zM154.3 184.1h5.6v4.5h-5.6zM192.7 184h4.8v3.7h-4.8zM299.1 184.7h6.1v4.5h-6.1z"/>
<path fill="#48583a" d="M4.2 133h1.5v1.9h-1.5zM221.7 132.9h1.1v1.7h-1.1zM164.8 135.3h2.8v1.4h-2.8zM267.7 135.8h2.6v1.9h-2.6zM160.4 136.2h1.8v2.1h-1.8zM37.3 138.5h2.4v2h-2.4zM266.4 138.2h2.3v1.2h-2.3zM275.5 138.1h2.3v2h-2.3zM25.9 139.6h2.1v1.5h-2.1zM231.9 139.5h1.4v2.5h-1.4zM101.5 141.2h1.7v1.9h-1.7zM128.4 142.6h3.3v2.5h-3.3zM204 142.2h1.7v1.7h-1.7zM42.2 144.5h2.6v1.6h-2.6zM83.9 144h3.1v2.8h-3.1zM222.3 144.2h2.4v1.9h-2.4zM12.8 145.4h3.6v1.5h-3.6zM108.4 147.3h3.6v2.8h-3.6zM177.1 146.9h2.5v1.8h-2.5zM185.8 147.6h2.9v3h-2.9zM216.3 147.5h2.4v2.5h-2.4zM261 147.9h2.2v2.6h-2.2zM292.5 147.7h1.7v1.6h-1.7zM32.2 149h3.1v1.7h-3.1zM55 149h2.8v2.7h-2.8zM58.1 148.6h3v2h-3zM110.9 149.1h2.6v2h-2.6zM119.9 149.5h2.5v2.1h-2.5zM283.8 148.9h3.1v2.6h-3.1zM299.7 149.3h2.7v2.5h-2.7zM132.2 151.4h2.1v2.5h-2.1zM186.1 150.6h3.8v3h-3.8zM209.9 150.5h3.1v2.6h-3.1zM236.4 150.6h3.7v2h-3.7zM261.1 150.3h1.9v2.3h-1.9zM266.7 150.4h1.7v1.7h-1.7zM180.7 153.1h2.1v2.7h-2.1zM328.4 152.7h2.4v1.6h-2.4zM73.4 154.5h3.9v2h-3.9zM134.4 155h2.5v2h-2.5zM183.6 154.7h2.6v2.2h-2.6zM190.3 155h2.8v2.9h-2.8zM198.2 155h2.1v2h-2.1zM244 154.6h2.4v2.1h-2.4zM28 156h2.2v2.5h-2.2zM43.4 158.8h3.1v2.5h-3.1zM187.8 158.4h4.6v2.4h-4.6zM205.5 158.3h4.1v3h-4.1zM252.4 158.2h2.5v3.5h-2.5zM34.5 160.6h3.3v3.7h-3.3zM57 162h2.9v2h-2.9zM154.1 163.1h3.6v1.9h-3.6zM165.2 162h4.3v2h-4.3zM218 162.1h2.2v2.9h-2.2zM240.9 162.8h4.6v3.7h-4.6zM67.8 164.5h2.8v2.8h-2.8zM109.8 164.5h4.7v2.8h-4.7zM241.7 164.1h3.6v2.6h-3.6zM262.1 164.1h2.5v2h-2.5zM37.6 166.6h3.8v2.9h-3.8zM57.3 167.5h4.5v2.4h-4.5zM75 166.7h5.2v3.8h-5.2zM177 166.5h3.9v4h-3.9zM242.9 167.4h4v3h-4zM288.2 167h3.7v3.7h-3.7zM47.6 168.7h3.3v4.1h-3.3zM94.6 171.5h3.7v2.5h-3.7zM116.5 171.1h2.3v3.3h-2.3zM159.1 171.7h4.5v2.6h-4.5zM194.2 172.2h2.5v2.1h-2.5zM200.7 171.8h2.5v3.1h-2.5zM212 171.8h3v2.9h-3zM229.6 171.4h5.2v3.7h-5.2zM259 171.6h2.4v2.6h-2.4zM271.3 171.7h3v3.9h-3zM311 171.7h2.8v4.1h-2.8zM140.2 174.6h5v4.2h-5zM218.1 173.7h3.2v3.7h-3.2zM221.7 174h2.4v3.2h-2.4zM282.3 173.5h5.5v2.6h-5.5zM318.8 174.4h4.1v3.1h-4.1zM78.1 176h4.2v2.5h-4.2zM198 176h5.1v3.8h-5.1zM326.5 177h5.6v2.5h-5.6zM53.4 179.6h3.6v3.4h-3.6zM103.5 179.5h5.1v2.8h-5.1zM127.5 179.2h3.2v2.2h-3.2zM200.9 178.8h4.1v3h-4.1zM70.7 182.3h4.4v3.8h-4.4zM123.4 181.6h4.7v2.6h-4.7zM321.2 181.8h2.7v4.3h-2.7zM13.2 184.8h5.3v4h-5.3zM289.9 184h3.6v3h-3.6zM315.9 184.9h5.2v2.6h-5.2z"/>
<path fill="#8c8470" d="M41 132.6h1.6v1.1h-1.6zM324.5 134.5h1.6v2h-1.6zM195 135.1h1.9v1.2h-1.9zM30.5 138.1h1.5v2.5h-1.5zM101.6 138.3h1.7v2.2h-1.7zM240 138h1.5v2h-1.5zM241.7 138.3h1.5v2.1h-1.5zM329.8 138.1h2v2h-2zM102.4 139.4h3.1v2.2h-3.1zM10.7 141.2h1.5v2.1h-1.5zM139.9 142h3.4v2.6h-3.4zM146.9 142.4h2v1.4h-2zM162.5 142.6h1.7v2.7h-1.7zM271.6 142.1h2.7v1.8h-2.7zM65.9 144.6h1.5v2.8h-1.5zM193.1 144.1h3.2v2.6h-3.2zM258.6 144.4h3.3v1.6h-3.3zM281.7 143.9h1.8v1.5h-1.8zM243.1 145.5h3.3v2.9h-3.3zM170.1 147.5h3.4v3h-3.4zM28.7 148.9h3.1v1.5h-3.1zM115.4 148.7h2.4v1.5h-2.4zM155.7 148.7h1.8v1.7h-1.8zM13.1 150.3h3.4v2.6h-3.4zM56.1 151h3v1.8h-3zM59.4 151h2.6v1.6h-2.6zM199.5 150.5h2.8v1.8h-2.8zM258.7 151.1h2.4v2.3h-2.4zM290.4 150.6h2.8v1.7h-2.8zM73 152.3h3.9v2.4h-3.9zM129.6 152.1h3.8v2.8h-3.8zM239.9 153.2h3.7v3.1h-3.7zM121.6 154.6h2.4v3.2h-2.4zM171.7 154.2h2.9v3.2h-2.9zM37.2 156.9h2.3v2.5h-2.3zM90.4 156.7h4.1v2.1h-4.1zM140.6 156h3.8v3.1h-3.8zM150.9 156.2h2.5v2.9h-2.5zM185.1 156.5h2.6v2.4h-2.6zM281.1 156.7h2.3v1.9h-2.3zM21 158.4h2v2.7h-2zM109.3 158.3h2.7v3h-2.7zM239.5 158.9h2.1v2.7h-2.1zM241.8 158.9h3.9v2.1h-3.9zM287 159h4.3v3.6h-4.3zM310.4 157.8h3.7v2.7h-3.7zM329.3 158.2h3.9v2.3h-3.9zM23.3 160.8h4.6v1.8h-4.6zM48.8 160.7h4.3v2.1h-4.3zM177.9 160.3h4.7v3.4h-4.7zM22.8 162.5h3.7v1.8h-3.7zM76.4 162.1h3v2.6h-3zM79.4 162.5h4.1v2.5h-4.1zM267.3 162.7h3.2v3.3h-3.2zM277.3 162.6h4v2.9h-4zM285.5 162.1h4.5v2.7h-4.5zM306.1 163h3.1v3.2h-3.1zM54.3 164.8h3v1.9h-3zM203.7 165.2h4.1v2.5h-4.1zM208.5 164.9h4.8v3.1h-4.8zM-2.4 167h2.8v3.5h-2.8zM48.7 166.9h4.7v3.7h-4.7zM80.1 167.4h3.5v3.5h-3.5zM99.9 166.9h4v3.4h-4zM141.8 167.3h4.5v4h-4.5zM214.5 167.4h2.8v2.5h-2.8zM307 166.4h5v2h-5zM64.6 169h3v3.9h-3zM101.9 169.2h2.9v2.5h-2.9zM265.2 169.6h4v3.5h-4zM300.6 169.3h4.4v2.6h-4.4zM8.7 171.5h2.6v2.1h-2.6zM155.3 172.1h3.4v4.2h-3.4zM278.8 171.1h3.6v2.8h-3.6zM191.4 174h3.2v3.7h-3.2zM224.4 174.1h4.2v3.4h-4.2zM37.4 176.8h5.2v3.9h-5.2zM74.4 176h3.3v2.3h-3.3zM86.2 177h3.9v3.4h-3.9zM-3.4 178.7h5.6v4h-5.6zM10.5 178.7h2.9v3.1h-2.9zM13.3 179.6h3.9v4h-3.9zM261.5 179h3.9v3.9h-3.9zM284.5 179.1h5.4v4.4h-5.4zM78.4 181.2h5.5v3.3h-5.5zM99 182.2h3v2.4h-3zM150.6 181.3h4v2.9h-4zM78.5 184.6h6.5v2.8h-6.5z"/>
<path fill="#a8a080" d="M49.1 133.2h1.3v1.6h-1.3zM249.8 133h1.6v1.2h-1.6zM70.4 134.4h1.2v2h-1.2zM328.4 135.8h1.8v1.8h-1.8zM283 136.9h2.6v2h-2.6zM174.8 139.2h2v1.2h-2zM180.1 139.3h1.5v1.9h-1.5zM40 141.3h2.9v2.6h-2.9zM89.4 140.9h3.3v2h-3.3zM200 140.7h2.6v2.6h-2.6zM161 143.1h1.5v1.5h-1.5zM227.6 141.9h3v1.9h-3zM-3.1 144.1h2.3v2.1h-2.3zM139.7 146.1h3.6v2.8h-3.6zM-2.5 147.6h2.1v1.9h-2.1zM50.5 146.9h1.9v2.4h-1.9zM103.2 147h1.6v2.5h-1.6zM159.8 147.8h3.4v2.8h-3.4zM195.9 147.1h3.5v2.9h-3.5zM209.5 146.8h3.4v2.1h-3.4zM237 146.8h3.3v2.7h-3.3zM297.6 146.8h3.2v2h-3.2zM15.9 149.4h3.6v2.2h-3.6zM84.7 149.1h3.9v2.8h-3.9zM-2.2 150.7h2.3v2.4h-2.3zM25.5 150.4h4v2.8h-4zM65.2 150.7h2.9v1.5h-2.9zM86 151.1h3v2.8h-3zM117.8 150.4h2v1.6h-2zM119.8 150.8h1.7v2.8h-1.7zM213.4 151.3h2.6v2.8h-2.6zM275 150.6h3.6v2.1h-3.6zM315.7 150.6h4v2h-4zM51.6 152.1h2.6v2h-2.6zM100 152.3h4.1v3.1h-4.1zM141.4 152.8h2.7v2.8h-2.7zM146.5 152.7h2.9v2.1h-2.9zM310.2 152.3h3.2v3.2h-3.2zM12.2 154.6h4.2v2.7h-4.2zM46 155.1h2.1v2.6h-2.1zM78 155h2.1v3.4h-2.1zM193.4 153.9h1.9v3.1h-1.9zM195.6 154.6h2.5v3.3h-2.5zM-3.3 156.5h2.2v3.5h-2.2zM-0.6 156.8h3.6v1.7h-3.6zM252.1 157h1.9v3.1h-1.9zM28.2 158.5h2.9v3h-2.9zM131.3 158.6h2.8v2.8h-2.8zM279.6 157.9h4.2v2.1h-4.2zM306.2 158h1.9v2.5h-1.9zM87.4 160.4h3.8v3.2h-3.8zM95.5 160.8h2.3v3.3h-2.3zM155.8 161h2.7v1.8h-2.7zM26.7 162.8h3.1v3.2h-3.1zM281.1 162.4h3.9v2.9h-3.9zM25 165.2h4.7v2.4h-4.7zM34.9 165.2h4.6v2.5h-4.6zM85.3 164.8h4.9v3.3h-4.9zM157.9 167.5h2.2v3.3h-2.2zM263 167.3h3.4v3.3h-3.4zM313.2 166.8h5.1v1.9h-5.1zM56.4 168.8h4.3v4.1h-4.3zM241.8 169.7h3.7v3.8h-3.7zM259.9 169.6h5.2v3.6h-5.2zM167.7 173.9h5.2v2.3h-5.2zM276.7 173.7h5.2v2.6h-5.2zM297.3 174.4h4.9v4.1h-4.9zM127.5 176.9h5.9v2.7h-5.9zM280.6 176.5h3.3v4.2h-3.3zM49.3 179.7h4v4.1h-4zM57 178.7h5.4v2.7h-5.4zM109.3 179.4h5.6v2.4h-5.6zM116 179.2h5.3v3h-5.3zM143 179.4h4.8v3.7h-4.8zM171.1 178.6h2.6v3.3h-2.6zM248.8 179.6h3.6v4.7h-3.6zM11.3 182.2h4.3v2.5h-4.3zM93.9 181.2h4.8v2.7h-4.8zM128.7 181.8h3.1v3.5h-3.1zM300.6 181.4h6.2v4h-6.2zM69.9 185h2.6v3h-2.6zM72.7 184.7h5.8v3.4h-5.8zM147.8 184.4h6.5v2.4h-6.5zM205.3 184.4h4.9v3.9h-4.9zM210.5 184.4h4.1v3.9h-4.1z"/>
<path fill="#2c2820" d="M60.7 132.9h1.7v2.1h-1.7zM304.8 133.8h1.6v2h-1.6zM32.2 135.1h1.5v2.1h-1.5zM106.2 135.8h1.9v2h-1.9zM172.3 134.8h2.7v1.4h-2.7zM221.9 135.1h2v1.9h-2zM108.4 138.1h2.5v1.6h-2.5zM127 138.7h2.5v2.3h-2.5zM129.5 138h2.6v1.8h-2.6zM159.8 138.2h1.9v2.3h-1.9zM217.7 137.7h2.2v1.9h-2.2zM260.8 138.2h1.5v1.5h-1.5zM268.7 138.1h1.7v2h-1.7zM176.9 139.2h3v1.8h-3zM57.4 140.8h3v1.4h-3zM81.4 141.5h2.2v1.9h-2.2zM85.9 140.7h1.7v1.5h-1.7zM193.7 141.3h1.7v1.3h-1.7zM205.1 140.6h1.6v2.7h-1.6zM213.6 140.9h3.3v2.3h-3.3zM242.5 141.6h3v1.8h-3zM274.6 140.7h1.5v1.3h-1.5zM283 141h2.8v2.3h-2.8zM292.3 140.6h1.8v2.5h-1.8zM298.9 140.5h2.3v2.5h-2.3zM4.2 142.3h1.8v1.4h-1.8zM96.7 142.7h3.3v2.4h-3.3zM111.4 143.1h2.1v2.3h-2.1zM274.8 142.1h3.4v1.5h-3.4zM312.6 142.9h1.7v1.4h-1.7zM139.1 144.6h3.2v2h-3.2zM61.6 145.1h2.6v1.6h-2.6zM125 145.5h3.6v2.3h-3.6zM147 145.6h1.9v1.7h-1.9zM292.1 145.8h3.4v2.3h-3.4zM8.2 146.9h3.7v1.8h-3.7zM14.9 147.6h3.7v2.4h-3.7zM67.1 146.9h3.1v2.6h-3.1zM163.8 146.9h2.9v2.5h-2.9zM167.1 147.1h3v2.9h-3zM224.7 147.3h3.3v2.4h-3.3zM240.1 147.9h1.8v2.9h-1.8zM287.2 147.5h2.9v2.7h-2.9zM318.2 146.8h2.6v1.7h-2.6zM82.4 149.3h2v3.1h-2zM132.4 148.7h3.3v1.5h-3.3zM135.9 149.3h2.6v2.2h-2.6zM141.6 148.5h2.7v3h-2.7zM160.7 149.3h3v2.4h-3zM201.9 149.1h3.8v2.2h-3.8zM208.2 148.7h1.6v3h-1.6zM217.5 148.6h2.6v2.8h-2.6zM249.7 148.9h1.6v2.6h-1.6zM271.3 149.4h3v2h-3zM317.7 148.6h3.2v2.1h-3.2zM0.6 150.4h2.4v2.9h-2.4zM39.7 150.7h2.3v1.8h-2.3zM50.4 150.4h2.3v1.6h-2.3zM80.9 151h3v3.1h-3zM98 150.7h3.7v1.6h-3.7zM123.7 150.8h3.5v1.6h-3.5zM162.7 151.2h2.8v2.6h-2.8zM166.1 150.5h2.9v2.3h-2.9zM181.1 151.2h1.7v3.1h-1.7zM270.7 151.4h3.8v2.5h-3.8zM281.9 151.2h2.4v2.1h-2.4zM84.6 152.9h2.1v2.2h-2.1zM89.3 152.7h2.2v2h-2.2zM107.8 152.9h3.6v3h-3.6zM144.1 152.1h2v1.6h-2zM151.5 153.1h3.1v3.3h-3.1zM191.2 153.2h3.6v3.1h-3.6zM212.2 152.8h3.1v3.1h-3.1zM235.3 152.8h3.7v2.7h-3.7zM306.1 152.8h3.7v2.1h-3.7zM23.2 154.3h3.1v2.2h-3.1zM36.2 154.2h1.9v3.3h-1.9zM51.4 154.2h2.9v2.6h-2.9zM118 154.5h3.4v2.8h-3.4zM159.5 154.9h3.5v3.1h-3.5zM208.7 154.1h2.5v2.7h-2.5zM216.2 154.4h3.9v1.9h-3.9zM273.6 154.7h3.8v1.6h-3.8zM285.8 154.8h2.6v3.2h-2.6zM296.8 154.8h4.3v2.1h-4.3zM314.3 155.1h3.6v3.1h-3.6zM30.2 157h3.4v2.7h-3.4zM84.9 156.4h3.6v2.9h-3.6zM104.9 156.9h3.7v3h-3.7zM116.5 156.1h2.7v3.4h-2.7zM164.6 156.9h3.3v3.2h-3.3zM176.8 156.2h3.5v2.7h-3.5zM214.7 155.8h1.8v2.7h-1.8zM245.7 156.4h2.5v3h-2.5zM278 156.5h3.2v1.9h-3.2zM-2.8 158.6h4.4v2.2h-4.4zM93.1 158.9h3.7v2.3h-3.7zM134.6 158.2h3.7v3.1h-3.7zM138.3 158h2.6v2.5h-2.6zM153.2 158.1h3.9v3.4h-3.9zM184.5 158.1h3.1v3.3h-3.1zM195.2 157.9h2.3v1.9h-2.3zM-0.7 160.2h3.9v1.8h-3.9zM53.3 160.8h2.9v3.6h-2.9zM56.4 160.6h4.1v3h-4.1zM101.9 160.5h2.9v2.9h-2.9zM112.7 160.7h4.2v2.8h-4.2zM133 160.8h3.9v3.6h-3.9zM190.8 160h2.7v3.3h-2.7zM241.2 160h4.2v2.9h-4.2zM248.7 160.4h2.9v2.8h-2.9zM291.4 160.4h4.1v3.7h-4.1zM308.2 159.9h3.7v3.2h-3.7zM70.9 162.4h4.7v2.6h-4.7zM107.4 162.8h3.9v2.5h-3.9zM127.6 163.1h4.4v1.9h-4.4zM149.9 162.4h3.9v2.8h-3.9zM262.5 162.4h4.1v2.3h-4.1zM45.1 164.1h2.9v2.9h-2.9zM132.7 165.1h4.5v2.3h-4.5zM142.3 165.2h4.4v3.4h-4.4zM213.5 165h4.8v3.6h-4.8zM28.8 166.4h4.7v3.9h-4.7zM164.8 166.8h4.9v2.3h-4.9zM193.5 167.3h3v3.2h-3zM238.2 167.2h3.9v2.6h-3.9zM276.7 167h2.8v3.9h-2.8zM295.4 166.4h4v2.4h-4zM5.1 168.7h2.7v2.1h-2.7zM33.9 169.4h2.6v3.2h-2.6zM36.8 169h3.8v2.7h-3.8zM41.1 169.7h3v3.3h-3zM60.7 168.9h4.2v2.3h-4.2zM114.2 169.8h5.4v3.9h-5.4zM119.3 168.8h5.2v2h-5.2zM152.8 169h2.8v2.2h-2.8zM187 168.8h4v3.7h-4zM284.6 169.4h2.7v3.4h-2.7zM288 168.9h3v3.7h-3zM-3.9 171.6h4.3v3.2h-4.3zM0.5 172.1h3.2v2.6h-3.2zM40.5 171.4h4.1v4.2h-4.1zM138.1 172.2h5.1v4h-5.1zM149.4 171h5.1v3h-5.1zM182.4 171.1h3.1v2.9h-3.1zM191.8 172h2.3v2.7h-2.3zM245.4 172.1h4.4v2.5h-4.4zM306.5 171.9h4.7v2.1h-4.7zM11.1 174.3h4v3.7h-4zM183.8 174.6h2.8v4.4h-2.8zM213.8 174h3.5v2.7h-3.5zM54.2 176.1h4v4.5h-4zM90.5 177.1h3.1v3.7h-3.1zM99.4 176.2h3.6v2.9h-3.6zM113.8 176h4.8v2.5h-4.8zM168.9 176.9h3.4v2.7h-3.4zM203.4 176.5h2.7v4.5h-2.7zM218.2 176.3h4.7v4.5h-4.7zM225.5 176.7h5.5v3.4h-5.5zM273.9 176.7h5.7v3.9h-5.7zM2.5 179h2.9v4h-2.9zM68.6 179.6h2.9v2.7h-2.9zM85 179.6h2.7v3.4h-2.7zM131.1 179.7h3.8v3.3h-3.8zM177.5 179.5h2.5v2.3h-2.5zM197.8 179.3h2.9v2.3h-2.9zM230.9 179.3h6.1v2.6h-6.1zM252.3 179.7h4.3v4h-4.3zM265.9 178.9h3v2.8h-3zM281.1 178.8h2.9v3.3h-2.9zM-0 181.8h6.2v2.5h-6.2zM57.9 181.4h2.8v3h-2.8zM116 181.4h5.9v2.3h-5.9zM328.3 181.3h6v4.6h-6zM107.5 184.6h4.2v4.5h-4.2zM228 184.5h4.7v4h-4.7zM233.5 184.1h4.7v2.4h-4.7zM321 184.8h4.2v3.6h-4.2z"/>
<path fill="#a8a088" d="M135.2 133.1h2.7v1.2h-2.7zM310.8 133.1h2.2v1.7h-2.2zM291.1 133.5h1.4v2h-1.4zM182.3 135h2.2v1.6h-2.2zM200.1 135.9h1.5v2.2h-1.5zM313.6 135.2h1.7v1.7h-1.7zM307.1 140h2.4v2.3h-2.4zM45.6 140.9h2.1v2.4h-2.1zM60.4 141.3h2.2v1.4h-2.2zM307.9 141.6h3.2v1.9h-3.2zM22.3 142.9h1.7v1.9h-1.7zM79.8 143h2.2v1.9h-2.2zM158.8 143h2.2v1.8h-2.2zM197.5 142.5h3.1v1.9h-3.1zM108.2 144h3v1.8h-3zM120.7 144.3h3v2.8h-3zM165 143.8h1.5v2.4h-1.5zM4.4 145.1h3.6v1.4h-3.6zM282.8 145.9h3.6v1.9h-3.6zM44.3 147.7h2.2v1.7h-2.2zM242 147.4h2.4v2.4h-2.4zM274.3 147.2h1.8v2.7h-1.8zM52.1 149.3h2.7v1.6h-2.7zM157.6 148.6h2.7v2.5h-2.7zM163.8 148.9h1.7v1.9h-1.7zM209.8 149h1.6v2.8h-1.6zM214.5 149.2h2.7v2.1h-2.7zM302.5 149.4h2.5v2.2h-2.5zM321.4 149.5h3.5v2.3h-3.5zM104.8 151.2h2.7v2.5h-2.7zM207.6 150.8h2.3v2.3h-2.3zM244.5 151.1h2.9v2.8h-2.9zM264.9 150.3h1.9v1.6h-1.9zM309.5 150.8h2v1.6h-2zM45.3 152.6h2.5v2.6h-2.5zM58.8 152.7h3.3v2.1h-3.3zM134.2 152.2h4v2h-4zM183 152.4h3.8v2.5h-3.8zM203.9 152.9h3.5v1.7h-3.5zM221.7 152.7h2.8v2.5h-2.8zM254.6 153.1h3.5v3.2h-3.5zM287.3 152.4h3v2.5h-3zM321.2 152.6h2.5v2.8h-2.5zM41.5 154.9h4.1v2.1h-4.1zM67.2 154.2h3.5v2.9h-3.5zM308.7 155.1h2.8v3.2h-2.8zM148.1 156.9h2.8v3.2h-2.8zM296.4 156.1h4.1v1.9h-4.1zM1.9 158.8h2.5v3.6h-2.5zM80.6 158.7h4.3v2.8h-4.3zM157.5 158.4h3.5v3h-3.5zM166.1 158.4h3.2v2.2h-3.2zM274.1 158.7h2.4v2.4h-2.4zM126.6 160.8h1.9v3.6h-1.9zM145.5 160h2.3v2.9h-2.3zM304.8 160.7h3.2v2.9h-3.2zM317.5 160.3h4.4v2.7h-4.4zM83.7 163.1h2.8v3h-2.8zM89.8 162.4h2.4v3.2h-2.4zM144.1 162.7h2.2v2.5h-2.2zM12.6 164.6h5v1.8h-5zM57.2 165h2.5v2.1h-2.5zM117.9 164.6h2.6v2.4h-2.6zM198.8 164.3h4.2v2h-4.2zM219.2 164.5h2.5v3.8h-2.5zM281.4 164.5h3.2v2.7h-3.2zM294.6 165.3h3.2v3.3h-3.2zM62.9 166.8h4.2v2.9h-4.2zM83.5 167.3h3.1v3.8h-3.1zM96.6 166.4h3.1v2.7h-3.1zM117.9 167h3.5v3h-3.5zM146.3 166.6h2.7v3.5h-2.7zM160.4 167.1h4.2v2.4h-4.2zM200.8 167h3.1v2.6h-3.1zM221.2 166.8h2.9v3.2h-2.9zM324.9 167.1h2.8v2.6h-2.8zM327.5 167.5h2.8v3.9h-2.8zM1.4 168.8h3.5v3.3h-3.5zM44.2 169h3.1v3.7h-3.1zM67.8 169.8h3.5v2.1h-3.5zM166.5 168.8h4.9v2.4h-4.9zM171.6 168.8h3.2v3.4h-3.2zM223.6 169.7h5.3v4.2h-5.3zM235.7 169h2.5v2.5h-2.5zM144.4 171.8h4.3v3.1h-4.3zM301.4 171.7h4.1v2.3h-4.1zM19.7 174.3h5.4v3h-5.4zM63.1 173.6h4.3v3.9h-4.3zM130.9 174.2h3.3v2.8h-3.3zM162.3 174.4h2.4v2.2h-2.4zM313.6 174.4h4.9v3h-4.9zM183.9 176.5h2.9v3.1h-2.9zM262.3 176.1h5v4.5h-5zM204.9 178.8h5.7v2.4h-5.7zM6.4 181.4h4.5v3.4h-4.5zM51.9 181.7h4.8v2.7h-4.8zM75.1 182.2h2.9v3.7h-2.9zM296.5 181.6h3.5v3h-3.5zM124 184.3h4.6v4.4h-4.6zM220.4 184.1h3.7v4.1h-3.7zM325.6 184.2h4.6v3.8h-4.6z"/>
<path fill="#6c6450" d="M187.7 132.6h1.1v1.3h-1.1zM100.4 134.5h1.4v2h-1.4zM232.4 134.1h2.4v1.5h-2.4zM1.6 135.7h1.4v2.2h-1.4zM36 135.9h1.6v1.2h-1.6zM188.3 136.5h2.3v1.7h-2.3zM258.4 137.3h1.5v1.7h-1.5zM56.9 142h3.1v1.6h-3.1zM124.9 142.1h3.1v1.6h-3.1zM136 144.4h3.1v2.4h-3.1zM51.7 145.8h2v2.7h-2zM122.9 146.2h1.8v2.9h-1.8zM167.8 146h2.3v1.7h-2.3zM37 147.6h3.7v1.7h-3.7zM56.5 147.8h2.3v1.5h-2.3zM60.9 147h3.6v2.7h-3.6zM182.5 147.6h3.2v2.8h-3.2zM41.9 148.6h2.5v3h-2.5zM144.4 148.5h3v2.4h-3zM171.4 149.1h3.3v2.7h-3.3zM244 149.4h1.6v2.6h-1.6zM274.9 149.4h2.9v2h-2.9zM295.9 148.8h3.5v2.8h-3.5zM139.4 150.6h3.1v1.6h-3.1zM196.7 151.3h2.3v1.6h-2.3zM253.5 150.5h3.1v2h-3.1zM268.5 150.4h1.8v2.1h-1.8zM293.9 150.9h3.8v1.7h-3.8zM68.7 152.3h3.9v3.1h-3.9zM91.6 152.4h2.6v3.1h-2.6zM149.3 152.3h2.1v2.5h-2.1zM290.7 152.1h4v2.5h-4zM3.4 154.1h2.5v2.1h-2.5zM57 154.9h4.3v2.3h-4.3zM180.8 154.2h2.4v1.6h-2.4zM186.3 154.2h3.7v2.2h-3.7zM206.7 154.6h1.8v2h-1.8zM237.8 154.6h3.2v2.9h-3.2zM281.7 154.6h3.9v3.4h-3.9zM77.5 155.9h3.1v2h-3.1zM80.9 156.2h3.4v2.7h-3.4zM329.7 156.9h2.3v3.4h-2.3zM112.3 158.7h4v1.9h-4zM260.4 158h4.5v2.4h-4.5zM269.8 157.9h3.6v3.6h-3.6zM277 158.8h2.1v2.7h-2.1zM15.6 159.9h4.1v3.6h-4.1zM169.9 160.3h4.6v2.4h-4.6zM226.3 159.9h4.6v3.6h-4.6zM43.1 162.3h2.6v3.5h-2.6zM101.6 162.1h4.8v2.5h-4.8zM223.6 162.1h2.2v3.6h-2.2zM229.3 162.5h4.1v2.5h-4.1zM70.7 164.5h4.3v3.1h-4.3zM154.9 165.1h2.5v3.2h-2.5zM171.2 165h4.8v3.7h-4.8zM221.9 164.3h4v3.7h-4zM25 167.1h3.5v2.3h-3.5zM8.4 169.3h2.6v2.7h-2.6zM92.3 169.2h4.1v3.8h-4.1zM97 168.9h4.4v2.9h-4.4zM163.8 169.5h2.3v4h-2.3zM190.8 168.9h2.5v3.5h-2.5zM238.7 169.4h2.5v3.1h-2.5zM71.4 171.5h2.8v3.8h-2.8zM78 171.3h2.7v2.2h-2.7zM123.9 171.8h5.5v3.5h-5.5zM3.1 173.8h3.3v3.8h-3.3zM37.6 173.9h4.4v2.3h-4.4zM173.2 174h4.6v3.9h-4.6zM93.7 176.7h5.2v3.9h-5.2zM106.5 176.4h4.3v3.8h-4.3zM138.8 176.9h3v2.2h-3zM187.3 176.3h5.9v2.5h-5.9zM5.4 178.6h5.2v4.2h-5.2zM134.8 179.5h4.2v2.4h-4.2zM316.3 179.6h4v2.7h-4zM32.8 181.8h2.5v3.4h-2.5zM90.1 181.2h3.9v3.8h-3.9zM198.2 181.7h3.6v3.9h-3.6zM7.3 184.5h6.2v2.6h-6.2zM102.9 184.9h3.8v3.5h-3.8zM185 184.7h6.3v4.1h-6.3z"/>
<path fill="#686050" d="M227.4 132.2h1.9v1.1h-1.9zM37.9 135h2.7v1.3h-2.7zM169.9 135.3h2v2.2h-2zM170.9 139.1h1.9v2h-1.9zM12.5 140.9h1.9v1.5h-1.9zM26 141.4h2.5v1.3h-2.5zM37.6 141.3h1.9v2.6h-1.9zM253.4 141h1.6v1.9h-1.6zM296.8 141.2h2.2v2.5h-2.2zM60.6 143h1.5v2.8h-1.5zM119.5 142.7h1.7v1.9h-1.7zM136.8 142h3v2.7h-3zM222.2 142h1.9v2.6h-1.9zM37.7 144.4h2v2h-2zM76.4 143.7h1.9v1.7h-1.9zM130.8 144.3h1.8v2.5h-1.8zM186.8 143.7h3.6v2.3h-3.6zM269.5 144.3h2v2.4h-2zM30.3 146.9h2.1v2.8h-2.1zM34.7 147.4h2.3v3h-2.3zM89.9 147.7h2.6v2.6h-2.6zM115.3 147.8h1.7v1.5h-1.7zM121.8 147.3h2.1v2.2h-2.1zM158.1 147.3h1.6v1.8h-1.6zM188.7 147.5h3.7v1.8h-3.7zM205.5 147.4h3.7v1.8h-3.7zM222.8 147h1.6v2.1h-1.6zM255.6 146.8h1.6v2.7h-1.6zM301.5 147.9h2.5v2.4h-2.5zM306.2 147.2h2.6v2.7h-2.6zM323.1 147h1.6v2.2h-1.6zM44.3 149.4h2.6v2.8h-2.6zM46.9 149.1h1.8v2.8h-1.8zM182.3 149.3h3.4v3.1h-3.4zM237 149.4h3.2v2.7h-3.2zM280.9 149.4h2.7v2h-2.7zM169.4 150.6h2.8v2.8h-2.8zM190.4 150.3h3.9v2.3h-3.9zM329.4 151.1h2.6v1.6h-2.6zM22.8 152.3h3.4v3.1h-3.4zM280.7 152.1h2.6v3h-2.6zM316.6 152.8h4v2h-4zM33.6 154.1h2.1v1.7h-2.1zM38.6 153.9h3.1v2.4h-3.1zM62 154.7h2.4v2.8h-2.4zM80.1 154.9h1.9v3.2h-1.9zM91.3 155h2.8v2.1h-2.8zM107.1 154.9h3.1v3.3h-3.1zM226.1 154.2h3.8v2.8h-3.8zM253.7 154.6h2.8v2.9h-2.8zM256.7 154.4h3.3v2.6h-3.3zM95.2 156.8h4.1v3h-4.1zM108.8 156.1h2.9v2.5h-2.9zM129.1 156.3h2.1v2.7h-2.1zM131.5 156.3h4.4v1.8h-4.4zM153.7 156.1h3.8v2h-3.8zM261.3 156.3h4.2v3.3h-4.2zM266.5 156.9h4.1v3.1h-4.1zM23.4 158h3.9v2.9h-3.9zM62.8 158.5h3.2v3.5h-3.2zM194 160.6h4.7v2.5h-4.7zM13.9 162.3h3.6v2.4h-3.6zM66.3 162h4.7v3.8h-4.7zM112.3 162.5h2.6v3h-2.6zM173.7 163.1h3.1v2.3h-3.1zM220.5 162.7h3v2.2h-3zM63.4 164.2h4.2v3.6h-4.2zM91.6 167.4h4.9v3.6h-4.9zM273.9 167.1h2.5v3h-2.5zM299.7 167.1h3.1v3h-3.1zM125.2 169.3h5.1v3.4h-5.1zM160 168.7h3.2v2.7h-3.2zM255.3 169.8h4v2.6h-4zM279.5 169.1h4.2v2.2h-4.2zM22 172h3.6v2.3h-3.6zM45.5 171.3h2.5v3.8h-2.5zM50.5 171.7h2.8v2.6h-2.8zM53.4 171.4h4.8v3.4h-4.8zM225.5 171.9h4.1v2.2h-4.1zM250.7 171.9h4.4v2.5h-4.4zM266.9 171.7h4.6v3h-4.6zM81.5 174.3h5.4v2.8h-5.4zM262.2 174.1h4.4v3.8h-4.4zM303.2 173.6h2.6v3h-2.6zM118.8 176.6h3.4v3.1h-3.4zM194.1 176.7h3.2v3h-3.2zM222.8 176.6h2.5v4.4h-2.5zM24.4 178.6h3.9v2.2h-3.9zM139 179.7h4v4h-4zM157.3 179.4h3.5v3.1h-3.5zM167.8 179.1h3.4v2.3h-3.4zM174.1 179.1h3.5v4.6h-3.5zM294.1 179.4h4.1v4.5h-4.1zM85.2 181.6h4.1v4.1h-4.1zM102.6 182.2h3.8v4.4h-3.8zM128.7 184.2h6.2v3.2h-6.2z"/>
<path fill="#847c62" d="M264.5 132.3h1.2v1.5h-1.2zM36.4 133.5h2.6v1.8h-2.6zM126.9 134.2h1.8v1.4h-1.8zM168.9 133.8h1.6v2.2h-1.6zM61.2 135.5h1.5v1.1h-1.5zM97.9 136.4h2.4v2.1h-2.4zM167.6 138.4h1.9v2.3h-1.9zM286.1 138.4h3v1.5h-3zM177.7 141.4h2.3v1.4h-2.3zM239.8 140.9h2.5v2.3h-2.5zM285.8 141.5h3.2v1.8h-3.2zM121.2 142.9h2.1v2h-2.1zM154.2 142h2v2.7h-2zM29.2 144.3h2.2v2.2h-2.2zM224.8 143.9h3.2v1.8h-3.2zM81.2 146.2h1.9v1.5h-1.9zM263.1 145.4h3.1v2h-3.1zM5.8 147.1h2.5v1.8h-2.5zM46.9 147.4h3v1.7h-3zM140 147h2.6v2.3h-2.6zM279 147.1h3.3v1.7h-3.3zM26.5 149.1h1.8v2.5h-1.8zM107.4 149h3v2.7h-3zM148.1 149h3.2v2.1h-3.2zM227.7 149.2h3v2.4h-3zM288.9 148.7h2.1v2.4h-2.1zM307.7 149.6h2.9v1.5h-2.9zM78.2 150.5h2.7v2.6h-2.7zM240.7 151.4h3.7v2.1h-3.7zM30.5 152.9h2.4v2.5h-2.4zM32.9 153.1h3.4v3.3h-3.4zM62 152.2h2.7v1.6h-2.7zM112.1 152.3h3.3v1.7h-3.3zM177.5 152.3h3v2.7h-3zM199.6 152.7h3.6v2.5h-3.6zM272.3 152h4.1v2.5h-4.1zM26.7 154.3h3.1v2.8h-3.1zM94.4 154.9h3v2.2h-3zM137.1 154.8h3.2v2.7h-3.2zM249.7 153.9h3.3v3.3h-3.3zM263.6 154.7h3.2v1.9h-3.2zM306.4 153.9h2.2v3.3h-2.2zM3.8 156.5h2.4v3.1h-2.4zM33.6 156.2h3.4v2.3h-3.4zM197.4 155.9h4.1v3.4h-4.1zM202 156.2h3.1v3.1h-3.1zM205.9 156h2v1.9h-2zM226.7 156.6h2.1v3h-2.1zM256.5 156.2h4.3v1.7h-4.3zM305 157h3.9v2.2h-3.9zM104.2 158.3h4.4v2.5h-4.4zM127.3 159h3.6v3h-3.6zM60.3 160.4h2.8v2.4h-2.8zM63.3 160.7h3.3v3.4h-3.3zM109 160.1h3.3v2.2h-3.3zM117.5 160.8h3.5v1.8h-3.5zM251.8 160.8h3.5v3.5h-3.5zM40.1 162.3h3v2.6h-3zM86.4 162.8h2.9v2.3h-2.9zM120 162.2h3v2.5h-3zM245.9 162.5h2.7v3.5h-2.7zM274.7 162.8h2.4v2.3h-2.4zM294.2 162.5h2.5v2.2h-2.5zM313.2 162.4h2.8v3.6h-2.8zM114.8 164.6h3.2v2.8h-3.2zM184.1 164.6h4v3.4h-4zM322.4 164.2h3.3v1.9h-3.3zM10.3 167.3h4.7v3.5h-4.7zM70.5 167.3h4v2h-4zM208.8 166.7h4.6v3h-4.6zM51.2 169.7h4.9v2.4h-4.9zM71.5 169h2.9v2.3h-2.9zM175.4 168.9h3.5v2.6h-3.5zM182.8 168.9h3.7v3.4h-3.7zM206.3 169.7h3.9v3.9h-3.9zM315.7 169.4h4.7v4h-4.7zM25.9 171.7h5.5v2.8h-5.5zM255 171.8h3.2v3h-3.2zM328.1 171.5h3.1v4.1h-3.1zM15.7 174.5h3.5v3.6h-3.5zM42 173.7h4.7v2.2h-4.7zM49.5 173.5h2.3v4.3h-2.3zM165.2 174.2h2.4v2.4h-2.4zM195.2 174.5h3.7v3h-3.7zM141.9 177h4.2v4.2h-4.2zM146.9 176.5h3.5v3.8h-3.5zM162.2 176.4h3.3v2.9h-3.3zM212 176.9h5.4v3.1h-5.4zM239.3 177h5.2v3.8h-5.2zM187.1 178.9h4.6v2.6h-4.6zM226.3 179.4h4.1v4.4h-4.1zM111.3 181.3h4.8v4.5h-4.8zM160 182.2h2.5v4.3h-2.5zM162.6 181.9h6.2v4.3h-6.2zM252.5 182.1h4.7v4.5h-4.7zM95.4 184.8h6.2v3.8h-6.2z"/>
<path fill="#787060" d="M17 133.7h1.7v1.6h-1.7zM194.6 137.6h1.3v1.5h-1.3zM75.9 139.1h2.5v2.3h-2.5zM45.3 142.7h3v1.5h-3zM66.5 143h2.6v1.4h-2.6zM224.1 143h3.4v1.3h-3.4zM93 144h2.9v1.5h-2.9zM220.4 144h1.8v2.4h-1.8zM28.4 146.1h1.5v1.5h-1.5zM217.1 145.7h2.4v2.7h-2.4zM27.9 147.2h2.4v2.6h-2.4zM86.4 147.5h3.5v3h-3.5zM134.5 147.5h1.9v2.1h-1.9zM193.4 147.8h2.1v2.4h-2.1zM257.4 147.9h2v2.8h-2zM313.7 147.5h3.7v1.8h-3.7zM14.2 149.3h1.6v2.4h-1.6zM19.9 148.5h2.7v1.7h-2.7zM122.7 148.8h2.9v2.8h-2.9zM190.4 148.5h3.5v2h-3.5zM224.3 149.4h2.8v1.5h-2.8zM291.4 148.7h1.6v2h-1.6zM127.8 151.2h3.6v2.6h-3.6zM136.8 150.9h2.3v1.9h-2.3zM143 151.3h2.8v1.6h-2.8zM146.1 150.9h3.2v1.8h-3.2zM156 150.3h3.5v2.2h-3.5zM263.2 151.1h1.6v1.8h-1.6zM305.9 151h3.7v2.6h-3.7zM320.6 150.4h4v1.9h-4zM77.5 152.5h4v3.2h-4zM172 152.5h2.5v1.8h-2.5zM276.8 152.8h4.1v2.9h-4.1zM30 154.9h3.1v2.1h-3.1zM105.1 154.5h2.1v1.8h-2.1zM152.9 154.4h2.9v2.2h-2.9zM168.4 154.3h2.8v3.3h-2.8zM6.3 157h4.1v2.9h-4.1zM20.1 156.3h3v2.5h-3zM23.3 156.7h4.1v3.1h-4.1zM248.1 156.1h3.7v1.8h-3.7zM283.8 156.4h4.2v3.2h-4.2zM291 156.7h4.4v2.3h-4.4zM56.5 158.2h4.2v2.7h-4.2zM71.2 158.9h4.1v2h-4.1zM100.3 158.4h3.7v2.5h-3.7zM148.6 158.2h4.2v3.4h-4.2zM192.3 157.9h2.5v3.2h-2.5zM198.1 158.4h2.4v1.8h-2.4zM200.8 158.1h4.3v1.7h-4.3zM234.5 157.9h4.1v2.2h-4.1zM19.7 160.9h3.4v2.2h-3.4zM259.7 160.7h3.7v2.2h-3.7zM30.2 162.4h2.3v3.2h-2.3zM132 162.4h3.7v3.7h-3.7zM188.3 162.3h4.1v2h-4.1zM226.2 163h2.7v2.4h-2.7zM257.6 162.9h3.9v2.3h-3.9zM289.9 163.1h4.1v2.7h-4.1zM324.5 162.2h4.9v3.1h-4.9zM233.1 165h3.9v3.1h-3.9zM264.6 165.2h3.1v1.9h-3.1zM277.5 165h3.2v2.7h-3.2zM317.6 165.2h4.6v2.1h-4.6zM0.5 166.7h3.9v2h-3.9zM104 167.3h4.5v2.4h-4.5zM113.3 166.6h4v3.4h-4zM126.5 167.4h3.6v2.5h-3.6zM228.2 167.4h4.7v2.8h-4.7zM266.9 166.9h3.5v3.9h-3.5zM78.6 169.4h5.1v2.3h-5.1zM145.6 169.7h4.2v3.7h-4.2zM313.4 169.1h2.3v3.7h-2.3zM329.9 169.1h3.1v2.9h-3.1zM15.5 171.3h2.7v2.4h-2.7zM59 171h4.2v3.4h-4.2zM104.5 171h3.6v3.2h-3.6zM108.9 171.3h2.4v3.4h-2.4zM286.5 171.2h3.1v2.3h-3.1zM76.2 174.4h2.8v2.3h-2.8zM229.3 174.4h5.5v2.8h-5.5zM122.3 176.8h4.3v3.3h-4.3zM165.8 176.4h3.2v2.2h-3.2zM235.8 177.1h3.5v3.5h-3.5zM289 176.3h5.2v2.2h-5.2zM18.1 178.5h5.6v4.7h-5.6zM34 179.2h5.5v3.6h-5.5zM321 179.5h6v2.8h-6zM327.9 179.5h3.9v3.8h-3.9zM275.6 182.2h6.1v2.7h-6.1zM312.9 181.4h3.9v4.4h-3.9zM40.1 185h4v2.6h-4zM224.1 184.5h3.6v3.4h-3.6z"/>
<path fill="#d8d4c0" d="M24.8 134.3h2.5v1.3h-2.5zM93.3 134.9h2.7v1.2h-2.7zM261.4 134.8h2.3v2.2h-2.3zM322.5 135.1h2.6v2.1h-2.6zM95.9 137.2h1.9v2.1h-1.9zM236.4 136.8h2.3v2.1h-2.3zM321.7 136.1h3v1.8h-3zM205.8 138.6h1.5v2h-1.5zM249.4 138.4h1.8v1.4h-1.8zM135.9 139.2h2.2v2h-2.2zM108.8 140.9h1.4v1.7h-1.4zM134 142.6h2.6v1.9h-2.6zM172.2 142h2.8v1.7h-2.8zM200.8 142.2h1.4v1.5h-1.4zM50.3 143.7h3.4v2.4h-3.4zM234 143.9h1.7v2h-1.7zM277.8 143.6h3.2v1.4h-3.2zM21.1 146.3h2.1v2.2h-2.1zM303.7 146h1.9v2.1h-1.9zM19.1 147.1h1.9v3h-1.9zM21.2 147.9h2.7v3h-2.7zM52.5 147.2h3.3v1.5h-3.3zM73.6 146.8h3.5v2.5h-3.5zM112.1 147.7h3.1v2.2h-3.1zM202.7 147.5h2.8v2.9h-2.8zM304.1 147h1.9v2.2h-1.9zM309.3 147.2h2.1v3h-2.1zM325 146.9h2.7v2.8h-2.7zM49 149h2.6v2h-2.6zM125.9 148.7h2.6v2.7h-2.6zM267.7 149.3h3.7v2.2h-3.7zM95 150.5h2.5v1.7h-2.5zM216.4 150.4h4v1.6h-4zM232.8 150.9h3.1v1.8h-3.1zM250.5 151.3h2.5v1.7h-2.5zM256.7 150.6h1.9v2.5h-1.9zM47.7 152.4h3.9v2.2h-3.9zM86.7 152.5h2.2v2h-2.2zM124.9 152.4h4.1v1.8h-4.1zM168.3 152.6h3.1v2.6h-3.1zM248.3 152.3h2.6v3h-2.6zM258.6 153.1h3.9v1.9h-3.9zM265.5 152h2.1v3.2h-2.1zM-0.1 154.2h3.4v3.1h-3.4zM20.8 155.1h1.9v3.1h-1.9zM200.8 154.4h2.3v2.1h-2.3zM211.2 154.3h1.8v2.5h-1.8zM246.7 154.3h2.6v2.2h-2.6zM267 154.3h2.9v2.9h-2.9zM329.5 154.5h2.5v1.9h-2.5zM162 156.5h2.7v1.6h-2.7zM168 156.1h2.7v2h-2.7zM210.1 156.5h4.4v2.3h-4.4zM222.9 156.6h3.6v2.2h-3.6zM39.1 158.9h4.5v2h-4.5zM169.8 158.4h2.3v2.6h-2.3zM254.9 158.4h4.6v2.2h-4.6zM322.1 158.6h4.1v2.5h-4.1zM38.5 160.9h3.8v2.7h-3.8zM43.1 160.9h2.4v3.2h-2.4zM162.2 160.9h2.4v2.3h-2.4zM198.6 160.1h4.5v3.6h-4.5zM263.3 160.6h2.4v2.1h-2.4zM270.2 160.3h4.6v1.8h-4.6zM1.5 162.8h4.7v3.1h-4.7zM249 162.8h2.4v2.4h-2.4zM296.6 162.2h4.3v3.6h-4.3zM82.6 164.8h2.4v2.5h-2.4zM101.3 164.5h2.4v3.8h-2.4zM124.7 165.1h4.3v2.6h-4.3zM137.9 167.3h3.2v2.6h-3.2zM232.9 167.5h5.1v2.7h-5.1zM284.8 167.5h2.9v2.3h-2.9zM74.9 169.2h3.9v3.1h-3.9zM308.3 169.7h4.7v2.3h-4.7zM275 171.3h3.5v2.5h-3.5zM283.2 171.7h2.7v4.1h-2.7zM-0.2 174.1h3v3.7h-3zM6.3 174.5h4.1v3.4h-4.1zM246.2 174.1h5.5v4h-5.5zM251.7 174.6h5.7v3.2h-5.7zM294.2 174.6h2.6v2.2h-2.6zM305.7 174.5h3.9v3.2h-3.9zM309.5 173.6h3.3v3.1h-3.3zM10.9 176h5.2v2.8h-5.2zM111.1 176.1h2.5v4.1h-2.5zM134 176.6h4.1v2.5h-4.1zM156 176.2h2.9v2.2h-2.9zM258.8 176.7h2.9v4.5h-2.9zM29 179.4h4v2.8h-4zM153.7 179.5h3.1v4.4h-3.1zM245 179.4h3.8v2.4h-3.8zM257.2 179.6h3.6v2.6h-3.6zM268.9 179h2.9v3.2h-2.9zM19.6 181.3h5.7v3h-5.7zM180.1 181.4h4.3v4.1h-4.3zM201.8 181.7h5.6v4.1h-5.6zM226.6 181.3h5.5v4.4h-5.5zM232.6 182.3h4.5v3.5h-4.5zM240.7 181.6h3.5v2.7h-3.5zM270.8 181.8h4v4h-4zM198.2 185h5.9v3.6h-5.9z"/>
<path fill="#484030" d="M316.5 133.5h1.2v2.1h-1.2zM189.7 135.8h2.1v1.8h-2.1zM37.4 139.1h2.5v2.5h-2.5zM59.5 139.4h2v1.6h-2zM213.5 139.2h3v1.3h-3zM248.3 139.1h3.1v1.7h-3.1zM105.8 141.3h2.9v1.9h-2.9zM125.7 141.2h3.1v1.9h-3.1zM62.4 142.1h3.4v1.4h-3.4zM260 142.2h2v1.6h-2zM249.2 144.2h3.1v2.2h-3.1zM104.6 145.3h1.6v2.7h-1.6zM173 145.5h3.1v1.6h-3.1zM82.3 146.9h3.3v1.9h-3.3zM126.7 147.8h2.2v2.5h-2.2zM173.4 147.6h3.6v2.9h-3.6zM244.8 147h2.1v2.5h-2.1zM253.6 147.4h1.9v2.3h-1.9zM2.8 148.5h1.9v1.7h-1.9zM78.9 149.4h3v2.7h-3zM102.5 149.5h1.8v1.9h-1.8zM233.4 148.9h3.7v1.9h-3.7zM240.2 149.2h3.6v1.7h-3.6zM74.6 150.9h3.1v2.2h-3.1zM178.7 151.1h2.3v3h-2.3zM2.4 152.5h2.1v3h-2.1zM81.6 153h2.8v2h-2.8zM227.7 152.1h4v2.9h-4zM267.7 152.3h3.8v1.9h-3.8zM295 153.2h3.5v3.1h-3.5zM126.5 154h3.6v2.8h-3.6zM144.2 154.9h4.3v2.5h-4.3zM165.6 154.1h2.3v1.8h-2.3zM260.8 155.1h2.8v2h-2.8zM318.4 154.7h4v3h-4zM17.8 158.5h3.4v2.1h-3.4zM284.9 158.4h1.9v2.7h-1.9zM295.8 157.9h4.1v2.1h-4.1zM66.7 159.9h3.5v2.1h-3.5zM85.5 160.3h1.9v3h-1.9zM98.2 160.8h3.3v2.8h-3.3zM105.5 160.7h3.5v2.4h-3.5zM203.1 160.4h4.4v3.4h-4.4zM296.3 160.1h3v2.3h-3zM325.3 160.7h4.5v3h-4.5zM10.4 163.1h3.1v1.9h-3.1zM92.1 162.8h4.6v2.7h-4.6zM205.5 162.8h2.1v2.3h-2.1zM309.4 163h3.5v3.2h-3.5zM320.9 162h3v2h-3zM329.9 163h4.8v3.6h-4.8zM91.2 164.9h4.8v2h-4.8zM166.6 164.7h4.3v2.4h-4.3zM179.9 165.3h4.1v2.6h-4.1zM267.9 164.7h4.5v3.3h-4.5zM285 165.1h4.3v3.8h-4.3zM42.2 167.3h4.3v3.2h-4.3zM122.1 166.8h4.5v2.1h-4.5zM27.6 169.5h2.2v3h-2.2zM156.2 169.1h3.9v2.7h-3.9zM193.3 169.4h2.3v3.6h-2.3zM201.2 169.7h4.5v2.2h-4.5zM217.9 168.9h4.7v3.4h-4.7zM305.3 169h3v2.9h-3zM167.3 172.2h4.9v2.7h-4.9zM220.5 171.7h5.1v4h-5.1zM292.8 171.3h3.3v3.1h-3.3zM46.7 173.9h2.7v4.2h-2.7zM71.9 174.4h3.5v3.4h-3.5zM206.1 173.7h4.1v2.2h-4.1zM210.2 174.4h3.2v3.3h-3.2zM238.5 174.3h4.2v4.1h-4.2zM25.7 176.5h5.2v3.6h-5.2zM42.6 177h5.5v2.9h-5.5zM62.4 176.6h3.2v3.7h-3.2zM316.3 177h5.5v3.2h-5.5zM63.1 179.1h5.5v3.5h-5.5zM74.9 178.9h3.1v3.2h-3.1zM278.1 179.2h2.8v3.9h-2.8zM139.2 181.7h6.3v3.7h-6.3zM120.5 184.3h2.9v3.6h-2.9zM134.7 184.1h5.4v3.6h-5.4zM166.8 184.5h4.2v3.9h-4.2zM214.9 184.3h4.4v3.9h-4.4zM275 184.3h2.8v3.2h-2.8zM283.9 184.2h5.8v3.3h-5.8z"/>
<path fill="#988868" d="M126.6 134.9h1.6v1.6h-1.6zM141.9 135.4h2.2v2.1h-2.2zM255 135.1h1.7v2.4h-1.7zM290.5 136.4h2.7v1.8h-2.7zM103.3 137.9h2.6v1.2h-2.6zM303.6 138.2h2.6v2h-2.6zM205.8 140.1h1.3v1.5h-1.3zM27.7 142h1.6v2.7h-1.6zM168.5 142.2h3.4v1.5h-3.4zM175.1 142.8h2v1.5h-2zM53.5 144.1h2.7v2.2h-2.7zM288.9 144.6h2.1v2.1h-2.1zM154.5 145.5h2.4v2.9h-2.4zM164.5 145.2h2.7v2.5h-2.7zM211.6 146.1h1.6v1.6h-1.6zM237.5 146h2.2v2.7h-2.2zM12.1 147.7h2.5v1.8h-2.5zM199.8 147.2h2.5v2.9h-2.5zM213.2 147h3.1v1.8h-3.1zM268.1 147h3.1v2h-3.1zM276.4 147.4h2.1v2.4h-2.1zM104.5 149.1h2.3v2.1h-2.3zM177.7 149.1h1.8v2.1h-1.8zM222.3 148.8h2v1.6h-2zM293 148.6h2.5v2.2h-2.5zM17.1 151.2h2.6v3.1h-2.6zM30.3 150.7h3.7v2.6h-3.7zM107.4 150.7h3.6v3.2h-3.6zM121.7 151.2h1.7v1.8h-1.7zM149.7 151.3h1.8v2.3h-1.8zM287.1 150.4h2.9v2.4h-2.9zM104.3 152h3.1v1.9h-3.1zM158.9 153h4.1v3.1h-4.1zM163.1 153.2h2.1v2.7h-2.1zM64.5 154.8h2.3v3h-2.3zM85.2 154.2h2.4v3.2h-2.4zM229.8 155.1h4.2v2.2h-4.2zM323.2 155h1.8v2.2h-1.8zM88.3 156.7h2v1.7h-2zM99.3 156.8h2.3v1.8h-2.3zM144.5 155.9h3.6v3h-3.6zM180.9 156.5h3.3v1.7h-3.3zM237 156.8h2.5v2.1h-2.5zM216.4 158.7h3.2v2.9h-3.2zM80.9 160.7h3.8v2.8h-3.8zM121.6 160.9h2.7v3.1h-2.7zM128.4 160.5h2.2v2.4h-2.2zM158.3 160.1h3.4v1.9h-3.4zM266.2 159.9h3.3v3h-3.3zM275.5 160.2h4.3v3.2h-4.3zM312.1 160.7h4.3v1.9h-4.3zM158.2 162h2.2v1.9h-2.2zM169.5 162.2h3.7v2.7h-3.7zM51.5 164.8h2.8v2.4h-2.8zM96.4 164.3h5v3.2h-5zM177 164.9h2.5v3.7h-2.5zM246.1 165.3h4.8v2.7h-4.8zM33.4 167.2h3.8v3.5h-3.8zM53.4 167.4h3.4v3.9h-3.4zM178.8 168.8h3.4v3.1h-3.4zM320.3 169.6h3v2.4h-3zM67.7 174h4.2v3.2h-4.2zM110.6 173.9h3.9v2.2h-3.9zM186.9 173.9h3.7v2.6h-3.7zM199 174.4h3.4v4h-3.4zM150.4 177h5.3v3.5h-5.3zM232 177h3.1v4h-3.1zM300.7 176.8h5.5v3.8h-5.5zM322 176.3h4.5v2.2h-4.5zM183 178.9h4.2v3.7h-4.2zM192.5 178.7h4.8v4.4h-4.8zM211.7 181.2h5.7v2.5h-5.7zM258.1 181.6h5v4h-5zM264.2 182.2h5.7v3.6h-5.7zM285.9 181.6h6v4.4h-6zM44.9 184.2h4.2v2.6h-4.2zM239.3 184.5h5.3v4h-5.3zM294 184h4.2v3.6h-4.2z"/>
<path fill="#80483a" d="M83.5 136.9h2.8v1.7h-2.8zM272.1 137.2h2.4v2h-2.4zM122.7 137.9h2.4v2.4h-2.4zM172.4 138.6h2.9v1.5h-2.9zM5.3 139h2.9v1.3h-2.9zM88.7 139.7h2.3v2.3h-2.3zM284.7 139.9h1.3v2.3h-1.3zM78.1 141.6h3.3v2.6h-3.3zM143.6 141.2h1.8v2.4h-1.8zM181.7 143h1.6v2.3h-1.6zM5.2 144h2.6v2.8h-2.6zM62.7 143.5h3.1v1.6h-3.1zM48.7 145.2h2.6v1.8h-2.6zM170.5 145.2h2.4v1.8h-2.4zM203.6 146h2v1.7h-2zM223.8 145.4h2.5v1.5h-2.5zM286.8 146.1h2.8v2.2h-2.8zM-0.5 147h3.2v2.1h-3.2zM100.4 147.8h3v1.6h-3zM124.2 147.1h2.2v2.8h-2.2zM151.7 146.8h2.9v2.2h-2.9zM155 147.5h3.1v1.5h-3.1zM259.3 147.2h1.6v2.6h-1.6zM311.9 147.3h1.8v2.9h-1.8zM22.5 149h3.5v1.6h-3.5zM128.9 148.6h3.5v2h-3.5zM165.7 149.1h2.1v2.4h-2.1zM220.1 149.5h2.3v3h-2.3zM245.8 149.5h3.6v1.6h-3.6zM305.1 148.6h2.4v3h-2.4zM3.1 151.2h3.9v2.2h-3.9zM20.2 151.4h1.9v3.1h-1.9zM62.5 150.9h2.3v2.5h-2.3zM68.2 150.4h2.3v2.8h-2.3zM230.4 150.7h2.4v3h-2.4zM64.8 153.2h4v1.9h-4zM116 152.3h2.6v2.3h-2.6zM187 152.2h3.4v2.1h-3.4zM302.7 153h3.4v2.9h-3.4zM81.9 154.4h2.6v2.1h-2.6zM99.7 154.7h1.9v3.1h-1.9zM124.5 154.5h1.9v2.6h-1.9zM130.7 154.6h3.6v2.9h-3.6zM301.7 154.6h1.8v2.1h-1.8zM39.9 156.6h3v1.9h-3zM50.9 156.2h1.8v1.8h-1.8zM216.6 156.9h3.5v1.7h-3.5zM240 156.3h3v2h-3zM288.4 156.2h2.6v1.7h-2.6zM300.5 156.5h3.8v2.5h-3.8zM51.1 158h2.6v2.3h-2.6zM85 158.6h3.5v3.5h-3.5zM172.6 158.7h4.3v2.3h-4.3zM209.9 158h3.7v3h-3.7zM222 158.5h3.1v2.2h-3.1zM228 158.3h3.9v3.5h-3.9zM303.1 158.1h2.8v3.6h-2.8zM175.5 159.9h1.9v3.3h-1.9zM207.7 159.9h4.1v3.6h-4.1zM285 160.6h2.9v1.7h-2.9zM160.5 162.4h4.5v2.7h-4.5zM251.8 162h2v2.5h-2zM137.2 164.6h5v3.4h-5zM149.2 164.6h4.9v2.2h-4.9zM195.8 164.5h3v2.5h-3zM306.1 164.8h5v3.8h-5zM149.6 167.3h4.7v2.3h-4.7zM154.4 167.4h3.3v2.4h-3.3zM204.5 166.8h4.4v2.9h-4.4zM109.3 168.7h4.6v2.9h-4.6zM215.7 169.3h2.3v2.5h-2.3zM274.9 169.6h4.3v3.8h-4.3zM68.6 172.1h2.8v2.9h-2.8zM89.2 171h5.1v3.7h-5.1zM100.7 171.5h3.2v4.2h-3.2zM163.6 171.5h3.3v2h-3.3zM177.2 171.1h4.8v3.9h-4.8zM290.1 171.3h2.4v3.1h-2.4zM313.8 171h3.5v4.2h-3.5zM94.8 174.5h5.6v3.7h-5.6zM150.4 174.5h5.2v2.5h-5.2zM243.3 174.5h2.5v3.9h-2.5zM158.9 176.8h2.7v3.8h-2.7zM245 176.4h5.8v2.5h-5.8zM307.7 179.3h3.6v2.4h-3.6zM311.2 178.7h5.1v3.5h-5.1zM29.2 182.3h3.3v4.6h-3.3zM107.1 181.2h3.8v2.7h-3.8zM223.6 182.2h2.6v3.7h-2.6zM308.3 182.3h4.7v2.9h-4.7zM33.7 185.1h6.1v4.8h-6.1zM59.1 185h4.9v2.9h-4.9zM86.4 184.6h2.7v4.6h-2.7z"/>
</g>
</g>
<polygon points="0,123 7,123 9,150 11,172 0,172" fill="#4c4634" />
<rect x="0" y="126" width="8" height="1.1" fill="#847c5c" />
<rect x="0" y="130" width="8" height="1.1" fill="#847c5c" />
<rect x="0" y="134" width="8" height="1.1" fill="#847c5c" />
<rect x="0" y="138" width="8" height="1.1" fill="#847c5c" />
<rect x="0" y="142" width="8" height="1.1" fill="#847c5c" />
<rect x="0" y="146" width="8" height="1.1" fill="#847c5c" />
<rect x="0" y="150" width="8" height="1.1" fill="#847c5c" />
<rect x="0" y="154" width="8" height="1.1" fill="#847c5c" />
<rect x="0" y="158" width="8" height="1.1" fill="#847c5c" />
<rect x="0" y="162" width="8" height="1.1" fill="#847c5c" />
<rect x="0" y="166" width="8" height="1.1" fill="#847c5c" />
<rect x="1" y="123" width="5.5" height="4" fill="#d0c090" />
<polygon points="16,123 24,123 22,150 13,170 9,170 12,145" fill="#6c6248" />
<polygon points="17,123 24,123 23,133 15,135" fill="#c8b468" />
<polygon points="12,136 22,134 20,150 10,165 9,150" fill="#7c7256" />
<rect x="24" y="133" width="10" height="14" fill="#8c7c54" />
<rect x="25" y="133" width="8" height="4" fill="#d0c080" />
<rect x="34" y="134" width="3" height="12" fill="#504434" />
<rect x="37" y="131" width="8" height="6" fill="#d8b850" />
<rect x="37" y="137" width="8" height="10" fill="#84744f" />
<rect x="46" y="134" width="26" height="4" fill="#b89c64" opacity="0.75"/>
<rect x="46" y="138" width="26" height="6" fill="#7c6c54" opacity="0.6"/>
<rect x="50" y="135" width="4" height="6" fill="#d0b070" />
<rect x="58" y="135" width="3" height="7" fill="#705840" />
<rect x="64" y="135" width="5" height="5" fill="#d0a860" />
<rect x="73" y="128" width="9" height="8" fill="#e0a850" />
<rect x="73" y="136" width="9" height="7" fill="#b08c58" />
<rect x="45" y="144" width="17" height="4" fill="#2c3820" />
<rect x="14" y="148" width="17" height="20" fill="#8c8462" />
<rect x="14" y="150" width="17" height="0.9" fill="#5c5440" />
<rect x="14" y="153" width="17" height="0.9" fill="#5c5440" />
<rect x="14" y="156" width="17" height="0.9" fill="#5c5440" />
<rect x="14" y="159" width="17" height="0.9" fill="#5c5440" />
<rect x="14" y="162" width="17" height="0.9" fill="#5c5440" />
<rect x="14" y="165" width="17" height="0.9" fill="#5c5440" />
<rect x="31" y="146" width="6" height="18" fill="#5c5440" />
<polygon points="36,151 60,150 60,166 36,167" fill="#46603a" />
<rect x="52" y="152" width="8" height="14" fill="#2a3222" />
<rect x="38" y="153" width="12" height="3" fill="#6c8858" />
<rect x="37" y="160" width="14" height="2" fill="#385430" />
<rect x="60" y="150" width="8" height="10" fill="#746c5a" />
<rect x="68" y="146" width="14" height="10" fill="#847c66" />
<rect x="70" y="150" width="4" height="8" fill="#3c3426" />
<polygon points="12,170 55,166 56,178 14,182" fill="#b8b090" />
<polygon points="14,178 56,174 56,179 16,183" fill="#7c5c3c" />
<rect x="20" y="170" width="6" height="3" fill="#e0d8b8" />
<rect x="40" y="171" width="3" height="5" fill="#7c5c40" />
<polygon points="0,170 12,172 14,184 0,184" fill="#242424" />
<rect x="4" y="176" width="5" height="6" fill="#3c5c30" />
<polygon points="15,182 56,178 58,184 15,184" fill="#1c1c16" />
<rect x="60" y="160" width="12" height="8" fill="#a8a898" />
<rect x="62" y="168" width="10" height="10" fill="#c4c4b8" />
<rect x="72" y="158" width="10" height="6" fill="#a8a898" />
<rect x="73" y="166" width="9" height="6" fill="#343024" />
<rect x="60" y="178" width="10" height="6" fill="#4c4c38" />
<rect x="72" y="174" width="10" height="10" fill="#747c60" />
<rect x="82" y="126" width="8" height="9" fill="#c89850" />
<rect x="82" y="135" width="8" height="8" fill="#a08450" />
<rect x="90" y="132" width="23" height="4" fill="#c0a066" opacity="0.75"/>
<rect x="90" y="136" width="23" height="8" fill="#80705a" opacity="0.6"/>
<rect x="94" y="133" width="4" height="8" fill="#d0a868" />
<rect x="103" y="134" width="5" height="8" fill="#887048" />
<rect x="108" y="131" width="3" height="3" fill="#e8d0a0" />
<rect x="113" y="121" width="6" height="15" fill="#e8d8b8" />
<rect x="115" y="124" width="2" height="9" fill="#c8a878" />
<rect x="121" y="125" width="5" height="12" fill="#6c7860" />
<rect x="126" y="133" width="38" height="4" fill="#c4a068" opacity="0.75"/>
<rect x="126" y="137" width="38" height="7" fill="#84745c" opacity="0.6"/>
<rect x="134" y="135" width="5" height="6" fill="#54442f" />
<rect x="142" y="133" width="3" height="9" fill="#e0c090" />
<rect x="147" y="135" width="6" height="5" fill="#706050" />
<rect x="155" y="134" width="5" height="8" fill="#d8b078" />
<polygon points="76,147 84,143.5 120,143 165,143.5 188,145.5 191,150 188,157 180,162 168,165 150,166.5 130,167 112,166 98,164 86,160 78,154" fill="#262f19" />
<ellipse cx="125" cy="150" rx="45" ry="4" fill="#303e1e" opacity="0.6"/>
<ellipse cx="140" cy="159" rx="30" ry="4" fill="#1c2a12" opacity="0.8"/>
<circle cx="151.4" cy="156.8" r="1.6" fill="#222e1a" opacity="0.7"/>
<circle cx="114.5" cy="153.9" r="1.8" fill="#2e3c20" opacity="0.7"/>
<circle cx="82.8" cy="156.4" r="1.1" fill="#2e3c20" opacity="0.7"/>
<circle cx="146.1" cy="154" r="1.5" fill="#2e3c20" opacity="0.7"/>
<circle cx="134.5" cy="146.4" r="0.9" fill="#36421f" opacity="0.7"/>
<circle cx="85.7" cy="148.6" r="0.9" fill="#1a2410" opacity="0.7"/>
<circle cx="95.8" cy="161.3" r="1.8" fill="#36421f" opacity="0.7"/>
<circle cx="143.7" cy="148.1" r="1.2" fill="#2e3c20" opacity="0.7"/>
<circle cx="170.7" cy="146.5" r="2" fill="#1a2410" opacity="0.7"/>
<circle cx="119.6" cy="159.4" r="0.9" fill="#36421f" opacity="0.7"/>
<circle cx="120.7" cy="146.3" r="1" fill="#36421f" opacity="0.7"/>
<circle cx="128.6" cy="151.1" r="1.5" fill="#36421f" opacity="0.7"/>
<circle cx="167.7" cy="150.5" r="1.8" fill="#2e3c20" opacity="0.7"/>
<circle cx="137.1" cy="153.4" r="1.4" fill="#222e1a" opacity="0.7"/>
<circle cx="142" cy="155.8" r="1.4" fill="#1a2410" opacity="0.7"/>
<circle cx="146" cy="149.1" r="1.4" fill="#36421f" opacity="0.7"/>
<circle cx="149.7" cy="155.1" r="1.9" fill="#2e3c20" opacity="0.7"/>
<circle cx="115.4" cy="148.4" r="1.7" fill="#222e1a" opacity="0.7"/>
<circle cx="142.3" cy="148.3" r="1" fill="#1a2410" opacity="0.7"/>
<circle cx="151.3" cy="155" r="2" fill="#1a2410" opacity="0.7"/>
<circle cx="106.1" cy="160.3" r="1.9" fill="#222e1a" opacity="0.7"/>
<circle cx="92.4" cy="158.1" r="1.2" fill="#2e3c20" opacity="0.7"/>
<circle cx="160.1" cy="162" r="1.6" fill="#36421f" opacity="0.7"/>
<circle cx="80.8" cy="149.8" r="1.9" fill="#222e1a" opacity="0.7"/>
<circle cx="134.2" cy="161.4" r="1.5" fill="#36421f" opacity="0.7"/>
<circle cx="101.1" cy="150.7" r="1.4" fill="#36421f" opacity="0.7"/>
<circle cx="159.6" cy="158.3" r="1.8" fill="#2e3c20" opacity="0.7"/>
<circle cx="83.9" cy="145" r="1.6" fill="#222e1a" opacity="0.7"/>
<circle cx="90.5" cy="154" r="2.1" fill="#36421f" opacity="0.7"/>
<circle cx="152.9" cy="147" r="1.6" fill="#222e1a" opacity="0.7"/>
<circle cx="119.8" cy="147.2" r="1.9" fill="#222e1a" opacity="0.7"/>
<circle cx="84" cy="157" r="2" fill="#222e1a" opacity="0.7"/>
<circle cx="156.9" cy="162.3" r="1" fill="#2e3c20" opacity="0.7"/>
<circle cx="161.6" cy="155.9" r="1.9" fill="#2e3c20" opacity="0.7"/>
<circle cx="162.6" cy="158.7" r="1.1" fill="#2e3c20" opacity="0.7"/>
<circle cx="109.6" cy="153.4" r="1.7" fill="#1a2410" opacity="0.7"/>
<circle cx="169.5" cy="155.1" r="1.9" fill="#222e1a" opacity="0.7"/>
<circle cx="162.4" cy="162.1" r="1" fill="#36421f" opacity="0.7"/>
<circle cx="101.4" cy="150.2" r="1.1" fill="#36421f" opacity="0.7"/>
<circle cx="105.3" cy="155.3" r="1.1" fill="#222e1a" opacity="0.7"/>
<circle cx="99.4" cy="150.8" r="1.8" fill="#2e3c20" opacity="0.7"/>
<circle cx="130.1" cy="157.3" r="2.1" fill="#36421f" opacity="0.7"/>
<circle cx="92" cy="147.4" r="2" fill="#2e3c20" opacity="0.7"/>
<circle cx="178.7" cy="149.5" r="1.8" fill="#1a2410" opacity="0.7"/>
<circle cx="87.9" cy="157.1" r="1.9" fill="#222e1a" opacity="0.7"/>
<circle cx="180.1" cy="145.3" r="1.5" fill="#36421f" opacity="0.7"/>
<circle cx="119.1" cy="154.6" r="1.8" fill="#36421f" opacity="0.7"/>
<circle cx="156.5" cy="150.1" r="1.6" fill="#36421f" opacity="0.7"/>
<circle cx="142" cy="153.4" r="0.9" fill="#36421f" opacity="0.7"/>
<circle cx="180.7" cy="148" r="1.1" fill="#1a2410" opacity="0.7"/>
<circle cx="175.3" cy="155.9" r="2.2" fill="#2e3c20" opacity="0.7"/>
<circle cx="184.5" cy="149.7" r="1.2" fill="#222e1a" opacity="0.7"/>
<circle cx="104.4" cy="157.8" r="1.2" fill="#1a2410" opacity="0.7"/>
<circle cx="127.6" cy="163.1" r="1.2" fill="#2e3c20" opacity="0.7"/>
<circle cx="116.9" cy="146.4" r="1.8" fill="#1a2410" opacity="0.7"/>
<circle cx="144.7" cy="150.7" r="1.5" fill="#36421f" opacity="0.7"/>
<circle cx="98.9" cy="145.6" r="1.8" fill="#2e3c20" opacity="0.7"/>
<circle cx="125.7" cy="155.8" r="1.2" fill="#36421f" opacity="0.7"/>
<circle cx="153.9" cy="152.1" r="1.5" fill="#2e3c20" opacity="0.7"/>
<circle cx="102.7" cy="162.7" r="0.9" fill="#222e1a" opacity="0.7"/>
<rect x="82" y="160" width="6" height="8" fill="#d0ccb8" />
<rect x="84" y="168" width="10" height="6" fill="#84402c" />
<rect x="82" y="176" width="8" height="6" fill="#3c7c48" />
<rect x="94" y="164" width="8" height="5" fill="#242420" />
<rect x="100" y="166" width="7" height="14" fill="#b8a880" />
<rect x="108" y="167" width="5" height="10" fill="#74382a" />
<rect x="108" y="162" width="4" height="5" fill="#c8c4b8" />
<rect x="114" y="168" width="14" height="3" fill="#d0c8b0" />
<rect x="114" y="171" width="14" height="5" fill="#84543c" />
<rect x="124" y="165" width="6" height="4" fill="#c0b498" />
<rect x="133" y="164" width="8" height="14" fill="#c0b088" />
<rect x="142" y="166" width="5" height="8" fill="#844c34" />
<rect x="148" y="168" width="6" height="8" fill="#d0ccc0" />
<rect x="141" y="175" width="14" height="5" fill="#343024" />
<rect x="155" y="160" width="9" height="8" fill="#d0d0c4" />
<rect x="157" y="168" width="7" height="6" fill="#504840" />
<rect x="120" y="178" width="12" height="6" fill="#a8a088" />
<rect x="100" y="180" width="18" height="4" fill="#3c382c" />
<rect x="167" y="126" width="6" height="12" fill="#686058" />
<rect x="164" y="132" width="3" height="8" fill="#c8a060" />
<rect x="181" y="131" width="7" height="9" fill="#d0a858" />
<rect x="174" y="134" width="6" height="8" fill="#a08860" />
<rect x="192" y="136" width="7" height="8" fill="#585444" />
<rect x="200" y="134" width="5" height="5" fill="#d8b070" />
<rect x="206" y="133" width="12" height="4" fill="#d8a850" />
<rect x="219" y="133" width="8" height="3" fill="#c89848" />
<rect x="230" y="131" width="8" height="9" fill="#4c4438" />
<rect x="239" y="133" width="7" height="10" fill="#403c38" />
<rect x="205" y="139" width="8" height="9" fill="#5c5c58" />
<rect x="215" y="138" width="8" height="10" fill="#74746c" />
<rect x="164" y="162" width="8" height="10" fill="#c0b898" />
<rect x="173" y="162" width="5" height="12" fill="#26221a" />
<rect x="179" y="162" width="9" height="12" fill="#a0a080" />
<rect x="188" y="160" width="6" height="10" fill="#444434" />
<polygon points="219,163 232,162 237,168 236,174 222,174" fill="#7c4c38" />
<rect x="214" y="166" width="8" height="6" fill="#384c2c" />
<rect x="196" y="163" width="10" height="8" fill="#b8b4a0" />
<rect x="198" y="172" width="12" height="6" fill="#a09478" />
<rect x="165" y="175" width="14" height="6" fill="#686048" />
<rect x="182" y="176" width="12" height="5" fill="#c0bca8" />
<polygon points="246,130 258,128 272,129 277,131 277,134 246,134" fill="#8c7c60" />
<rect x="248" y="136" width="6" height="4" fill="#d8b050" />
<rect x="246" y="140" width="9" height="7" fill="#706450" />
<polygon points="256,133 278,132 278,146 256,145" fill="#36322a" />
<polygon points="277,129 298,129 307,151 277,151" fill="#2a261e" />
<rect x="269" y="142" width="9" height="8" fill="#c0c0b0" />
<rect x="280" y="145" width="8" height="7" fill="#888478" />
<polygon points="303,134 327,133 327,156 309,153" fill="#74706a" />
<line x1="303" y1="134" x2="312" y2="154" stroke="#c8c8c0" stroke-width="0.7" opacity="0.8"/>
<line x1="307" y1="134" x2="316" y2="154" stroke="#c8c8c0" stroke-width="0.7" opacity="0.8"/>
<line x1="311" y1="134" x2="320" y2="154" stroke="#c8c8c0" stroke-width="0.7" opacity="0.8"/>
<line x1="315" y1="134" x2="324" y2="154" stroke="#c8c8c0" stroke-width="0.7" opacity="0.8"/>
<line x1="319" y1="134" x2="328" y2="154" stroke="#c8c8c0" stroke-width="0.7" opacity="0.8"/>
<line x1="323" y1="134" x2="332" y2="154" stroke="#c8c8c0" stroke-width="0.7" opacity="0.8"/>
<line x1="327" y1="134" x2="336" y2="154" stroke="#c8c8c0" stroke-width="0.7" opacity="0.8"/>
<line x1="331" y1="134" x2="340" y2="154" stroke="#c8c8c0" stroke-width="0.7" opacity="0.8"/>
<rect x="297" y="124" width="11" height="8" fill="#d4a848" />
<polygon points="297,126 303,124 308,133 300,133" fill="#dcb050" />
<rect x="299" y="127" width="8" height="0.8" fill="#8c7040" />
<rect x="299" y="130" width="8" height="0.8" fill="#8c7040" />
<rect x="311" y="122" width="6" height="7" fill="#e0b458" />
<rect x="319" y="123" width="6" height="7" fill="#d0a054" />
<rect x="309" y="129" width="18" height="4" fill="#7888a0" opacity="0.55"/>
<rect x="280" y="172" width="8" height="7" fill="#c8a850" />
<polygon points="300,173 327,171.5 327,181 302,182" fill="#8a8c7c" />
<g clip-path="url(#cityclip)" opacity="0.5">
<path fill="#2c2820" d="M85 167.6h1.7v1h-1.7zM244.6 171.8h3.5v0.7h-3.5zM44.6 156.6h3.1v1.7h-3.1zM223.3 181.8h2.1v1h-2.1zM22.3 162.9h2.5v1.3h-2.5zM171.4 135.7h1.4v1.5h-1.4zM207.1 165.7h3.6v2h-3.6zM139.3 176.1h1.9v2.8h-1.9zM231.6 172.7h1.6v1.1h-1.6zM248.8 151.6h2.9v0.6h-2.9zM18.3 143.3h1.3v1.8h-1.3zM7.1 161.1h1.6v2h-1.6zM85.5 180.7h1.2v0.7h-1.2zM149.5 136.3h1.7v1.6h-1.7zM87.1 173.9h3.1v1.1h-3.1zM206.3 142.3h2.4v1.5h-2.4zM8.9 153.8h1.5v0.7h-1.5zM83.7 168.4h1.2v1h-1.2zM3.3 152.1h1.4v1.3h-1.4zM82.4 171.1h1.1v0.7h-1.1zM275.1 155.6h3.2v2.3h-3.2zM251.2 165.3h1.5v1.1h-1.5zM82.8 174h3.2v0.8h-3.2zM189.8 164.1h2v0.9h-2zM256.1 182.2h3v1.1h-3zM214.1 156.9h1.3v1.3h-1.3zM22.3 158.7h1.7v1.9h-1.7zM45.1 138h1.7v0.8h-1.7zM64.1 138.5h2.1v0.9h-2.1zM159.8 177.7h1.3v1.7h-1.3zM96.1 166.2h1.7v0.6h-1.7zM319.7 142.2h2.6v1.5h-2.6zM192.8 166.9h2.9v1.3h-2.9zM135.3 139h2.2v1.6h-2.2zM6.7 174.2h1.4v1.4h-1.4zM261.9 168h2.5v1.9h-2.5zM202.5 176.5h1.8v2h-1.8zM154.6 165.9h0.9v0.9h-0.9zM78 171.3h2.5v2.1h-2.5zM236.6 151.7h2.3v1.6h-2.3zM119.1 135.6h1.7v1h-1.7zM42.7 143.6h2.5v1.1h-2.5zM136.7 181.4h0.8v0.8h-0.8zM101.6 165.7h1v1.5h-1zM222.8 162.6h2.5v0.9h-2.5zM244.1 157.5h1.4v1.6h-1.4zM294.4 159.5h1.6v1.9h-1.6zM215.6 143.6h2.4v1.1h-2.4zM165.6 141.6h2.6v1.1h-2.6zM250.3 179.9h3.8v1.1h-3.8zM87.3 137.1h2.1v1.7h-2.1zM264.9 150.7h1.2v0.6h-1.2zM55.4 157.9h1.8v1.2h-1.8zM178.7 163.7h2.3v2.1h-2.3zM30.8 160.2h1.8v1h-1.8zM254.7 137.1h1.2v0.7h-1.2zM252.2 174.7h1.2v1.3h-1.2zM47.4 152.3h2.4v1.4h-2.4zM297 171.4h1.4v1.3h-1.4zM73.1 172.2h2v0.7h-2zM286.8 175.2h2.7v1h-2.7zM206.8 160.3h3.4v2.3h-3.4zM319.4 153h1.5v0.7h-1.5zM266.7 161.8h1.8v0.8h-1.8zM278.2 142.2h2.5v1.5h-2.5zM223.4 172.9h1.3v2.6h-1.3zM76.4 169h3.7v1.6h-3.7zM39.8 142h1.1v1h-1.1zM224.6 162.3h3.3v2.2h-3.3zM326.6 161.2h3.4v1h-3.4zM224.3 155.4h1.4v0.7h-1.4zM70.2 167.1h3.7v2.1h-3.7zM199.8 182.9h2.2v1.3h-2.2zM239.4 175.1h3.8v2.6h-3.8zM14.9 162.5h1.7v2.1h-1.7zM266.3 170.9h3v1.5h-3zM112.1 172.7h0.8v2.1h-0.8zM235.5 140.1h1.4v0.7h-1.4zM236.3 163.5h1.4v0.7h-1.4zM249 171.4h1.2v1.8h-1.2zM147.7 142.3h2.4v1.3h-2.4zM86.7 172.8h2.7v1.9h-2.7zM244.9 148.3h2.1v0.6h-2.1zM109.5 171.2h1.7v2.2h-1.7zM303.9 171.7h2.1v2.4h-2.1zM141.1 142.8h0.9v1.3h-0.9zM207.8 153.8h1.7v1.4h-1.7zM210.7 175.7h2.6v2.9h-2.6zM206.3 174.6h2.6v1.6h-2.6zM118.1 164.8h3.5v1.7h-3.5z"/>
<path fill="#e8e4d4" d="M188.8 135.4h1.1v1h-1.1zM266.4 154.6h3v2h-3zM13.3 134.9h1.3v1.2h-1.3zM81.6 139.4h2.5v1h-2.5zM116.7 137h2v0.9h-2zM194.8 151.6h2.7v1.2h-2.7zM101.7 178.9h2.4v1.8h-2.4zM308.5 136.6h2.5v1.5h-2.5zM247 175.3h3.2v1.4h-3.2zM193.8 138.1h1.7v0.7h-1.7zM57.3 167.2h2.7v2.6h-2.7zM127.9 181h1.5v2.4h-1.5zM295.1 178.9h3.3v1h-3.3zM57.1 155.3h1.7v2.3h-1.7zM117.7 172.6h3.1v1.3h-3.1zM222.8 147.6h1v2h-1zM234 145h1.4v1.8h-1.4zM272.6 173.9h1.3v1.4h-1.3zM126.9 168.9h1.3v2.3h-1.3zM250.9 148.6h1v1.6h-1zM157.1 170.1h0.8v2.3h-0.8zM158.6 176.6h3.9v1.1h-3.9zM70 152h1v1.4h-1zM140.7 181.9h1.6v2.1h-1.6zM247.9 145.6h1.6v1.5h-1.6zM224.6 175.1h2.3v1.3h-2.3zM152.6 166.9h2.1v2h-2.1zM283.7 163.6h2.2v0.7h-2.2zM28.3 135.3h2.1v1.1h-2.1zM88.5 139.3h2.3v1.3h-2.3zM298.3 136.9h1.4v0.9h-1.4zM263.2 157.3h2.9v1.5h-2.9zM164.7 138.6h0.8v1.3h-0.8zM231.6 177.2h2.5v2.4h-2.5zM158.3 168.7h1.1v1.1h-1.1zM318.3 162.1h2.4v1h-2.4zM150.7 140.4h2v0.8h-2zM70.1 139.4h1.7v1.2h-1.7zM213 142.1h2v1.4h-2zM185.4 177.8h3.7v1.1h-3.7zM142.2 163.9h1.4v1.6h-1.4zM94.3 182.2h1v1.5h-1zM4.5 167.6h3.3v1.4h-3.3zM194 146.5h1.7v1.8h-1.7zM73.6 162h3v1.6h-3zM249.4 144.9h2.5v0.9h-2.5zM153.9 170.1h1.4v2.7h-1.4zM36.2 174.4h1.2v1.9h-1.2zM131 166.5h3.3v0.8h-3.3zM260.2 144.9h1.7v1.9h-1.7zM185.4 172.7h2.2v2.5h-2.2zM250.7 165.6h2.1v2.6h-2.1zM13 149.3h2.2v1.6h-2.2zM106.1 173.9h3.3v2.2h-3.3zM163.9 162.2h1.9v2.4h-1.9zM236.6 141.2h2.6v1.6h-2.6zM202.5 175.9h2.8v2.2h-2.8zM205.3 144.7h1.2v0.7h-1.2zM286.8 135.6h1.3v1.5h-1.3zM187.1 171.1h1.3v0.7h-1.3zM218.6 178.4h1.4v1.3h-1.4zM301.3 167.3h2.9v1.4h-2.9zM189.4 141.2h2.1v1.2h-2.1zM271.6 170.4h2.3v1.1h-2.3zM184.9 183.5h1v0.9h-1zM43 182h4v1.4h-4zM235.9 146.3h1.8v1.8h-1.8zM98.3 171.3h1.5v1.1h-1.5zM55.3 172.2h3.8v2.7h-3.8zM315.5 149.7h1.3v1.7h-1.3zM209.5 182.4h3.5v2.6h-3.5zM201.6 135.5h1.1v1.4h-1.1zM149.8 173.5h1.1v2.2h-1.1zM277 150h2.8v0.8h-2.8zM34.7 175.5h1.8v0.9h-1.8zM321.5 151.4h2v1.5h-2zM248 153.2h1v1.1h-1zM143.4 164h0.9v0.7h-0.9zM48 166.5h3.3v1.4h-3.3zM70.9 149.2h2v1.8h-2zM78.6 136.3h1.5v0.9h-1.5zM323 147.8h1v0.8h-1zM311.6 135.2h2.3v1.4h-2.3zM83.6 167.4h2.3v2.5h-2.3zM207.1 157.3h1.9v1.9h-1.9zM135.5 173.7h2.9v1.5h-2.9zM315.8 147.5h2.9v1.6h-2.9zM149.1 176.8h2.7v0.7h-2.7zM203.5 150.1h2.3v0.8h-2.3zM83.6 141.7h1.8v0.9h-1.8zM214.8 143h1.1v0.9h-1.1zM160.2 167.6h1.9v0.9h-1.9zM219.5 172.6h2.4v2h-2.4zM311.9 138.3h2.6v1h-2.6zM133.7 171.5h1v2.2h-1zM325.7 180.7h2.2v0.7h-2.2zM62.4 165.4h1.7v2.1h-1.7zM24 136.2h1.4v1.1h-1.4zM324.8 167.8h2.5v1.7h-2.5zM37 145.8h2.5v1.9h-2.5zM251.9 145.1h2.6v0.7h-2.6zM241.3 182.7h3.2v0.8h-3.2zM86.4 172.7h2.5v1.5h-2.5zM257 171.7h3.7v0.9h-3.7zM327 156.5h2.9v1.3h-2.9zM82.6 165.4h1.7v1.3h-1.7zM4.5 150.7h2.5v0.9h-2.5zM248.8 143.7h2.8v1.6h-2.8zM61.3 157.7h2.8v1.1h-2.8z"/>
<path fill="#d0c8b0" d="M174.7 170.3h3.6v0.9h-3.6zM8.3 169.7h3.3v2.4h-3.3zM116.2 182.7h4.2v2.3h-4.2zM1.3 169.2h1.6v2h-1.6zM298.2 169.1h1.6v1.3h-1.6zM39 153.5h2.9v2.2h-2.9zM166 179.7h2.4v1.2h-2.4zM198.7 160.7h3.1v2.2h-3.1zM251.3 142h1v1.4h-1zM28.7 151.8h1.8v1.4h-1.8zM97.5 181.8h0.9v1.3h-0.9zM130.3 176.3h3.9v1.3h-3.9zM219.3 159.6h2.4v1.8h-2.4zM38 137.7h2.1v1.7h-2.1zM38 168.4h2.8v2h-2.8zM247.9 149.8h2.1v0.8h-2.1zM125.8 137.1h1.4v1.1h-1.4zM5.2 134.3h1.8v1.5h-1.8zM24.3 143.3h1v1.9h-1zM140.4 144.2h2.1v1.1h-2.1zM134 141.1h1.5v1.6h-1.5zM165.9 174.2h1v2.7h-1zM58 155.7h1v2.1h-1zM323.9 151.3h0.9v2h-0.9zM103.6 162.9h3.1v2.2h-3.1zM250 156.3h2.4v0.9h-2.4zM79.6 136h2.3v1h-2.3zM161.4 182.4h4.1v1.3h-4.1zM1.9 135.8h1v0.8h-1zM60.9 139.2h1.2v0.7h-1.2zM24.4 148.9h1.7v2h-1.7zM241 151.5h2.2v2.2h-2.2zM243 150.4h2.4v2h-2.4zM131.3 163.3h1.9v1h-1.9zM103.4 164.6h1.6v2.3h-1.6zM319.8 136.8h0.8v1.5h-0.8zM240.4 142.1h1.2v1.6h-1.2zM261.6 150.1h2.2v1h-2.2zM246 174.7h3.8v1h-3.8zM223 145.7h1.3v1.3h-1.3zM220.8 176.7h1.2v1h-1.2zM30 138.6h1.9v1.3h-1.9zM224.5 170.9h1.7v1.6h-1.7zM107 177.4h2.1v0.6h-2.1zM148.3 142.6h1.6v1.1h-1.6zM33.2 137h2.3v1.6h-2.3zM193.1 142.7h0.8v0.7h-0.8zM42.3 145.6h2.6v1.4h-2.6zM315.5 150.2h3v1.7h-3zM57.2 153.3h0.8v1.9h-0.8zM39.4 169.9h2.5v1.9h-2.5zM293.5 165h1.7v1.1h-1.7zM158.1 134.4h1.6v1.2h-1.6zM30.3 154.8h2.8v1.8h-2.8zM1.1 151.5h2.3v1.1h-2.3zM169.1 180h3.7v1.1h-3.7zM26.6 167.1h2.8v0.8h-2.8zM285.5 182.6h1.6v2.1h-1.6zM253.1 135.8h0.9v1.1h-0.9zM256.2 171.6h2.3v1.7h-2.3zM8.4 177.7h1.9v1.6h-1.9zM232.1 152.3h2.8v1.1h-2.8zM139.8 168.4h1.6v0.6h-1.6zM52.1 150h2.4v1.1h-2.4zM220.9 148.7h1.3v1.1h-1.3zM271.8 141h2.1v1.8h-2.1zM15.8 175.4h3v1.6h-3zM278 146.1h1.7v1.4h-1.7zM110.5 141.6h0.9v0.8h-0.9zM50 154.1h3v0.9h-3zM196.6 135.6h1.4v1.4h-1.4zM32.8 139.5h2.3v1.5h-2.3zM313.6 173.7h3.9v2.2h-3.9zM282.5 145.1h0.8v1.1h-0.8zM236.2 181.3h2.8v0.9h-2.8zM119.7 172.8h1v1.7h-1zM87.4 144.2h1.9v1.6h-1.9zM286.4 144.2h1v0.8h-1zM103.9 164.1h3.4v1.6h-3.4zM24.7 162.4h1.6v1.7h-1.6zM14 152.2h1.6v1.9h-1.6zM241.1 150.6h2.1v1.5h-2.1zM262.6 145.6h1.5v1.5h-1.5zM8.8 140.8h0.8v1.7h-0.8zM192.8 159.9h2.6v1h-2.6zM66.7 169.7h1v2.1h-1zM8.5 170.4h0.9v1.7h-0.9zM164.2 135.7h0.9v1.6h-0.9zM261.1 159.2h2.2v1.6h-2.2zM206 152.1h2.4v1.1h-2.4zM0 174.1h2.4v0.6h-2.4zM40.4 149.9h1.6v0.7h-1.6zM320.4 156.2h3.1v1.6h-3.1zM154.8 168.1h2v2.3h-2zM73.6 164h3.1v1.7h-3.1zM261 180.1h0.9v1.6h-0.9zM191.3 166.7h3.2v2.1h-3.2zM245.6 163.3h2.6v2.3h-2.6zM145.7 142.7h1.1v1.1h-1.1zM316.9 164.1h2.6v1.4h-2.6zM279 143.5h1.6v0.8h-1.6zM213.2 150.7h2.2v0.9h-2.2zM42.9 162.9h2.9v1.2h-2.9z"/>
<path fill="#484030" d="M304.4 154.1h3v0.8h-3zM253.6 170.9h2.1v0.8h-2.1zM287.5 160.4h0.9v1.3h-0.9zM48.7 150.1h2.4v2h-2.4zM267.3 157.5h2.8v1.7h-2.8zM213.9 157.8h1.5v1.2h-1.5zM131.1 183.2h4.2v1.6h-4.2zM189.8 147.4h1.7v0.7h-1.7zM253.8 174h1.2v2h-1.2zM23.2 177.9h1.6v1.8h-1.6zM181.6 169.9h2.8v2.1h-2.8zM142.9 142.2h1.8v1.5h-1.8zM105.5 175.1h1.3v2.8h-1.3zM198.8 155.4h1v0.8h-1zM9.7 169h1v2.1h-1zM241.1 177h3v2h-3zM121.1 138.7h1.9v0.9h-1.9zM286.6 143.4h1.4v0.7h-1.4zM302.1 159.6h2.1v1.5h-2.1zM68.3 135.2h1.8v1.5h-1.8zM183.9 166.4h2.3v0.8h-2.3zM142.1 183.9h3.4v1h-3.4zM70 150.4h2.2v1h-2.2zM68.8 148.1h2v0.7h-2zM214.5 179.1h2.3v1h-2.3zM62.4 163.2h1.2v2h-1.2zM221.4 154.3h1.1v0.7h-1.1zM235.1 144.9h2.3v0.9h-2.3zM64.5 143.2h1.5v1.1h-1.5zM80.9 177.2h3.9v2.4h-3.9zM23.2 168.2h1.5v1.5h-1.5zM10 181.8h2.6v2h-2.6zM293.8 163.8h2.2v1.9h-2.2zM153.4 167.1h0.8v1.4h-0.8zM11.5 142.3h1.7v1.7h-1.7zM221.1 137.2h1.6v1.4h-1.6zM228.2 178.5h2.6v1h-2.6zM199.5 164.6h1.5v1.4h-1.5zM286.5 158.4h1.6v1.4h-1.6zM75.5 144.9h1.1v0.8h-1.1zM4 166.9h1.6v0.7h-1.6zM137.7 177.9h2.7v1.1h-2.7zM67.2 175.2h2v0.7h-2zM125.7 170.2h1.6v2.1h-1.6zM92.5 164.7h2.2v0.6h-2.2zM247 182.3h3.1v0.7h-3.1zM128.4 143.5h2.8v0.6h-2.8zM97 138h1.9v0.8h-1.9zM130 180.6h1.9v0.6h-1.9zM264.2 134h0.9v0.9h-0.9zM34.2 158.7h3.1v2.4h-3.1zM141.2 177.7h3.6v0.7h-3.6zM13.6 165.2h1.1v0.6h-1.1zM289.2 181.9h2.3v1.1h-2.3zM269.5 182h1.3v2.9h-1.3zM86.4 143.8h1.2v1.7h-1.2zM50.4 151.2h1.8v1.4h-1.8zM9.4 136.4h0.9v0.6h-0.9zM272 164.3h1.1v1.6h-1.1zM257.7 182.7h1.7v2h-1.7zM10 150.5h1.2v0.6h-1.2zM155 183.7h3.2v3.1h-3.2zM208.1 156.7h2.3v2h-2.3zM103.2 174.2h2.1v2.2h-2.1zM153.7 178.1h2.1v1.8h-2.1zM197.3 143.2h2v1.4h-2zM8.4 152.4h3v1.6h-3zM160.8 179.7h2.1v2.9h-2.1zM72.1 171.1h2.7v1.9h-2.7zM266.2 174.6h2.3v2.3h-2.3zM159.9 137.7h1.9v0.7h-1.9zM285 140.2h1.4v0.7h-1.4zM29.5 162.8h2.4v1.9h-2.4zM51.7 154.6h1.6v0.7h-1.6zM4.9 150.3h1.2v1.9h-1.2zM319.1 165h1.9v1h-1.9zM323.9 168.1h2.4v1.7h-2.4zM284.4 136.6h1.5v0.6h-1.5zM232.7 168.9h1.7v1.5h-1.7zM137.5 139.2h2v0.6h-2zM314.3 163.8h3.5v2.5h-3.5zM65.4 142.8h2.5v1.2h-2.5zM236.2 177h0.9v2.7h-0.9zM277 155.8h3.2v1.9h-3.2zM31.5 147h2.1v1.6h-2.1zM283.9 169.5h2v2.4h-2zM83.7 162.3h1.9v1.4h-1.9zM73.7 183.6h4.1v1.1h-4.1z"/>
<path fill="#1c1a14" d="M170.6 136h2.2v1.1h-2.2zM304.4 180.6h1.9v0.7h-1.9zM164.3 178.8h2.8v1.2h-2.8zM71.5 134.8h0.9v0.7h-0.9zM307.4 148.1h2.3v0.9h-2.3zM169 171.6h3.8v0.9h-3.8zM293.2 146.1h2.6v0.6h-2.6zM257.4 150.4h1.6v0.7h-1.6zM81.4 165.6h1.8v2.4h-1.8zM89.9 166.2h1.6v2.5h-1.6zM103.9 141.2h1.4v0.9h-1.4zM63.7 183.6h1.3v1.1h-1.3zM106.7 181.8h4.1v2.1h-4.1zM318.9 152.1h1.8v1.6h-1.8zM77.2 152.2h2.9v1.1h-2.9zM149.6 179.9h2.7v2.8h-2.7zM131.6 180.7h3.5v0.8h-3.5zM204.3 172.4h1.8v2.4h-1.8zM283.5 170.9h1.9v2.1h-1.9zM253.3 159.7h2.6v0.7h-2.6zM99.2 176.6h1.1v1.4h-1.1zM236 168.7h1.4v1.4h-1.4zM238.3 149.6h2.1v2h-2.1zM225.4 158.1h1.6v0.8h-1.6zM272.8 137.6h2.2v0.9h-2.2zM306.4 136.8h1.8v1.1h-1.8zM185.5 163.4h2.1v1.8h-2.1zM179.2 134.8h2.1v1.6h-2.1zM282.8 150.6h1.4v1.6h-1.4zM194.3 162.6h1.5v1.1h-1.5zM224.6 182.1h0.8v2.3h-0.8zM232.3 168.5h1.8v1.5h-1.8zM111 172.4h2.9v0.7h-2.9zM161.3 134.1h1.3v0.6h-1.3zM289.1 170.8h2.3v2.7h-2.3zM41.2 146.4h1.6v0.8h-1.6zM40.9 165.1h3v0.8h-3zM150.2 174.2h3.9v2.3h-3.9zM220 134h1.6v1.2h-1.6zM1.6 165.4h3v0.9h-3zM71.9 152.1h1.1v1h-1.1zM288.2 157.3h3.1v1.5h-3.1zM164.1 168h1.4v2h-1.4zM85.3 144.6h1.6v1.9h-1.6zM236.2 152.8h1.6v1.4h-1.6zM193 174.1h1.5v1.5h-1.5zM290.9 165.5h2.7v2.1h-2.7zM85.5 162.6h2.5v0.9h-2.5zM292.2 152h2.8v1.1h-2.8zM49.3 171.3h1.1v2.5h-1.1zM267 157.9h1.1v1.1h-1.1zM183.5 169.7h1.3v0.9h-1.3zM77.8 168.4h1.4v1.6h-1.4zM23.9 164.8h2.5v0.8h-2.5zM167.3 141.5h1.5v1.2h-1.5zM27.7 163.1h2.6v1.8h-2.6zM18.8 145h2.1v1h-2.1zM200.2 176.8h3.5v2.1h-3.5zM177.4 140.6h0.8v1.7h-0.8zM104.6 180.3h0.8v0.9h-0.8zM216.2 170h2.9v1h-2.9zM1.2 152.4h1v1.3h-1zM199.2 159.3h3.1v0.9h-3.1zM120.2 140.4h1.2v1.7h-1.2zM37.8 183.9h3.3v2.2h-3.3zM78.1 178.6h3.8v2.5h-3.8zM253.4 155.2h1.4v1.8h-1.4zM139.2 144.3h2.5v1.6h-2.5zM326.5 183.8h2.5v1.3h-2.5zM15.6 160.5h1.7v0.9h-1.7zM123.2 181.5h1.9v1.2h-1.9zM25.7 151.8h2.3v0.9h-2.3zM300.7 173.9h3.5v1.5h-3.5zM145.3 170.2h2.4v1.6h-2.4zM233.6 158.1h0.8v0.9h-0.8zM21 154.7h1.2v0.9h-1.2zM70.1 162.6h1.6v1.5h-1.6zM84 165.7h2.2v1.7h-2.2zM8.1 183.1h3.1v2.7h-3.1zM263 169.2h2.2v1.4h-2.2zM58.2 134.6h2.4v0.6h-2.4zM121.6 141.2h1.6v1.3h-1.6zM240.2 182.5h2.9v2.6h-2.9zM251.2 143.8h1.8v1.4h-1.8zM251.2 147.1h0.8v1.4h-0.8zM167.6 144.2h2.8v2h-2.8zM283.2 169.8h3v2.3h-3zM193.1 183.4h1.4v2.7h-1.4zM216.1 149.4h2.2v1.4h-2.2zM67.7 148h1.8v1.5h-1.8zM225.7 137.8h1.1v1.4h-1.1zM221.8 164.7h1.3v1.6h-1.3zM255.3 138.7h1.2v1.2h-1.2zM303.5 155.2h3.2v2h-3.2zM7.1 167.4h1v0.9h-1zM17.7 183.2h1.5v1.4h-1.5zM191 158h1.1v1.9h-1.1zM92.2 174h1.6v2.5h-1.6zM23.2 149.6h1.1v1h-1.1zM193.2 154.4h3.2v0.8h-3.2zM251.6 152.3h1v1.2h-1zM293 153.6h1.5v1.3h-1.5zM266.2 149h2.8v1.9h-2.8z"/>
<path fill="#242018" d="M27.8 162.3h2.8v1.3h-2.8zM201.8 152.7h1.7v0.7h-1.7zM306.6 147.9h1.2v0.9h-1.2zM262.2 181.7h3.4v1.4h-3.4zM205.7 157.8h1.9v0.7h-1.9zM320.8 138.4h1.9v1.1h-1.9zM179.8 174.5h3.5v0.8h-3.5zM23.8 160.6h1.4v2.2h-1.4zM44.4 141.3h2.4v1.1h-2.4zM315.3 172.6h2.9v1.8h-2.9zM5.7 183.5h4v2.7h-4zM226 147.6h1.8v1.5h-1.8zM270.8 136.6h1.6v0.8h-1.6zM68.8 144.2h1.2v0.8h-1.2zM58.3 144.7h0.9v0.9h-0.9zM100.2 176.4h2.2v2.7h-2.2zM160.3 165.2h2.5v1.5h-2.5zM314.7 156.3h1.8v2.1h-1.8zM78.1 165.7h0.9v1.7h-0.9zM18 178.4h1v2.8h-1zM272.7 165.9h1.3v0.9h-1.3zM305.1 162.8h1.2v1.7h-1.2zM190.5 170.2h2.3v1.2h-2.3zM223.1 162.6h2.4v0.7h-2.4zM164.6 135.4h1.6v1.4h-1.6zM37 146.4h1.5v0.8h-1.5zM70.7 159.1h1.5v2.4h-1.5zM66.2 178.6h2.9v2.2h-2.9zM28.5 136h1v1.5h-1zM227.3 154.5h1.3v1.6h-1.3zM276.8 160.9h1.7v1.1h-1.7zM185.7 170.1h3.5v2.3h-3.5zM239.6 156.7h2.1v1h-2.1zM210.1 141.8h2.6v1.6h-2.6zM153.6 143.4h1.3v0.8h-1.3zM18.2 154.1h1.4v0.6h-1.4zM289.4 152.6h2.1v1.1h-2.1zM240.2 134.9h1.6v1.5h-1.6zM264.1 181.7h3.3v1.6h-3.3zM128.5 135.2h1.6v0.9h-1.6zM79.4 146.6h0.9v1.9h-0.9zM221.9 150.7h2.6v0.9h-2.6zM213.8 160.6h1.6v2.1h-1.6zM210.4 161.8h2.5v0.8h-2.5zM221.7 178.4h2.1v1h-2.1zM237.3 178.6h1v1.8h-1zM31.2 181.8h1.9v0.7h-1.9zM68.2 147.6h1.2v0.6h-1.2zM280.1 144.3h2.5v1.3h-2.5zM92.2 136.8h0.8v1.7h-0.8zM97.7 170.9h3.7v2.3h-3.7zM274.8 178.8h1.9v2.9h-1.9zM205.2 139.4h1.5v1.4h-1.5zM235.7 182.9h1.6v1.4h-1.6zM23.7 141.1h1v1.9h-1zM258.6 176.1h1.4v2.4h-1.4zM233.8 173.9h1v1h-1zM58.7 135.9h1v0.8h-1zM232.3 172.5h3.2v0.6h-3.2zM27.7 179.8h2.2v2.8h-2.2zM195.1 157.5h2.3v1.2h-2.3zM53 173.8h2.2v0.9h-2.2zM288.2 166.6h1.7v1.3h-1.7zM283.8 136.7h1.9v1h-1.9zM272.3 154.1h3.2v1.1h-3.2zM320.8 143.8h1.4v1.4h-1.4zM259.6 161.4h1.6v2.3h-1.6zM223.3 178h3.4v1.8h-3.4zM53.4 182.1h0.9v2.8h-0.9zM295.4 154.4h2.6v1h-2.6zM126.6 179.5h1.9v0.8h-1.9zM284.2 159.3h2.2v1.2h-2.2zM308.2 157.3h3.1v1.8h-3.1zM269.5 179.6h2.4v0.6h-2.4zM307.8 167.1h3.5v2.1h-3.5zM299.9 137.6h1.3v1.8h-1.3zM162.7 171.8h2.2v2.7h-2.2zM172.2 183.6h1.8v1.2h-1.8zM8.9 183.2h2.8v2.6h-2.8zM87.8 169.1h2.4v0.7h-2.4zM182.1 169.2h1.3v2.5h-1.3zM306.1 162.3h3v1.1h-3zM40.9 155.3h2.4v2.2h-2.4zM132.4 176.4h2.1v2.5h-2.1zM49 143.2h1.3v1.6h-1.3zM183.6 171.6h1.7v2.6h-1.7zM11.6 137.2h0.8v1.3h-0.8zM231.7 139.6h1.7v1.1h-1.7zM106.6 134.6h0.9v0.8h-0.9zM1.9 159.2h2.8v1.9h-2.8zM69.3 173.2h1.5v1.9h-1.5zM17.2 175.9h3.1v2.1h-3.1zM321.6 176.1h3.7v1.3h-3.7zM237 154.9h1.2v2.1h-1.2zM25.2 137.6h2.3v1.6h-2.3zM89.1 179.7h3.4v1.6h-3.4zM8.5 135.4h2v0.8h-2zM90.1 138.6h2.1v1.4h-2.1zM43.8 163.5h1.8v2.5h-1.8zM1.5 147.2h1v0.6h-1zM83.9 180.3h1.7v1.9h-1.7z"/>
<path fill="#3c3428" d="M258 146.5h1.4v2.1h-1.4zM184.6 140.2h1.3v1h-1.3zM221.4 175.2h1.1v2.8h-1.1zM188.2 170.4h1.5v2.4h-1.5zM17.4 172.7h3.3v1.7h-3.3zM72.1 170.3h3.3v2.4h-3.3zM238.2 134.1h0.8v0.6h-0.8zM119.6 182.2h1.1v1h-1.1zM78.9 138.7h2.5v0.7h-2.5zM195 148.4h1.7v1.9h-1.7zM34.8 163.9h2.6v0.9h-2.6zM73.3 156.7h1.8v1.6h-1.8zM75.2 163.3h3.2v1.1h-3.2zM189.1 159.9h1.4v0.9h-1.4zM69.6 150.9h1.5v0.9h-1.5zM308.8 172.4h2.8v2.3h-2.8zM222.3 162.3h0.9v2.1h-0.9zM40.7 166.6h2.2v1.2h-2.2zM12.5 177h3.7v0.8h-3.7zM311.9 139.4h1.8v1.7h-1.8zM237.1 180.2h2.3v0.7h-2.3zM166.2 139h1.9v1.3h-1.9zM19 135.9h2.3v1.4h-2.3zM79.2 159h2.9v1.5h-2.9zM325.5 145.3h2.7v1.8h-2.7zM75 154.2h3.2v1.8h-3.2zM281.5 161.6h2v2h-2zM69.7 166.9h3.4v0.8h-3.4zM151.1 172.1h3.2v1.6h-3.2zM126.4 167.5h1.7v1h-1.7zM321.9 146.2h1.8v1.7h-1.8zM172.8 179.2h3.9v1.1h-3.9zM215.5 152.3h2.6v1h-2.6zM149.8 135.1h1.8v1.7h-1.8zM120 179.2h3.1v1.2h-3.1zM168.6 169.5h1v0.6h-1zM195.8 151.7h1.4v2.1h-1.4zM176.6 137.6h2v0.9h-2zM298.6 140.9h2.5v1.5h-2.5zM130.9 180.7h1.3v2.1h-1.3zM83.4 162.4h3.5v1.9h-3.5zM52.2 153.3h1.9v1.7h-1.9zM167.1 175.6h3.2v2.6h-3.2zM226.2 148.1h2.6v1.3h-2.6zM6.4 168.8h1.1v1.4h-1.1zM219.8 174.9h2.7v1.7h-2.7zM160.7 140.5h1.3v0.9h-1.3zM201.5 165.9h1.9v1.9h-1.9zM204 156.3h2.8v1.8h-2.8zM123.4 178.2h3.6v1.3h-3.6zM25.6 168.9h1.6v2.2h-1.6zM26.6 180.7h3.2v1.3h-3.2zM257.1 145.4h1.2v0.9h-1.2zM110 136h2.1v0.8h-2.1zM239.8 175h3.7v2.5h-3.7zM238.1 139h1.9v1.6h-1.9zM198.6 157.4h2.2v0.6h-2.2zM154.6 164.2h2.8v1.1h-2.8zM184.1 140.5h2.6v0.8h-2.6zM251.6 172.1h3.3v2.1h-3.3zM4.7 156.9h2.1v1.4h-2.1zM256 155.2h2.6v0.9h-2.6zM290 146.8h0.8v1.4h-0.8zM152.4 142.6h1.4v1.7h-1.4zM36.4 163.6h3.5v1.8h-3.5zM272.8 148h2.8v1.6h-2.8zM25.5 146.8h1.7v2.1h-1.7zM48.6 166.2h0.9v2.5h-0.9zM195.5 144.4h2.4v1.4h-2.4zM246 167.5h2.2v1.3h-2.2zM102.3 181.8h1.8v0.8h-1.8zM242.8 150.3h1.2v1.7h-1.2zM13.4 181.8h2.3v0.6h-2.3zM305.2 138.4h1.4v0.8h-1.4zM306.3 134.1h1.4v0.6h-1.4zM102.3 178.2h3.1v2.6h-3.1zM24 157h1.1v1.6h-1.1zM246.8 170.7h2.6v1.6h-2.6zM296.7 173.4h3.6v2.4h-3.6zM296.2 180.2h3.9v2.9h-3.9zM253.2 146.9h1.1v0.7h-1.1zM317.7 134.8h0.9v1.5h-0.9zM238.5 150.4h2.4v1.6h-2.4zM131.1 174.2h1v2.6h-1zM260.8 149.8h1.2v1.8h-1.2zM204.8 149.8h0.9v2.1h-0.9zM5.7 176.5h1.8v2.5h-1.8zM63.2 160.6h1.2v0.8h-1.2zM127.3 168.7h3.7v1.4h-3.7zM326.4 174.1h2.9v1.1h-2.9zM260.2 144.1h1.5v1h-1.5zM309.5 164.2h3.1v2.2h-3.1zM66.7 166.2h0.8v1.4h-0.8zM119.5 167.6h2.7v0.6h-2.7zM224.1 134.2h1.3v0.7h-1.3zM189.4 151.1h2.7v1.3h-2.7zM18.2 145.3h2.3v1h-2.3zM235 170.7h1.5v2.5h-1.5zM94.5 175.7h3.6v1.1h-3.6zM17.7 177.2h3.9v0.7h-3.9zM173.7 180.1h2.5v2.8h-2.5zM298 159.2h3.3v1.6h-3.3zM227.2 147.7h1.9v2h-1.9zM249.8 141.6h1.4v0.6h-1.4z"/>
<path fill="#c0b898" d="M325.6 134.5h1.2v1.4h-1.2zM86.7 178h3.5v1.6h-3.5zM314.3 178.7h1.2v0.8h-1.2zM3.7 138.5h2.3v1.5h-2.3zM189.4 158.9h2.8v1.3h-2.8zM237.1 179.4h3.4v2.1h-3.4zM129.1 143.6h2v1.9h-2zM269.8 167.3h0.8v2.2h-0.8zM36.6 159.4h2.1v2.3h-2.1zM320.4 163h3.2v0.9h-3.2zM204.6 165.6h2.7v1.3h-2.7zM180.6 141.9h1.2v1.2h-1.2zM51.1 158.4h1.9v1.3h-1.9zM255.8 160.1h1.4v1.8h-1.4zM5.5 139.3h1.4v1h-1.4zM95.1 142.4h1.9v0.7h-1.9zM195.3 182.5h3.9v2h-3.9zM26.1 153.7h1.4v1.6h-1.4zM89.6 168.2h3.5v1h-3.5zM272.9 162.3h3v2.3h-3zM219.8 146h1.8v1.3h-1.8zM100.7 139.5h1v1.3h-1zM59.6 180.8h1.3v2.6h-1.3zM25.5 175.4h1.6v0.9h-1.6zM150.9 173h2.4v2.3h-2.4zM200.9 173.1h0.9v2.3h-0.9zM79.4 182.2h1.5v0.8h-1.5zM300.2 137.9h2.5v0.6h-2.5zM234.6 170.8h1.6v1.7h-1.6zM228.6 168.9h2.7v1.1h-2.7zM224.6 138.5h1.2v1.5h-1.2zM221.3 169.5h1.6v1.2h-1.6zM78.6 181.5h1.5v0.8h-1.5zM144.7 181.9h2.2v2.8h-2.2zM191.7 135.3h2.3v1.6h-2.3zM134.7 140h1.3v1.5h-1.3zM109.1 170.9h2.7v2.2h-2.7zM54.9 159.9h1.3v1.2h-1.3zM40.8 161h2.7v0.9h-2.7zM172.8 169.4h3.7v1.2h-3.7zM301 147.4h2v1.9h-2zM229 183.5h3.5v1.2h-3.5zM291.7 140.5h1.6v1.3h-1.6zM278.6 181.9h3.2v2.5h-3.2zM318.2 170.3h2.3v2.4h-2.3zM13.5 154.5h2.6v1.1h-2.6zM287.8 137.8h2.6v1.2h-2.6zM182.7 139.6h1.2v1.5h-1.2zM90.1 136.8h1.1v1.4h-1.1zM33.3 155.9h1v0.9h-1zM246.7 162.8h3v1.1h-3zM46.5 150.5h2v1.1h-2zM150.3 172.3h2.1v2h-2.1zM228.6 176.7h2.5v2.9h-2.5zM78.6 164.4h3.2v2h-3.2zM254.3 181.3h2v2h-2zM265.9 171.9h2.2v2.2h-2.2zM284.9 173.2h2.3v1.2h-2.3zM126.9 171.8h2.2v1.9h-2.2zM174.5 180.9h4.2v2.4h-4.2zM62 138.2h1.1v1.7h-1.1zM311.3 148.6h1.8v1.1h-1.8zM43.1 147.7h1.8v1.9h-1.8zM281.9 170.2h2.2v2h-2.2zM162.3 181.3h0.9v1.5h-0.9zM93.7 166.1h1.2v1.4h-1.2zM1 151.4h1.4v1.7h-1.4zM288.7 174.7h3.9v1.3h-3.9zM102.8 164.4h1.7v2.5h-1.7zM186.4 166.2h2.5v1.5h-2.5zM22.7 169.2h2.7v1h-2.7zM21.9 163.4h2v2.3h-2zM60.5 135.7h1.4v0.6h-1.4zM160.6 172.2h2.9v2.7h-2.9zM220.5 181.7h1.7v2.1h-1.7zM264.5 166h2.7v2.4h-2.7zM312.5 136.7h1.1v0.6h-1.1zM292.8 165.2h2.7v1.4h-2.7zM254.4 140.3h2.6v1.8h-2.6zM216.9 178.8h1.6v2.7h-1.6zM228.8 147.5h2.3v1.3h-2.3zM70.7 168h3v2.6h-3zM292.4 156.8h1.8v1.8h-1.8zM53.6 148.2h1.1v1.8h-1.1zM216.8 135.2h2v1.5h-2zM67.2 147.9h1.6v0.7h-1.6zM293.4 165.3h2.8v1.2h-2.8zM197.9 143.6h2.7v1.4h-2.7zM173.7 181h2.5v2.7h-2.5zM71.6 176h1.1v2.2h-1.1zM11.5 178.6h4.1v2.3h-4.1zM223.2 143.5h0.8v1.1h-0.8zM311 183.4h3.5v2.5h-3.5zM52.3 170.5h2.3v2.1h-2.3zM149.7 143.5h2.4v1.3h-2.4zM16.7 178.1h2.5v2.2h-2.5zM257.1 150.5h2.3v1h-2.3zM218.8 183.2h1v0.9h-1z"/>
</g>
<rect x="0" y="160" width="327" height="24" fill="url(#dk)"/>
</g>
</svg>
</div>
<div class="st"><span class="d">-rw-r--r--</span><span>kangmh</span><span>staff</span><span>1.8M</span><span>2024-04-24 20:10:19+09:00</span></div>
<div class="cnt">14/15</div>
</div>
</body>
</html>
